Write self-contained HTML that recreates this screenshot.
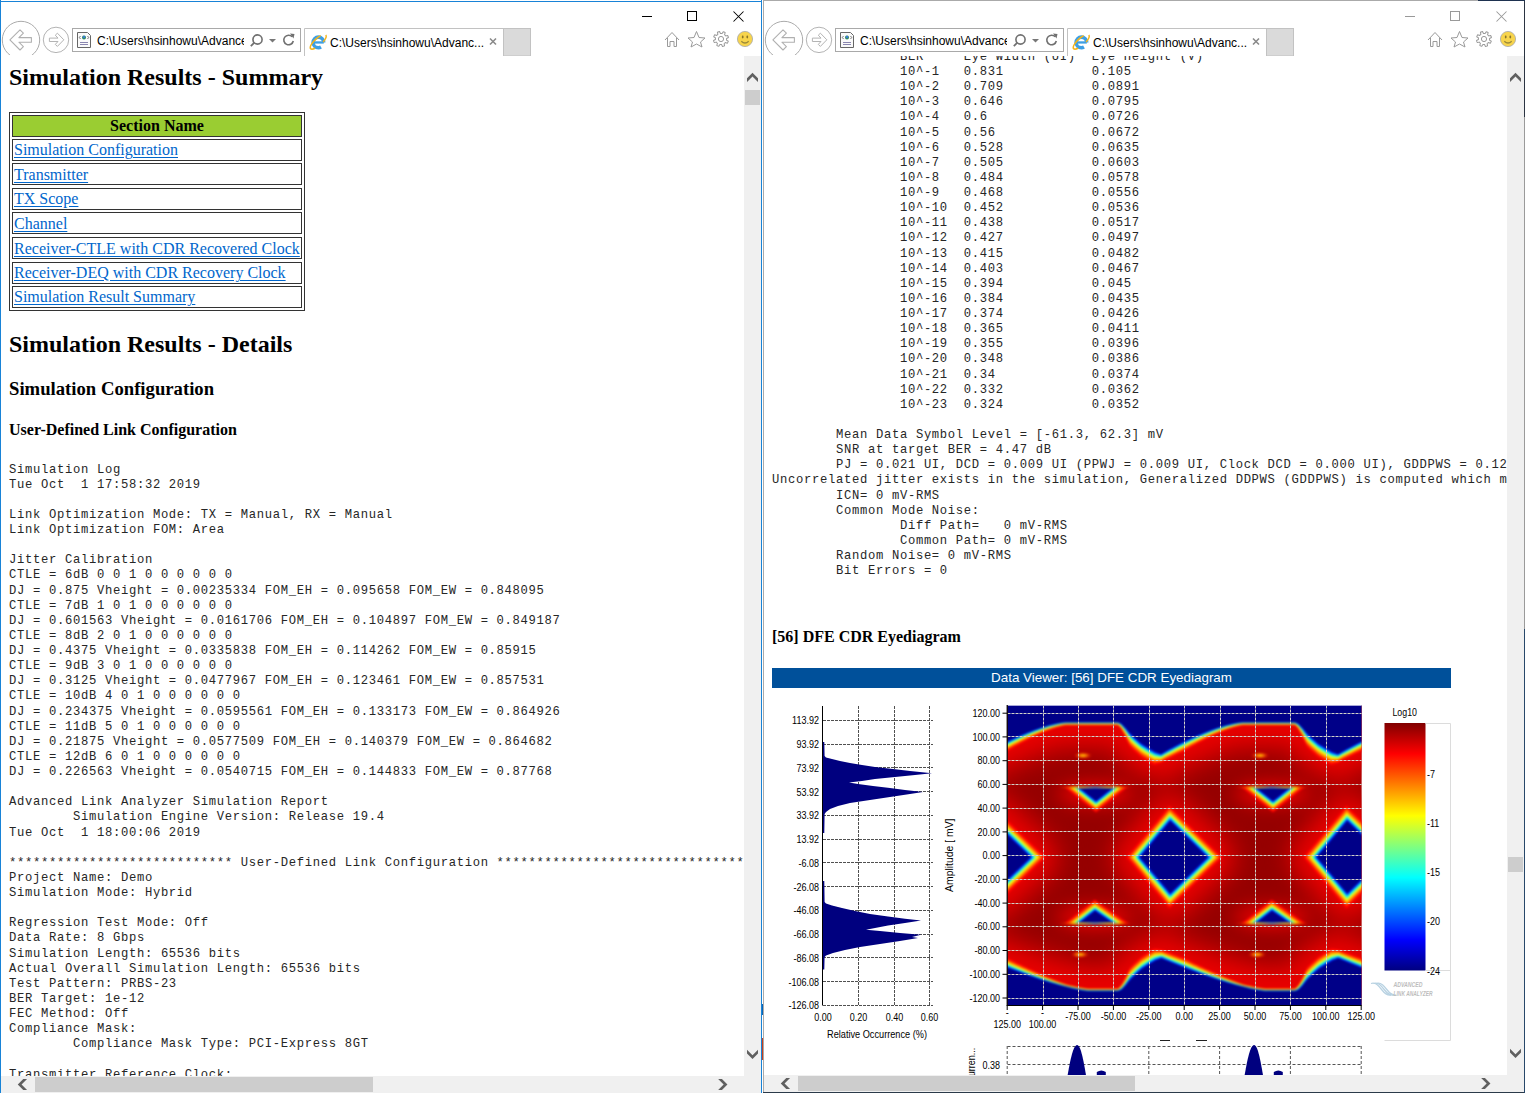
<!DOCTYPE html><html><head><meta charset="utf-8"><style>
*{margin:0;padding:0;box-sizing:border-box}
html,body{width:1525px;height:1093px;overflow:hidden;background:#fff}
.a{position:absolute}
.ui{font-family:"Liberation Sans",sans-serif;font-size:12px;color:#000;white-space:pre}
.pre{font-family:"Liberation Mono",monospace;font-size:12.2px;letter-spacing:0.68px;line-height:15.125px;white-space:pre;color:#262626}
.serif{font-family:"Liberation Serif",serif;font-weight:bold;white-space:pre;color:#000}
.clip{overflow:hidden}
.ch{font-family:"Liberation Sans",sans-serif;font-size:11px;white-space:pre;color:#000}
</style></head><body>
<div class="a" style="left:0px;top:0;width:762px;height:1093px;background:#fff"></div><svg class="a" style="left:0px;top:0" width="762" height="56" viewBox="0 0 762 56"><path d="M642 16.5H652" stroke="#000" stroke-width="1"/><rect x="687.5" y="11.5" width="9" height="9" fill="none" stroke="#000" stroke-width="1"/><path d="M733.5 11.5L743.5 21.5M743.5 11.5L733.5 21.5" stroke="#000" stroke-width="1.05"/><clipPath id="cb0"><rect x="0" y="0" width="70" height="55"/></clipPath><circle cx="21" cy="40" r="18.7" fill="none" stroke="#ababab" stroke-width="1" clip-path="url(#cb0)"/><path d="M9.9 39.9L20 29.8L23.4 33.2L18.9 37.6H31.4V42.2H18.9L23.4 46.6L20 50Z" fill="none" stroke="#b0b0b0" stroke-width="1.1" stroke-linejoin="round"/><circle cx="56" cy="39.9" r="12.7" fill="none" stroke="#b4b4b4" stroke-width="1"/><path d="M49.4 38.1H58L55.3 35.2L57.4 33.2L63.8 39.8L57.4 46.4L55.3 44.4L58 41.5H49.4Z" fill="none" stroke="#b4b4b4" stroke-width="1" stroke-linejoin="round"/><rect x="72.5" y="28.5" width="228" height="23" fill="#fff" stroke="#a9a9a9" stroke-width="1"/><path d="M77.5 32.5H87.5L90.5 35.5V47.5H77.5Z" fill="#fafafa" stroke="#666" stroke-width="1"/><circle cx="84" cy="37.5" r="2" fill="#2a8a5a"/><circle cx="84" cy="37" r="1.2" fill="#3a7bd5"/><path d="M80.5 36L79.3 37.5L80.5 39M87.5 36L88.7 37.5L87.5 39" fill="none" stroke="#555" stroke-width="0.8"/><path d="M80 42.5H88M80 44.5H88" stroke="#8a86b0" stroke-width="1"/><circle cx="257.5" cy="39.5" r="4.6" fill="none" stroke="#707070" stroke-width="1.6"/><path d="M254.3 42.7L250.8 46.2" stroke="#707070" stroke-width="1.8"/><path d="M269 39H276L272.5 42.5Z" fill="#777"/><path d="M292.2 36.8A4.8 4.8 0 1 0 293.3 41" fill="none" stroke="#707070" stroke-width="1.6"/><path d="M290 33.5L294.5 34L293.5 38.5Z" fill="#707070"/><path d="M304.5 56V28.5H503.5V56" fill="#fff" stroke="#c2c2c2" stroke-width="1"/><rect x="503.5" y="28.5" width="27" height="27.5" fill="#dadada" stroke="#c2c2c2" stroke-width="1"/><circle cx="318.4" cy="42.4" r="5.3" fill="none" stroke="#3d9fe4" stroke-width="3.6" stroke-dasharray="0 5.4 27.9"/><rect x="313.2" y="41.3" width="10.6" height="2.3" fill="#3d9fe4"/><ellipse cx="318.2" cy="41.8" rx="10.2" ry="3.6" fill="none" stroke="#f4b41a" stroke-width="1.5" transform="rotate(-42 318.2 41.8)" stroke-dasharray="22 10" stroke-dashoffset="14"/><path d="M490 38.5L496 44.5M496 38.5L490 44.5" stroke="#8a8a8a" stroke-width="1.6"/><path d="M665 40L672 32.5L679 40M667.5 38V46.5H670V41.5H674V46.5H676.5V38" fill="none" stroke="#9a9a9a" stroke-width="1" stroke-linejoin="round"/><path d="M696.5 31.5L699 37.5L705 38L700.5 42L702 47L696.5 44L691 47L692.5 42L688 38L694 37.5Z" fill="none" stroke="#9a9a9a" stroke-width="1" stroke-linejoin="round"/><path d="M728.60 39.00L728.56 39.74L728.45 40.48L726.36 40.63L726.17 41.14L725.94 41.64L725.66 42.11L726.87 43.82L726.37 44.37L725.82 44.87L725.22 45.32L723.64 43.94L723.14 44.17L722.63 44.36L722.09 44.49L721.74 46.56L721.00 46.60L720.26 46.56L719.52 46.45L719.37 44.36L718.86 44.17L718.36 43.94L717.89 43.66L716.18 44.87L715.63 44.37L715.13 43.82L714.68 43.22L716.06 41.64L715.83 41.14L715.64 40.63L715.51 40.09L713.44 39.74L713.40 39.00L713.44 38.26L713.55 37.52L715.64 37.37L715.83 36.86L716.06 36.36L716.34 35.89L715.13 34.18L715.63 33.63L716.18 33.13L716.78 32.68L718.36 34.06L718.86 33.83L719.37 33.64L719.91 33.51L720.26 31.44L721.00 31.40L721.74 31.44L722.48 31.55L722.63 33.64L723.14 33.83L723.64 34.06L724.11 34.34L725.82 33.13L726.37 33.63L726.87 34.18L727.32 34.78L725.94 36.36L726.17 36.86L726.36 37.37L726.49 37.91L728.56 38.26Z" fill="none" stroke="#9a9a9a" stroke-width="1" stroke-linejoin="round" transform="rotate(22.5 721 39)"/><circle cx="721" cy="39" r="2.6" fill="none" stroke="#9a9a9a" stroke-width="1"/><circle cx="745" cy="39" r="7.6" fill="#f7d44c" stroke="#a8a8a8" stroke-width="0.8"/><ellipse cx="742.7" cy="37" rx="0.9" ry="1.4" fill="#8a7428"/><ellipse cx="747.3" cy="37" rx="0.9" ry="1.4" fill="#8a7428"/><path d="M741.3 41.2Q745 44.8 748.7 41.2" fill="none" stroke="#9b8a3a" stroke-width="1.2"/></svg><div class="a ui clip" style="left:97px;top:32px;width:147px;height:18px;line-height:18px">C:\Users\hsinhowu\AdvancedLinkAnalyzer</div><div class="a ui clip" style="left:330px;top:34px;width:158px;height:18px;line-height:18px">C:\Users\hsinhowu\Advanc...</div><div class="a" style="left:0px;top:1px;width:762px;height:1px;background:#1883d7"></div><div class="a" style="left:0px;top:0;width:1px;height:1093px;background:#1883d7"></div><div class="a" style="left:761px;top:0;width:1px;height:1093px;background:#1883d7"></div>
<div class="a clip" style="left:1px;top:56px;width:743px;height:1020px"><div class="a serif" style="left:8px;top:6px;font-size:24px;line-height:30px">Simulation Results - Summary</div><div class="a" style="left:8px;top:56px;width:296px;height:199px;border:1px solid #333;border-right-color:#333;border-bottom-color:#333"></div><div class="a serif" style="left:11px;top:59.0px;width:290px;height:22px;border:1px solid #333;background:#9acd32;text-align:center;font-size:16px;line-height:20px">Section Name</div><div class="a" style="left:11px;top:83.2px;width:290px;height:22px;border:1px solid #333"></div><div class="a" style="left:13px;top:84.4px;font-family:'Liberation Serif',serif;font-size:16px;line-height:20px;color:#0066cc;text-decoration:underline;text-underline-offset:2.2px;white-space:pre">Simulation Configuration</div><div class="a" style="left:11px;top:107.3px;width:290px;height:22px;border:1px solid #333"></div><div class="a" style="left:13px;top:108.5px;font-family:'Liberation Serif',serif;font-size:16px;line-height:20px;color:#0066cc;text-decoration:underline;text-underline-offset:2.2px;white-space:pre">Transmitter</div><div class="a" style="left:11px;top:132.0px;width:290px;height:22px;border:1px solid #333"></div><div class="a" style="left:13px;top:133.2px;font-family:'Liberation Serif',serif;font-size:16px;line-height:20px;color:#0066cc;text-decoration:underline;text-underline-offset:2.2px;white-space:pre">TX Scope</div><div class="a" style="left:11px;top:156.3px;width:290px;height:22px;border:1px solid #333"></div><div class="a" style="left:13px;top:157.5px;font-family:'Liberation Serif',serif;font-size:16px;line-height:20px;color:#0066cc;text-decoration:underline;text-underline-offset:2.2px;white-space:pre">Channel</div><div class="a" style="left:11px;top:181.3px;width:290px;height:22px;border:1px solid #333"></div><div class="a" style="left:13px;top:182.5px;font-family:'Liberation Serif',serif;font-size:16px;line-height:20px;color:#0066cc;text-decoration:underline;text-underline-offset:2.2px;white-space:pre">Receiver-CTLE with CDR Recovered Clock</div><div class="a" style="left:11px;top:205.5px;width:290px;height:22px;border:1px solid #333"></div><div class="a" style="left:13px;top:206.7px;font-family:'Liberation Serif',serif;font-size:16px;line-height:20px;color:#0066cc;text-decoration:underline;text-underline-offset:2.2px;white-space:pre">Receiver-DEQ with CDR Recovery Clock</div><div class="a" style="left:11px;top:229.5px;width:290px;height:22px;border:1px solid #333"></div><div class="a" style="left:13px;top:230.7px;font-family:'Liberation Serif',serif;font-size:16px;line-height:20px;color:#0066cc;text-decoration:underline;text-underline-offset:2.2px;white-space:pre">Simulation Result Summary</div><div class="a serif" style="left:8px;top:273px;font-size:24px;line-height:30px">Simulation Results - Details</div><div class="a serif" style="left:8px;top:322px;font-size:18.7px;line-height:22px">Simulation Configuration</div><div class="a serif" style="left:8px;top:364px;font-size:16px;line-height:20px">User-Defined Link Configuration</div><div class="a pre" style="left:8px;top:406.6px">Simulation Log
Tue Oct  1 17:58:32 2019

Link Optimization Mode: TX = Manual, RX = Manual
Link Optimization FOM: Area

Jitter Calibration
CTLE = 6dB 0 0 1 0 0 0 0 0 0
DJ = 0.875 Vheight = 0.00235334 FOM_EH = 0.095658 FOM_EW = 0.848095
CTLE = 7dB 1 0 1 0 0 0 0 0 0
DJ = 0.601563 Vheight = 0.0161706 FOM_EH = 0.104897 FOM_EW = 0.849187
CTLE = 8dB 2 0 1 0 0 0 0 0 0
DJ = 0.4375 Vheight = 0.0335838 FOM_EH = 0.114262 FOM_EW = 0.85915
CTLE = 9dB 3 0 1 0 0 0 0 0 0
DJ = 0.3125 Vheight = 0.0477967 FOM_EH = 0.123461 FOM_EW = 0.857531
CTLE = 10dB 4 0 1 0 0 0 0 0 0
DJ = 0.234375 Vheight = 0.0595561 FOM_EH = 0.133173 FOM_EW = 0.864926
CTLE = 11dB 5 0 1 0 0 0 0 0 0
DJ = 0.21875 Vheight = 0.0577509 FOM_EH = 0.140379 FOM_EW = 0.864682
CTLE = 12dB 6 0 1 0 0 0 0 0 0
DJ = 0.226563 Vheight = 0.0540715 FOM_EH = 0.144833 FOM_EW = 0.87768

Advanced Link Analyzer Simulation Report
        Simulation Engine Version: Release 19.4
Tue Oct  1 18:00:06 2019

**************************** User-Defined Link Configuration ****************************************
Project Name: Demo
Simulation Mode: Hybrid

Regression Test Mode: Off
Data Rate: 8 Gbps
Simulation Length: 65536 bits
Actual Overall Simulation Length: 65536 bits
Test Pattern: PRBS-23
BER Target: 1e-12
FEC Method: Off
Compliance Mask:
        Compliance Mask Type: PCI-Express 8GT

Transmitter Reference Clock:
        Clock Jitter: 0</div></div>
<div class="a" style="left:744px;top:56px;width:17px;height:1037px;background:#f0f0f0"></div><div class="a" style="left:745px;top:90px;width:15px;height:15px;background:#cdcdcd"></div><div class="a" style="left:1px;top:1076px;width:743px;height:17px;background:#f0f0f0"></div><div class="a" style="left:35px;top:1077px;width:338px;height:15px;background:#cdcdcd"></div><svg class="a" style="left:0px;top:0" width="762" height="1093"><polygon points="747.00,78.20 752.50,72.70 758.00,78.20 758.00,82.00 752.50,76.50 747.00,82.00" fill="#606060"/><polygon points="747.00,1053.55 752.50,1059.05 758.00,1053.55 758.00,1049.75 752.50,1055.25 747.00,1049.75" fill="#606060"/><polygon points="23.25,1079.10 17.75,1084.60 23.25,1090.10 27.05,1090.10 21.55,1084.60 27.05,1079.10" fill="#606060"/><polygon points="721.95,1079.10 727.45,1084.60 721.95,1090.10 718.15,1090.10 723.65,1084.60 718.15,1079.10" fill="#606060"/></svg>
<div class="a" style="left:763px;top:0;width:762px;height:1093px;background:#fff"></div><svg class="a" style="left:763px;top:0" width="762" height="56" viewBox="0 0 762 56"><path d="M642 16.5H652" stroke="#999" stroke-width="1"/><rect x="687.5" y="11.5" width="9" height="9" fill="none" stroke="#999" stroke-width="1"/><path d="M733.5 11.5L743.5 21.5M743.5 11.5L733.5 21.5" stroke="#999" stroke-width="1.05"/><clipPath id="cb763"><rect x="0" y="0" width="70" height="55"/></clipPath><circle cx="21" cy="40" r="18.7" fill="none" stroke="#ababab" stroke-width="1" clip-path="url(#cb763)"/><path d="M9.9 39.9L20 29.8L23.4 33.2L18.9 37.6H31.4V42.2H18.9L23.4 46.6L20 50Z" fill="none" stroke="#b0b0b0" stroke-width="1.1" stroke-linejoin="round"/><circle cx="56" cy="39.9" r="12.7" fill="none" stroke="#b4b4b4" stroke-width="1"/><path d="M49.4 38.1H58L55.3 35.2L57.4 33.2L63.8 39.8L57.4 46.4L55.3 44.4L58 41.5H49.4Z" fill="none" stroke="#b4b4b4" stroke-width="1" stroke-linejoin="round"/><rect x="72.5" y="28.5" width="228" height="23" fill="#fff" stroke="#a9a9a9" stroke-width="1"/><path d="M77.5 32.5H87.5L90.5 35.5V47.5H77.5Z" fill="#fafafa" stroke="#666" stroke-width="1"/><circle cx="84" cy="37.5" r="2" fill="#2a8a5a"/><circle cx="84" cy="37" r="1.2" fill="#3a7bd5"/><path d="M80.5 36L79.3 37.5L80.5 39M87.5 36L88.7 37.5L87.5 39" fill="none" stroke="#555" stroke-width="0.8"/><path d="M80 42.5H88M80 44.5H88" stroke="#8a86b0" stroke-width="1"/><circle cx="257.5" cy="39.5" r="4.6" fill="none" stroke="#707070" stroke-width="1.6"/><path d="M254.3 42.7L250.8 46.2" stroke="#707070" stroke-width="1.8"/><path d="M269 39H276L272.5 42.5Z" fill="#777"/><path d="M292.2 36.8A4.8 4.8 0 1 0 293.3 41" fill="none" stroke="#707070" stroke-width="1.6"/><path d="M290 33.5L294.5 34L293.5 38.5Z" fill="#707070"/><path d="M304.5 56V28.5H503.5V56" fill="#fff" stroke="#c2c2c2" stroke-width="1"/><rect x="503.5" y="28.5" width="27" height="27.5" fill="#dadada" stroke="#c2c2c2" stroke-width="1"/><circle cx="318.4" cy="42.4" r="5.3" fill="none" stroke="#3d9fe4" stroke-width="3.6" stroke-dasharray="0 5.4 27.9"/><rect x="313.2" y="41.3" width="10.6" height="2.3" fill="#3d9fe4"/><ellipse cx="318.2" cy="41.8" rx="10.2" ry="3.6" fill="none" stroke="#f4b41a" stroke-width="1.5" transform="rotate(-42 318.2 41.8)" stroke-dasharray="22 10" stroke-dashoffset="14"/><path d="M490 38.5L496 44.5M496 38.5L490 44.5" stroke="#8a8a8a" stroke-width="1.6"/><path d="M665 40L672 32.5L679 40M667.5 38V46.5H670V41.5H674V46.5H676.5V38" fill="none" stroke="#9a9a9a" stroke-width="1" stroke-linejoin="round"/><path d="M696.5 31.5L699 37.5L705 38L700.5 42L702 47L696.5 44L691 47L692.5 42L688 38L694 37.5Z" fill="none" stroke="#9a9a9a" stroke-width="1" stroke-linejoin="round"/><path d="M728.60 39.00L728.56 39.74L728.45 40.48L726.36 40.63L726.17 41.14L725.94 41.64L725.66 42.11L726.87 43.82L726.37 44.37L725.82 44.87L725.22 45.32L723.64 43.94L723.14 44.17L722.63 44.36L722.09 44.49L721.74 46.56L721.00 46.60L720.26 46.56L719.52 46.45L719.37 44.36L718.86 44.17L718.36 43.94L717.89 43.66L716.18 44.87L715.63 44.37L715.13 43.82L714.68 43.22L716.06 41.64L715.83 41.14L715.64 40.63L715.51 40.09L713.44 39.74L713.40 39.00L713.44 38.26L713.55 37.52L715.64 37.37L715.83 36.86L716.06 36.36L716.34 35.89L715.13 34.18L715.63 33.63L716.18 33.13L716.78 32.68L718.36 34.06L718.86 33.83L719.37 33.64L719.91 33.51L720.26 31.44L721.00 31.40L721.74 31.44L722.48 31.55L722.63 33.64L723.14 33.83L723.64 34.06L724.11 34.34L725.82 33.13L726.37 33.63L726.87 34.18L727.32 34.78L725.94 36.36L726.17 36.86L726.36 37.37L726.49 37.91L728.56 38.26Z" fill="none" stroke="#9a9a9a" stroke-width="1" stroke-linejoin="round" transform="rotate(22.5 721 39)"/><circle cx="721" cy="39" r="2.6" fill="none" stroke="#9a9a9a" stroke-width="1"/><circle cx="745" cy="39" r="7.6" fill="#f7d44c" stroke="#a8a8a8" stroke-width="0.8"/><ellipse cx="742.7" cy="37" rx="0.9" ry="1.4" fill="#8a7428"/><ellipse cx="747.3" cy="37" rx="0.9" ry="1.4" fill="#8a7428"/><path d="M741.3 41.2Q745 44.8 748.7 41.2" fill="none" stroke="#9b8a3a" stroke-width="1.2"/></svg><div class="a ui clip" style="left:860px;top:32px;width:147px;height:18px;line-height:18px">C:\Users\hsinhowu\AdvancedLinkAnalyzer</div><div class="a ui clip" style="left:1093px;top:34px;width:158px;height:18px;line-height:18px">C:\Users\hsinhowu\Advanc...</div><div class="a" style="left:763px;top:0px;width:762px;height:1px;background:#aaaaaa"></div><div class="a" style="left:763px;top:0;width:1px;height:1093px;background:#aaaaaa"></div><div class="a" style="left:1524px;top:0;width:1px;height:1093px;background:#aaaaaa"></div>
<div class="a clip" style="left:764px;top:56px;width:743px;height:1019px"><div class="a pre" style="left:8px;top:-6.100000000000001px">                BER     Eye Width (UI)  Eye Height (V)
                10^-1   0.831           0.105
                10^-2   0.709           0.0891
                10^-3   0.646           0.0795
                10^-4   0.6             0.0726
                10^-5   0.56            0.0672
                10^-6   0.528           0.0635
                10^-7   0.505           0.0603
                10^-8   0.484           0.0578
                10^-9   0.468           0.0556
                10^-10  0.452           0.0536
                10^-11  0.438           0.0517
                10^-12  0.427           0.0497
                10^-13  0.415           0.0482
                10^-14  0.403           0.0467
                10^-15  0.394           0.045
                10^-16  0.384           0.0435
                10^-17  0.374           0.0426
                10^-18  0.365           0.0411
                10^-19  0.355           0.0396
                10^-20  0.348           0.0386
                10^-21  0.34            0.0374
                10^-22  0.332           0.0362
                10^-23  0.324           0.0352

        Mean Data Symbol Level = [-61.3, 62.3] mV
        SNR at target BER = 4.47 dB
        PJ = 0.021 UI, DCD = 0.009 UI (PPWJ = 0.009 UI, Clock DCD = 0.000 UI), GDDPWS = 0.128 UI
Uncorrelated jitter exists in the simulation, Generalized DDPWS (GDDPWS) is computed which may be pessimistic.
        ICN= 0 mV-RMS
        Common Mode Noise:
                Diff Path=   0 mV-RMS
                Common Path= 0 mV-RMS
        Random Noise= 0 mV-RMS
        Bit Errors = 0</div><div class="a serif" style="left:8px;top:571px;font-size:16px;line-height:20px">[56] DFE CDR Eyediagram</div><div class="a" style="left:8px;top:612px;width:679px;height:20px;background:#00509a"></div><div class="a" style="left:8px;top:612px;width:679px;height:20px;line-height:20px;text-align:center;color:#fff;font-family:'Liberation Sans',sans-serif;font-size:13.4px">Data Viewer: [56] DFE CDR Eyediagram</div><svg class="a" style="left:0px;top:634px" width="743" height="386" viewBox="764 690 743 386"><defs><filter id="bl1" x="-10%" y="-10%" width="120%" height="120%" color-interpolation-filters="sRGB"><feGaussianBlur stdDeviation="1.2"/></filter><filter id="bl2" x="-20%" y="-20%" width="140%" height="140%" color-interpolation-filters="sRGB"><feGaussianBlur stdDeviation="9"/></filter><filter id="bl3" x="-50%" y="-50%" width="200%" height="200%" color-interpolation-filters="sRGB"><feGaussianBlur stdDeviation="1.5 1"/></filter><clipPath id="pc"><rect x="1007.5" y="705.5" width="354.0" height="299.5"/></clipPath><clipPath id="cu"><rect x="863" y="787.5" width="112" height="40"/><rect x="1040" y="787.5" width="112" height="40"/><rect x="1217" y="787.5" width="112" height="40"/></clipPath><clipPath id="cd"><rect x="863" y="883.2" width="112" height="40"/><rect x="1040" y="883.2" width="112" height="40"/><rect x="1217" y="883.2" width="112" height="40"/></clipPath><radialGradient id="spk"><stop offset="0" stop-color="#ffe000"/><stop offset="0.45" stop-color="#ff8000" stop-opacity="0.8"/><stop offset="1" stop-color="#ff0000" stop-opacity="0"/></radialGradient><linearGradient id="strk" x1="0" x2="1" y1="0" y2="0"><stop offset="0" stop-color="#ff4000" stop-opacity="0"/><stop offset="0.3" stop-color="#ffd000"/><stop offset="0.5" stop-color="#6090a0"/><stop offset="0.7" stop-color="#ffd000"/><stop offset="1" stop-color="#ff4000" stop-opacity="0"/></linearGradient></defs><g clip-path="url(#pc)"><rect x="950" y="600" width="460" height="520" fill="#960000"/><g filter="url(#bl2)"><polygon points="962.8,857.15 993.1,820.85 1030.8,857.15 993.1,893.45" fill="none" stroke="#c00000" stroke-opacity="0.8" stroke-width="68" stroke-linejoin="round"/><polygon points="1139.8,857.15 1170.2,820.85 1207.8,857.15 1170.2,893.45" fill="none" stroke="#c00000" stroke-opacity="0.8" stroke-width="68" stroke-linejoin="round"/><polygon points="1316.8,857.15 1347.2,820.85 1384.8,857.15 1347.2,893.45" fill="none" stroke="#c00000" stroke-opacity="0.8" stroke-width="68" stroke-linejoin="round"/><polygon points="950.0,600.00 950.0,729.85 951.0,731.09 952.0,732.33 953.0,733.37 954.0,734.34 955.0,735.30 956.0,736.27 957.0,737.23 958.0,738.17 959.0,739.05 960.0,739.92 961.0,740.79 962.0,741.67 963.0,742.54 964.0,743.41 965.0,744.06 966.0,744.68 967.0,745.31 968.0,745.93 969.0,746.55 970.0,747.18 971.0,747.80 972.0,748.41 973.0,748.97 974.0,749.52 975.0,750.08 976.0,750.63 977.0,751.19 978.0,751.74 979.0,752.16 980.0,752.56 981.0,752.96 982.0,753.36 983.0,753.76 984.0,754.16 985.0,753.48 986.0,752.92 987.0,752.35 988.0,751.79 989.0,751.23 990.0,750.67 991.0,750.12 992.0,749.57 993.0,749.03 994.0,748.49 995.0,747.95 996.0,747.41 997.0,746.88 998.0,746.36 999.0,745.83 1000.0,745.31 1001.0,744.80 1002.0,744.29 1003.0,743.78 1004.0,743.27 1005.0,742.77 1006.0,742.28 1007.0,741.79 1008.0,741.30 1009.0,740.81 1010.0,740.33 1011.0,739.86 1012.0,739.38 1013.0,738.92 1014.0,738.45 1015.0,737.99 1016.0,737.54 1017.0,737.09 1018.0,736.64 1019.0,736.20 1020.0,735.76 1021.0,735.33 1022.0,734.90 1023.0,734.47 1024.0,734.06 1025.0,733.64 1026.0,733.23 1027.0,732.83 1028.0,732.43 1029.0,732.03 1030.0,731.64 1031.0,731.26 1032.0,730.88 1033.0,730.50 1034.0,730.14 1035.0,729.77 1036.0,729.42 1037.0,729.06 1038.0,728.72 1039.0,728.38 1040.0,728.04 1041.0,727.71 1042.0,727.39 1043.0,727.08 1044.0,726.77 1045.0,726.47 1046.0,726.17 1047.0,725.88 1048.0,725.60 1049.0,725.32 1050.0,725.06 1051.0,724.80 1052.0,724.55 1053.0,724.31 1054.0,724.07 1055.0,723.85 1056.0,723.63 1057.0,723.43 1058.0,723.23 1059.0,723.05 1060.0,722.88 1061.0,722.72 1062.0,722.58 1063.0,722.45 1064.0,722.34 1065.0,722.25 1066.0,722.20 1067.0,722.20 1068.0,722.20 1069.0,722.20 1070.0,722.20 1071.0,722.20 1072.0,722.20 1073.0,722.20 1074.0,722.20 1075.0,722.20 1076.0,722.20 1077.0,722.20 1078.0,722.20 1079.0,722.20 1080.0,722.20 1081.0,722.20 1082.0,722.20 1083.0,722.20 1084.0,722.20 1085.0,722.20 1086.0,722.20 1087.0,722.20 1088.0,722.20 1089.0,722.20 1090.0,722.20 1091.0,722.20 1092.0,722.20 1093.0,722.20 1094.0,722.20 1095.0,722.20 1096.0,722.20 1097.0,722.20 1098.0,722.20 1099.0,722.20 1100.0,722.20 1101.0,722.20 1102.0,722.20 1103.0,722.20 1104.0,722.20 1105.0,722.20 1106.0,722.20 1107.0,722.20 1108.0,722.20 1109.0,722.20 1110.0,722.20 1111.0,722.20 1112.0,722.20 1113.0,722.20 1114.0,722.20 1115.0,722.20 1116.0,722.20 1117.0,722.20 1118.0,722.28 1119.0,722.67 1120.0,723.07 1121.0,723.46 1122.0,724.40 1123.0,725.40 1124.0,726.40 1125.0,727.40 1126.0,728.61 1127.0,729.85 1128.0,731.09 1129.0,732.33 1130.0,733.37 1131.0,734.34 1132.0,735.30 1133.0,736.27 1134.0,737.23 1135.0,738.17 1136.0,739.05 1137.0,739.92 1138.0,740.79 1139.0,741.67 1140.0,742.54 1141.0,743.41 1142.0,744.06 1143.0,744.68 1144.0,745.31 1145.0,745.93 1146.0,746.55 1147.0,747.18 1148.0,747.80 1149.0,748.41 1150.0,748.97 1151.0,749.52 1152.0,750.08 1153.0,750.63 1154.0,751.19 1155.0,751.74 1156.0,752.16 1157.0,752.56 1158.0,752.96 1159.0,753.36 1160.0,753.76 1161.0,754.16 1162.0,753.48 1163.0,752.92 1164.0,752.35 1165.0,751.79 1166.0,751.23 1167.0,750.67 1168.0,750.12 1169.0,749.57 1170.0,749.03 1171.0,748.49 1172.0,747.95 1173.0,747.41 1174.0,746.88 1175.0,746.36 1176.0,745.83 1177.0,745.31 1178.0,744.80 1179.0,744.29 1180.0,743.78 1181.0,743.27 1182.0,742.77 1183.0,742.28 1184.0,741.79 1185.0,741.30 1186.0,740.81 1187.0,740.33 1188.0,739.86 1189.0,739.38 1190.0,738.92 1191.0,738.45 1192.0,737.99 1193.0,737.54 1194.0,737.09 1195.0,736.64 1196.0,736.20 1197.0,735.76 1198.0,735.33 1199.0,734.90 1200.0,734.47 1201.0,734.06 1202.0,733.64 1203.0,733.23 1204.0,732.83 1205.0,732.43 1206.0,732.03 1207.0,731.64 1208.0,731.26 1209.0,730.88 1210.0,730.50 1211.0,730.14 1212.0,729.77 1213.0,729.42 1214.0,729.06 1215.0,728.72 1216.0,728.38 1217.0,728.04 1218.0,727.71 1219.0,727.39 1220.0,727.08 1221.0,726.77 1222.0,726.47 1223.0,726.17 1224.0,725.88 1225.0,725.60 1226.0,725.32 1227.0,725.06 1228.0,724.80 1229.0,724.55 1230.0,724.31 1231.0,724.07 1232.0,723.85 1233.0,723.63 1234.0,723.43 1235.0,723.23 1236.0,723.05 1237.0,722.88 1238.0,722.72 1239.0,722.58 1240.0,722.45 1241.0,722.34 1242.0,722.25 1243.0,722.20 1244.0,722.20 1245.0,722.20 1246.0,722.20 1247.0,722.20 1248.0,722.20 1249.0,722.20 1250.0,722.20 1251.0,722.20 1252.0,722.20 1253.0,722.20 1254.0,722.20 1255.0,722.20 1256.0,722.20 1257.0,722.20 1258.0,722.20 1259.0,722.20 1260.0,722.20 1261.0,722.20 1262.0,722.20 1263.0,722.20 1264.0,722.20 1265.0,722.20 1266.0,722.20 1267.0,722.20 1268.0,722.20 1269.0,722.20 1270.0,722.20 1271.0,722.20 1272.0,722.20 1273.0,722.20 1274.0,722.20 1275.0,722.20 1276.0,722.20 1277.0,722.20 1278.0,722.20 1279.0,722.20 1280.0,722.20 1281.0,722.20 1282.0,722.20 1283.0,722.20 1284.0,722.20 1285.0,722.20 1286.0,722.20 1287.0,722.20 1288.0,722.20 1289.0,722.20 1290.0,722.20 1291.0,722.20 1292.0,722.20 1293.0,722.20 1294.0,722.20 1295.0,722.28 1296.0,722.67 1297.0,723.07 1298.0,723.46 1299.0,724.40 1300.0,725.40 1301.0,726.40 1302.0,727.40 1303.0,728.61 1304.0,729.85 1305.0,731.09 1306.0,732.33 1307.0,733.37 1308.0,734.34 1309.0,735.30 1310.0,736.27 1311.0,737.23 1312.0,738.17 1313.0,739.05 1314.0,739.92 1315.0,740.79 1316.0,741.67 1317.0,742.54 1318.0,743.41 1319.0,744.06 1320.0,744.68 1321.0,745.31 1322.0,745.93 1323.0,746.55 1324.0,747.18 1325.0,747.80 1326.0,748.41 1327.0,748.97 1328.0,749.52 1329.0,750.08 1330.0,750.63 1331.0,751.19 1332.0,751.74 1333.0,752.16 1334.0,752.56 1335.0,752.96 1336.0,753.36 1337.0,753.76 1338.0,754.16 1339.0,753.48 1340.0,752.92 1341.0,752.35 1342.0,751.79 1343.0,751.23 1344.0,750.67 1345.0,750.12 1346.0,749.57 1347.0,749.03 1348.0,748.49 1349.0,747.95 1350.0,747.41 1351.0,746.88 1352.0,746.36 1353.0,745.83 1354.0,745.31 1355.0,744.80 1356.0,744.29 1357.0,743.78 1358.0,743.27 1359.0,742.77 1360.0,742.28 1361.0,741.79 1362.0,741.30 1363.0,740.81 1364.0,740.33 1365.0,739.86 1366.0,739.38 1367.0,738.92 1368.0,738.45 1369.0,737.99 1370.0,737.54 1371.0,737.09 1372.0,736.64 1373.0,736.20 1374.0,735.76 1375.0,735.33 1376.0,734.90 1377.0,734.47 1378.0,734.06 1379.0,733.64 1380.0,733.23 1381.0,732.83 1382.0,732.43 1383.0,732.03 1384.0,731.64 1385.0,731.26 1386.0,730.88 1387.0,730.50 1388.0,730.14 1389.0,729.77 1390.0,729.42 1391.0,729.06 1392.0,728.72 1393.0,728.38 1394.0,728.04 1395.0,727.71 1396.0,727.39 1397.0,727.08 1398.0,726.77 1399.0,726.47 1400.0,726.17 1401.0,725.88 1402.0,725.60 1403.0,725.32 1404.0,725.06 1405.0,724.80 1406.0,724.55 1407.0,724.31 1408.0,724.07 1409.0,723.85 1410.0,723.63 1410.0,600.00" fill="none" stroke="#c00000" stroke-opacity="0.8" stroke-width="68" stroke-linejoin="round"/><polygon points="950.0,1110.00 950.0,983.72 951.0,982.44 952.0,981.17 953.0,979.97 954.0,978.98 955.0,977.99 956.0,976.99 957.0,976.00 958.0,975.00 959.0,974.09 960.0,973.19 961.0,972.29 962.0,971.39 963.0,970.48 964.0,969.58 965.0,968.81 966.0,968.17 967.0,967.53 968.0,966.88 969.0,966.24 970.0,965.60 971.0,964.96 972.0,964.31 973.0,963.73 974.0,963.15 975.0,962.58 976.0,962.01 977.0,961.43 978.0,960.86 979.0,960.37 980.0,959.96 981.0,959.54 982.0,959.13 983.0,958.72 984.0,958.31 985.0,958.48 986.0,958.90 987.0,959.32 988.0,959.74 989.0,960.16 990.0,960.58 991.0,960.99 992.0,961.41 993.0,961.82 994.0,962.23 995.0,962.64 996.0,963.05 997.0,963.45 998.0,963.86 999.0,964.26 1000.0,964.66 1001.0,965.06 1002.0,965.46 1003.0,965.86 1004.0,966.25 1005.0,966.64 1006.0,967.04 1007.0,967.43 1008.0,967.81 1009.0,968.20 1010.0,968.59 1011.0,968.97 1012.0,969.35 1013.0,969.73 1014.0,970.11 1015.0,970.49 1016.0,970.86 1017.0,971.23 1018.0,971.60 1019.0,971.97 1020.0,972.34 1021.0,972.71 1022.0,973.07 1023.0,973.43 1024.0,973.79 1025.0,974.15 1026.0,974.51 1027.0,974.86 1028.0,975.21 1029.0,975.56 1030.0,975.91 1031.0,976.26 1032.0,976.60 1033.0,976.94 1034.0,977.28 1035.0,977.62 1036.0,977.95 1037.0,978.29 1038.0,978.62 1039.0,978.95 1040.0,979.27 1041.0,979.60 1042.0,979.92 1043.0,980.24 1044.0,980.55 1045.0,980.87 1046.0,981.18 1047.0,981.49 1048.0,981.80 1049.0,982.10 1050.0,982.40 1051.0,982.70 1052.0,983.00 1053.0,983.29 1054.0,983.58 1055.0,983.87 1056.0,984.15 1057.0,984.44 1058.0,984.72 1059.0,984.99 1060.0,985.26 1061.0,985.53 1062.0,985.80 1063.0,986.06 1064.0,986.32 1065.0,986.57 1066.0,986.83 1067.0,987.07 1068.0,987.32 1069.0,987.56 1070.0,987.79 1071.0,988.03 1072.0,988.25 1073.0,988.48 1074.0,988.69 1075.0,988.91 1076.0,989.11 1077.0,989.31 1078.0,989.51 1079.0,989.70 1080.0,989.88 1081.0,990.06 1082.0,990.23 1083.0,990.39 1084.0,990.54 1085.0,990.69 1086.0,990.82 1087.0,990.93 1088.0,991.03 1089.0,991.10 1090.0,991.10 1091.0,991.10 1092.0,991.10 1093.0,991.10 1094.0,991.10 1095.0,991.10 1096.0,991.10 1097.0,991.10 1098.0,991.10 1099.0,991.10 1100.0,991.10 1101.0,991.10 1102.0,991.10 1103.0,991.10 1104.0,991.10 1105.0,991.10 1106.0,991.10 1107.0,991.10 1108.0,991.10 1109.0,991.10 1110.0,991.10 1111.0,991.10 1112.0,991.10 1113.0,991.10 1114.0,991.10 1115.0,991.10 1116.0,991.10 1117.0,991.10 1118.0,991.10 1119.0,990.77 1120.0,990.37 1121.0,989.96 1122.0,989.24 1123.0,988.21 1124.0,987.18 1125.0,986.15 1126.0,985.00 1127.0,983.72 1128.0,982.44 1129.0,981.17 1130.0,979.97 1131.0,978.98 1132.0,977.99 1133.0,976.99 1134.0,976.00 1135.0,975.00 1136.0,974.09 1137.0,973.19 1138.0,972.29 1139.0,971.39 1140.0,970.48 1141.0,969.58 1142.0,968.81 1143.0,968.17 1144.0,967.53 1145.0,966.88 1146.0,966.24 1147.0,965.60 1148.0,964.96 1149.0,964.31 1150.0,963.73 1151.0,963.15 1152.0,962.58 1153.0,962.01 1154.0,961.43 1155.0,960.86 1156.0,960.37 1157.0,959.96 1158.0,959.54 1159.0,959.13 1160.0,958.72 1161.0,958.31 1162.0,958.48 1163.0,958.90 1164.0,959.32 1165.0,959.74 1166.0,960.16 1167.0,960.58 1168.0,960.99 1169.0,961.41 1170.0,961.82 1171.0,962.23 1172.0,962.64 1173.0,963.05 1174.0,963.45 1175.0,963.86 1176.0,964.26 1177.0,964.66 1178.0,965.06 1179.0,965.46 1180.0,965.86 1181.0,966.25 1182.0,966.64 1183.0,967.04 1184.0,967.43 1185.0,967.81 1186.0,968.20 1187.0,968.59 1188.0,968.97 1189.0,969.35 1190.0,969.73 1191.0,970.11 1192.0,970.49 1193.0,970.86 1194.0,971.23 1195.0,971.60 1196.0,971.97 1197.0,972.34 1198.0,972.71 1199.0,973.07 1200.0,973.43 1201.0,973.79 1202.0,974.15 1203.0,974.51 1204.0,974.86 1205.0,975.21 1206.0,975.56 1207.0,975.91 1208.0,976.26 1209.0,976.60 1210.0,976.94 1211.0,977.28 1212.0,977.62 1213.0,977.95 1214.0,978.29 1215.0,978.62 1216.0,978.95 1217.0,979.27 1218.0,979.60 1219.0,979.92 1220.0,980.24 1221.0,980.55 1222.0,980.87 1223.0,981.18 1224.0,981.49 1225.0,981.80 1226.0,982.10 1227.0,982.40 1228.0,982.70 1229.0,983.00 1230.0,983.29 1231.0,983.58 1232.0,983.87 1233.0,984.15 1234.0,984.44 1235.0,984.72 1236.0,984.99 1237.0,985.26 1238.0,985.53 1239.0,985.80 1240.0,986.06 1241.0,986.32 1242.0,986.57 1243.0,986.83 1244.0,987.07 1245.0,987.32 1246.0,987.56 1247.0,987.79 1248.0,988.03 1249.0,988.25 1250.0,988.48 1251.0,988.69 1252.0,988.91 1253.0,989.11 1254.0,989.31 1255.0,989.51 1256.0,989.70 1257.0,989.88 1258.0,990.06 1259.0,990.23 1260.0,990.39 1261.0,990.54 1262.0,990.69 1263.0,990.82 1264.0,990.93 1265.0,991.03 1266.0,991.10 1267.0,991.10 1268.0,991.10 1269.0,991.10 1270.0,991.10 1271.0,991.10 1272.0,991.10 1273.0,991.10 1274.0,991.10 1275.0,991.10 1276.0,991.10 1277.0,991.10 1278.0,991.10 1279.0,991.10 1280.0,991.10 1281.0,991.10 1282.0,991.10 1283.0,991.10 1284.0,991.10 1285.0,991.10 1286.0,991.10 1287.0,991.10 1288.0,991.10 1289.0,991.10 1290.0,991.10 1291.0,991.10 1292.0,991.10 1293.0,991.10 1294.0,991.10 1295.0,991.10 1296.0,990.77 1297.0,990.37 1298.0,989.96 1299.0,989.24 1300.0,988.21 1301.0,987.18 1302.0,986.15 1303.0,985.00 1304.0,983.72 1305.0,982.44 1306.0,981.17 1307.0,979.97 1308.0,978.98 1309.0,977.99 1310.0,976.99 1311.0,976.00 1312.0,975.00 1313.0,974.09 1314.0,973.19 1315.0,972.29 1316.0,971.39 1317.0,970.48 1318.0,969.58 1319.0,968.81 1320.0,968.17 1321.0,967.53 1322.0,966.88 1323.0,966.24 1324.0,965.60 1325.0,964.96 1326.0,964.31 1327.0,963.73 1328.0,963.15 1329.0,962.58 1330.0,962.01 1331.0,961.43 1332.0,960.86 1333.0,960.37 1334.0,959.96 1335.0,959.54 1336.0,959.13 1337.0,958.72 1338.0,958.31 1339.0,958.48 1340.0,958.90 1341.0,959.32 1342.0,959.74 1343.0,960.16 1344.0,960.58 1345.0,960.99 1346.0,961.41 1347.0,961.82 1348.0,962.23 1349.0,962.64 1350.0,963.05 1351.0,963.45 1352.0,963.86 1353.0,964.26 1354.0,964.66 1355.0,965.06 1356.0,965.46 1357.0,965.86 1358.0,966.25 1359.0,966.64 1360.0,967.04 1361.0,967.43 1362.0,967.81 1363.0,968.20 1364.0,968.59 1365.0,968.97 1366.0,969.35 1367.0,969.73 1368.0,970.11 1369.0,970.49 1370.0,970.86 1371.0,971.23 1372.0,971.60 1373.0,971.97 1374.0,972.34 1375.0,972.71 1376.0,973.07 1377.0,973.43 1378.0,973.79 1379.0,974.15 1380.0,974.51 1381.0,974.86 1382.0,975.21 1383.0,975.56 1384.0,975.91 1385.0,976.26 1386.0,976.60 1387.0,976.94 1388.0,977.28 1389.0,977.62 1390.0,977.95 1391.0,978.29 1392.0,978.62 1393.0,978.95 1394.0,979.27 1395.0,979.60 1396.0,979.92 1397.0,980.24 1398.0,980.55 1399.0,980.87 1400.0,981.18 1401.0,981.49 1402.0,981.80 1403.0,982.10 1404.0,982.40 1405.0,982.70 1406.0,983.00 1407.0,983.29 1408.0,983.58 1409.0,983.87 1410.0,984.15 1410.0,1110.00" fill="none" stroke="#c00000" stroke-opacity="0.8" stroke-width="68" stroke-linejoin="round"/><polygon points="962.8,857.15 993.1,820.85 1030.8,857.15 993.1,893.45" fill="none" stroke="#f00000" stroke-opacity="0.85" stroke-width="40" stroke-linejoin="round"/><polygon points="1139.8,857.15 1170.2,820.85 1207.8,857.15 1170.2,893.45" fill="none" stroke="#f00000" stroke-opacity="0.85" stroke-width="40" stroke-linejoin="round"/><polygon points="1316.8,857.15 1347.2,820.85 1384.8,857.15 1347.2,893.45" fill="none" stroke="#f00000" stroke-opacity="0.85" stroke-width="40" stroke-linejoin="round"/><polygon points="950.0,600.00 950.0,729.85 951.0,731.09 952.0,732.33 953.0,733.37 954.0,734.34 955.0,735.30 956.0,736.27 957.0,737.23 958.0,738.17 959.0,739.05 960.0,739.92 961.0,740.79 962.0,741.67 963.0,742.54 964.0,743.41 965.0,744.06 966.0,744.68 967.0,745.31 968.0,745.93 969.0,746.55 970.0,747.18 971.0,747.80 972.0,748.41 973.0,748.97 974.0,749.52 975.0,750.08 976.0,750.63 977.0,751.19 978.0,751.74 979.0,752.16 980.0,752.56 981.0,752.96 982.0,753.36 983.0,753.76 984.0,754.16 985.0,753.48 986.0,752.92 987.0,752.35 988.0,751.79 989.0,751.23 990.0,750.67 991.0,750.12 992.0,749.57 993.0,749.03 994.0,748.49 995.0,747.95 996.0,747.41 997.0,746.88 998.0,746.36 999.0,745.83 1000.0,745.31 1001.0,744.80 1002.0,744.29 1003.0,743.78 1004.0,743.27 1005.0,742.77 1006.0,742.28 1007.0,741.79 1008.0,741.30 1009.0,740.81 1010.0,740.33 1011.0,739.86 1012.0,739.38 1013.0,738.92 1014.0,738.45 1015.0,737.99 1016.0,737.54 1017.0,737.09 1018.0,736.64 1019.0,736.20 1020.0,735.76 1021.0,735.33 1022.0,734.90 1023.0,734.47 1024.0,734.06 1025.0,733.64 1026.0,733.23 1027.0,732.83 1028.0,732.43 1029.0,732.03 1030.0,731.64 1031.0,731.26 1032.0,730.88 1033.0,730.50 1034.0,730.14 1035.0,729.77 1036.0,729.42 1037.0,729.06 1038.0,728.72 1039.0,728.38 1040.0,728.04 1041.0,727.71 1042.0,727.39 1043.0,727.08 1044.0,726.77 1045.0,726.47 1046.0,726.17 1047.0,725.88 1048.0,725.60 1049.0,725.32 1050.0,725.06 1051.0,724.80 1052.0,724.55 1053.0,724.31 1054.0,724.07 1055.0,723.85 1056.0,723.63 1057.0,723.43 1058.0,723.23 1059.0,723.05 1060.0,722.88 1061.0,722.72 1062.0,722.58 1063.0,722.45 1064.0,722.34 1065.0,722.25 1066.0,722.20 1067.0,722.20 1068.0,722.20 1069.0,722.20 1070.0,722.20 1071.0,722.20 1072.0,722.20 1073.0,722.20 1074.0,722.20 1075.0,722.20 1076.0,722.20 1077.0,722.20 1078.0,722.20 1079.0,722.20 1080.0,722.20 1081.0,722.20 1082.0,722.20 1083.0,722.20 1084.0,722.20 1085.0,722.20 1086.0,722.20 1087.0,722.20 1088.0,722.20 1089.0,722.20 1090.0,722.20 1091.0,722.20 1092.0,722.20 1093.0,722.20 1094.0,722.20 1095.0,722.20 1096.0,722.20 1097.0,722.20 1098.0,722.20 1099.0,722.20 1100.0,722.20 1101.0,722.20 1102.0,722.20 1103.0,722.20 1104.0,722.20 1105.0,722.20 1106.0,722.20 1107.0,722.20 1108.0,722.20 1109.0,722.20 1110.0,722.20 1111.0,722.20 1112.0,722.20 1113.0,722.20 1114.0,722.20 1115.0,722.20 1116.0,722.20 1117.0,722.20 1118.0,722.28 1119.0,722.67 1120.0,723.07 1121.0,723.46 1122.0,724.40 1123.0,725.40 1124.0,726.40 1125.0,727.40 1126.0,728.61 1127.0,729.85 1128.0,731.09 1129.0,732.33 1130.0,733.37 1131.0,734.34 1132.0,735.30 1133.0,736.27 1134.0,737.23 1135.0,738.17 1136.0,739.05 1137.0,739.92 1138.0,740.79 1139.0,741.67 1140.0,742.54 1141.0,743.41 1142.0,744.06 1143.0,744.68 1144.0,745.31 1145.0,745.93 1146.0,746.55 1147.0,747.18 1148.0,747.80 1149.0,748.41 1150.0,748.97 1151.0,749.52 1152.0,750.08 1153.0,750.63 1154.0,751.19 1155.0,751.74 1156.0,752.16 1157.0,752.56 1158.0,752.96 1159.0,753.36 1160.0,753.76 1161.0,754.16 1162.0,753.48 1163.0,752.92 1164.0,752.35 1165.0,751.79 1166.0,751.23 1167.0,750.67 1168.0,750.12 1169.0,749.57 1170.0,749.03 1171.0,748.49 1172.0,747.95 1173.0,747.41 1174.0,746.88 1175.0,746.36 1176.0,745.83 1177.0,745.31 1178.0,744.80 1179.0,744.29 1180.0,743.78 1181.0,743.27 1182.0,742.77 1183.0,742.28 1184.0,741.79 1185.0,741.30 1186.0,740.81 1187.0,740.33 1188.0,739.86 1189.0,739.38 1190.0,738.92 1191.0,738.45 1192.0,737.99 1193.0,737.54 1194.0,737.09 1195.0,736.64 1196.0,736.20 1197.0,735.76 1198.0,735.33 1199.0,734.90 1200.0,734.47 1201.0,734.06 1202.0,733.64 1203.0,733.23 1204.0,732.83 1205.0,732.43 1206.0,732.03 1207.0,731.64 1208.0,731.26 1209.0,730.88 1210.0,730.50 1211.0,730.14 1212.0,729.77 1213.0,729.42 1214.0,729.06 1215.0,728.72 1216.0,728.38 1217.0,728.04 1218.0,727.71 1219.0,727.39 1220.0,727.08 1221.0,726.77 1222.0,726.47 1223.0,726.17 1224.0,725.88 1225.0,725.60 1226.0,725.32 1227.0,725.06 1228.0,724.80 1229.0,724.55 1230.0,724.31 1231.0,724.07 1232.0,723.85 1233.0,723.63 1234.0,723.43 1235.0,723.23 1236.0,723.05 1237.0,722.88 1238.0,722.72 1239.0,722.58 1240.0,722.45 1241.0,722.34 1242.0,722.25 1243.0,722.20 1244.0,722.20 1245.0,722.20 1246.0,722.20 1247.0,722.20 1248.0,722.20 1249.0,722.20 1250.0,722.20 1251.0,722.20 1252.0,722.20 1253.0,722.20 1254.0,722.20 1255.0,722.20 1256.0,722.20 1257.0,722.20 1258.0,722.20 1259.0,722.20 1260.0,722.20 1261.0,722.20 1262.0,722.20 1263.0,722.20 1264.0,722.20 1265.0,722.20 1266.0,722.20 1267.0,722.20 1268.0,722.20 1269.0,722.20 1270.0,722.20 1271.0,722.20 1272.0,722.20 1273.0,722.20 1274.0,722.20 1275.0,722.20 1276.0,722.20 1277.0,722.20 1278.0,722.20 1279.0,722.20 1280.0,722.20 1281.0,722.20 1282.0,722.20 1283.0,722.20 1284.0,722.20 1285.0,722.20 1286.0,722.20 1287.0,722.20 1288.0,722.20 1289.0,722.20 1290.0,722.20 1291.0,722.20 1292.0,722.20 1293.0,722.20 1294.0,722.20 1295.0,722.28 1296.0,722.67 1297.0,723.07 1298.0,723.46 1299.0,724.40 1300.0,725.40 1301.0,726.40 1302.0,727.40 1303.0,728.61 1304.0,729.85 1305.0,731.09 1306.0,732.33 1307.0,733.37 1308.0,734.34 1309.0,735.30 1310.0,736.27 1311.0,737.23 1312.0,738.17 1313.0,739.05 1314.0,739.92 1315.0,740.79 1316.0,741.67 1317.0,742.54 1318.0,743.41 1319.0,744.06 1320.0,744.68 1321.0,745.31 1322.0,745.93 1323.0,746.55 1324.0,747.18 1325.0,747.80 1326.0,748.41 1327.0,748.97 1328.0,749.52 1329.0,750.08 1330.0,750.63 1331.0,751.19 1332.0,751.74 1333.0,752.16 1334.0,752.56 1335.0,752.96 1336.0,753.36 1337.0,753.76 1338.0,754.16 1339.0,753.48 1340.0,752.92 1341.0,752.35 1342.0,751.79 1343.0,751.23 1344.0,750.67 1345.0,750.12 1346.0,749.57 1347.0,749.03 1348.0,748.49 1349.0,747.95 1350.0,747.41 1351.0,746.88 1352.0,746.36 1353.0,745.83 1354.0,745.31 1355.0,744.80 1356.0,744.29 1357.0,743.78 1358.0,743.27 1359.0,742.77 1360.0,742.28 1361.0,741.79 1362.0,741.30 1363.0,740.81 1364.0,740.33 1365.0,739.86 1366.0,739.38 1367.0,738.92 1368.0,738.45 1369.0,737.99 1370.0,737.54 1371.0,737.09 1372.0,736.64 1373.0,736.20 1374.0,735.76 1375.0,735.33 1376.0,734.90 1377.0,734.47 1378.0,734.06 1379.0,733.64 1380.0,733.23 1381.0,732.83 1382.0,732.43 1383.0,732.03 1384.0,731.64 1385.0,731.26 1386.0,730.88 1387.0,730.50 1388.0,730.14 1389.0,729.77 1390.0,729.42 1391.0,729.06 1392.0,728.72 1393.0,728.38 1394.0,728.04 1395.0,727.71 1396.0,727.39 1397.0,727.08 1398.0,726.77 1399.0,726.47 1400.0,726.17 1401.0,725.88 1402.0,725.60 1403.0,725.32 1404.0,725.06 1405.0,724.80 1406.0,724.55 1407.0,724.31 1408.0,724.07 1409.0,723.85 1410.0,723.63 1410.0,600.00" fill="none" stroke="#f00000" stroke-opacity="0.85" stroke-width="40" stroke-linejoin="round"/><polygon points="950.0,1110.00 950.0,983.72 951.0,982.44 952.0,981.17 953.0,979.97 954.0,978.98 955.0,977.99 956.0,976.99 957.0,976.00 958.0,975.00 959.0,974.09 960.0,973.19 961.0,972.29 962.0,971.39 963.0,970.48 964.0,969.58 965.0,968.81 966.0,968.17 967.0,967.53 968.0,966.88 969.0,966.24 970.0,965.60 971.0,964.96 972.0,964.31 973.0,963.73 974.0,963.15 975.0,962.58 976.0,962.01 977.0,961.43 978.0,960.86 979.0,960.37 980.0,959.96 981.0,959.54 982.0,959.13 983.0,958.72 984.0,958.31 985.0,958.48 986.0,958.90 987.0,959.32 988.0,959.74 989.0,960.16 990.0,960.58 991.0,960.99 992.0,961.41 993.0,961.82 994.0,962.23 995.0,962.64 996.0,963.05 997.0,963.45 998.0,963.86 999.0,964.26 1000.0,964.66 1001.0,965.06 1002.0,965.46 1003.0,965.86 1004.0,966.25 1005.0,966.64 1006.0,967.04 1007.0,967.43 1008.0,967.81 1009.0,968.20 1010.0,968.59 1011.0,968.97 1012.0,969.35 1013.0,969.73 1014.0,970.11 1015.0,970.49 1016.0,970.86 1017.0,971.23 1018.0,971.60 1019.0,971.97 1020.0,972.34 1021.0,972.71 1022.0,973.07 1023.0,973.43 1024.0,973.79 1025.0,974.15 1026.0,974.51 1027.0,974.86 1028.0,975.21 1029.0,975.56 1030.0,975.91 1031.0,976.26 1032.0,976.60 1033.0,976.94 1034.0,977.28 1035.0,977.62 1036.0,977.95 1037.0,978.29 1038.0,978.62 1039.0,978.95 1040.0,979.27 1041.0,979.60 1042.0,979.92 1043.0,980.24 1044.0,980.55 1045.0,980.87 1046.0,981.18 1047.0,981.49 1048.0,981.80 1049.0,982.10 1050.0,982.40 1051.0,982.70 1052.0,983.00 1053.0,983.29 1054.0,983.58 1055.0,983.87 1056.0,984.15 1057.0,984.44 1058.0,984.72 1059.0,984.99 1060.0,985.26 1061.0,985.53 1062.0,985.80 1063.0,986.06 1064.0,986.32 1065.0,986.57 1066.0,986.83 1067.0,987.07 1068.0,987.32 1069.0,987.56 1070.0,987.79 1071.0,988.03 1072.0,988.25 1073.0,988.48 1074.0,988.69 1075.0,988.91 1076.0,989.11 1077.0,989.31 1078.0,989.51 1079.0,989.70 1080.0,989.88 1081.0,990.06 1082.0,990.23 1083.0,990.39 1084.0,990.54 1085.0,990.69 1086.0,990.82 1087.0,990.93 1088.0,991.03 1089.0,991.10 1090.0,991.10 1091.0,991.10 1092.0,991.10 1093.0,991.10 1094.0,991.10 1095.0,991.10 1096.0,991.10 1097.0,991.10 1098.0,991.10 1099.0,991.10 1100.0,991.10 1101.0,991.10 1102.0,991.10 1103.0,991.10 1104.0,991.10 1105.0,991.10 1106.0,991.10 1107.0,991.10 1108.0,991.10 1109.0,991.10 1110.0,991.10 1111.0,991.10 1112.0,991.10 1113.0,991.10 1114.0,991.10 1115.0,991.10 1116.0,991.10 1117.0,991.10 1118.0,991.10 1119.0,990.77 1120.0,990.37 1121.0,989.96 1122.0,989.24 1123.0,988.21 1124.0,987.18 1125.0,986.15 1126.0,985.00 1127.0,983.72 1128.0,982.44 1129.0,981.17 1130.0,979.97 1131.0,978.98 1132.0,977.99 1133.0,976.99 1134.0,976.00 1135.0,975.00 1136.0,974.09 1137.0,973.19 1138.0,972.29 1139.0,971.39 1140.0,970.48 1141.0,969.58 1142.0,968.81 1143.0,968.17 1144.0,967.53 1145.0,966.88 1146.0,966.24 1147.0,965.60 1148.0,964.96 1149.0,964.31 1150.0,963.73 1151.0,963.15 1152.0,962.58 1153.0,962.01 1154.0,961.43 1155.0,960.86 1156.0,960.37 1157.0,959.96 1158.0,959.54 1159.0,959.13 1160.0,958.72 1161.0,958.31 1162.0,958.48 1163.0,958.90 1164.0,959.32 1165.0,959.74 1166.0,960.16 1167.0,960.58 1168.0,960.99 1169.0,961.41 1170.0,961.82 1171.0,962.23 1172.0,962.64 1173.0,963.05 1174.0,963.45 1175.0,963.86 1176.0,964.26 1177.0,964.66 1178.0,965.06 1179.0,965.46 1180.0,965.86 1181.0,966.25 1182.0,966.64 1183.0,967.04 1184.0,967.43 1185.0,967.81 1186.0,968.20 1187.0,968.59 1188.0,968.97 1189.0,969.35 1190.0,969.73 1191.0,970.11 1192.0,970.49 1193.0,970.86 1194.0,971.23 1195.0,971.60 1196.0,971.97 1197.0,972.34 1198.0,972.71 1199.0,973.07 1200.0,973.43 1201.0,973.79 1202.0,974.15 1203.0,974.51 1204.0,974.86 1205.0,975.21 1206.0,975.56 1207.0,975.91 1208.0,976.26 1209.0,976.60 1210.0,976.94 1211.0,977.28 1212.0,977.62 1213.0,977.95 1214.0,978.29 1215.0,978.62 1216.0,978.95 1217.0,979.27 1218.0,979.60 1219.0,979.92 1220.0,980.24 1221.0,980.55 1222.0,980.87 1223.0,981.18 1224.0,981.49 1225.0,981.80 1226.0,982.10 1227.0,982.40 1228.0,982.70 1229.0,983.00 1230.0,983.29 1231.0,983.58 1232.0,983.87 1233.0,984.15 1234.0,984.44 1235.0,984.72 1236.0,984.99 1237.0,985.26 1238.0,985.53 1239.0,985.80 1240.0,986.06 1241.0,986.32 1242.0,986.57 1243.0,986.83 1244.0,987.07 1245.0,987.32 1246.0,987.56 1247.0,987.79 1248.0,988.03 1249.0,988.25 1250.0,988.48 1251.0,988.69 1252.0,988.91 1253.0,989.11 1254.0,989.31 1255.0,989.51 1256.0,989.70 1257.0,989.88 1258.0,990.06 1259.0,990.23 1260.0,990.39 1261.0,990.54 1262.0,990.69 1263.0,990.82 1264.0,990.93 1265.0,991.03 1266.0,991.10 1267.0,991.10 1268.0,991.10 1269.0,991.10 1270.0,991.10 1271.0,991.10 1272.0,991.10 1273.0,991.10 1274.0,991.10 1275.0,991.10 1276.0,991.10 1277.0,991.10 1278.0,991.10 1279.0,991.10 1280.0,991.10 1281.0,991.10 1282.0,991.10 1283.0,991.10 1284.0,991.10 1285.0,991.10 1286.0,991.10 1287.0,991.10 1288.0,991.10 1289.0,991.10 1290.0,991.10 1291.0,991.10 1292.0,991.10 1293.0,991.10 1294.0,991.10 1295.0,991.10 1296.0,990.77 1297.0,990.37 1298.0,989.96 1299.0,989.24 1300.0,988.21 1301.0,987.18 1302.0,986.15 1303.0,985.00 1304.0,983.72 1305.0,982.44 1306.0,981.17 1307.0,979.97 1308.0,978.98 1309.0,977.99 1310.0,976.99 1311.0,976.00 1312.0,975.00 1313.0,974.09 1314.0,973.19 1315.0,972.29 1316.0,971.39 1317.0,970.48 1318.0,969.58 1319.0,968.81 1320.0,968.17 1321.0,967.53 1322.0,966.88 1323.0,966.24 1324.0,965.60 1325.0,964.96 1326.0,964.31 1327.0,963.73 1328.0,963.15 1329.0,962.58 1330.0,962.01 1331.0,961.43 1332.0,960.86 1333.0,960.37 1334.0,959.96 1335.0,959.54 1336.0,959.13 1337.0,958.72 1338.0,958.31 1339.0,958.48 1340.0,958.90 1341.0,959.32 1342.0,959.74 1343.0,960.16 1344.0,960.58 1345.0,960.99 1346.0,961.41 1347.0,961.82 1348.0,962.23 1349.0,962.64 1350.0,963.05 1351.0,963.45 1352.0,963.86 1353.0,964.26 1354.0,964.66 1355.0,965.06 1356.0,965.46 1357.0,965.86 1358.0,966.25 1359.0,966.64 1360.0,967.04 1361.0,967.43 1362.0,967.81 1363.0,968.20 1364.0,968.59 1365.0,968.97 1366.0,969.35 1367.0,969.73 1368.0,970.11 1369.0,970.49 1370.0,970.86 1371.0,971.23 1372.0,971.60 1373.0,971.97 1374.0,972.34 1375.0,972.71 1376.0,973.07 1377.0,973.43 1378.0,973.79 1379.0,974.15 1380.0,974.51 1381.0,974.86 1382.0,975.21 1383.0,975.56 1384.0,975.91 1385.0,976.26 1386.0,976.60 1387.0,976.94 1388.0,977.28 1389.0,977.62 1390.0,977.95 1391.0,978.29 1392.0,978.62 1393.0,978.95 1394.0,979.27 1395.0,979.60 1396.0,979.92 1397.0,980.24 1398.0,980.55 1399.0,980.87 1400.0,981.18 1401.0,981.49 1402.0,981.80 1403.0,982.10 1404.0,982.40 1405.0,982.70 1406.0,983.00 1407.0,983.29 1408.0,983.58 1409.0,983.87 1410.0,984.15 1410.0,1110.00" fill="none" stroke="#f00000" stroke-opacity="0.85" stroke-width="40" stroke-linejoin="round"/><ellipse cx="919" cy="794" rx="38" ry="11" fill="#ff0000" fill-opacity="0.8"/><ellipse cx="918" cy="917" rx="38" ry="11" fill="#ff0000" fill-opacity="0.8"/><ellipse cx="1096" cy="794" rx="38" ry="11" fill="#ff0000" fill-opacity="0.8"/><ellipse cx="1095" cy="917" rx="38" ry="11" fill="#ff0000" fill-opacity="0.8"/><ellipse cx="1273" cy="794" rx="38" ry="11" fill="#ff0000" fill-opacity="0.8"/><ellipse cx="1272" cy="917" rx="38" ry="11" fill="#ff0000" fill-opacity="0.8"/></g><g filter="url(#bl1)"><polygon points="950.0,600.00 950.0,741.14 951.0,743.25 952.0,745.37 953.0,747.29 954.0,748.34 955.0,749.30 956.0,750.27 957.0,751.23 958.0,752.17 959.0,753.05 960.0,753.92 961.0,754.79 962.0,755.67 963.0,756.54 964.0,757.41 965.0,758.06 966.0,758.68 967.0,759.31 968.0,759.93 969.0,760.55 970.0,761.18 971.0,761.80 972.0,762.41 973.0,762.97 974.0,763.52 975.0,764.08 976.0,764.63 977.0,765.19 978.0,765.10 979.0,764.80 980.0,764.49 981.0,764.17 982.0,763.86 983.0,763.55 984.0,763.23 985.0,762.52 986.0,762.00 987.0,761.48 988.0,760.96 989.0,760.44 990.0,759.93 991.0,759.42 992.0,758.92 993.0,758.41 994.0,757.92 995.0,757.42 996.0,756.93 997.0,756.44 998.0,755.96 999.0,755.48 1000.0,755.01 1001.0,754.53 1002.0,754.07 1003.0,753.60 1004.0,753.14 1005.0,752.68 1006.0,752.23 1007.0,751.78 1008.0,751.20 1009.0,750.60 1010.0,750.01 1011.0,749.43 1012.0,748.84 1013.0,748.27 1014.0,747.69 1015.0,747.12 1016.0,746.56 1017.0,746.00 1018.0,745.44 1019.0,744.89 1020.0,744.34 1021.0,743.80 1022.0,743.26 1023.0,742.72 1024.0,742.19 1025.0,741.67 1026.0,741.15 1027.0,740.63 1028.0,740.12 1029.0,739.62 1030.0,739.12 1031.0,738.63 1032.0,738.14 1033.0,737.65 1034.0,737.17 1035.0,736.70 1036.0,736.23 1037.0,735.77 1038.0,735.31 1039.0,734.86 1040.0,734.42 1041.0,733.98 1042.0,733.55 1043.0,733.12 1044.0,732.70 1045.0,732.29 1046.0,731.88 1047.0,731.48 1048.0,731.09 1049.0,730.71 1050.0,730.33 1051.0,729.96 1052.0,729.60 1053.0,729.25 1054.0,728.91 1055.0,728.57 1056.0,728.25 1057.0,727.93 1058.0,727.63 1059.0,727.33 1060.0,727.05 1061.0,726.78 1062.0,726.53 1063.0,726.29 1064.0,726.07 1065.0,725.88 1066.0,725.71 1067.0,725.70 1068.0,725.70 1069.0,725.70 1070.0,725.70 1071.0,725.70 1072.0,725.70 1073.0,725.70 1074.0,725.70 1075.0,725.70 1076.0,725.70 1077.0,725.70 1078.0,725.70 1079.0,725.70 1080.0,725.70 1081.0,725.70 1082.0,725.70 1083.0,725.70 1084.0,725.70 1085.0,725.70 1086.0,725.70 1087.0,725.70 1088.0,725.70 1089.0,725.70 1090.0,725.70 1091.0,725.70 1092.0,725.70 1093.0,725.70 1094.0,725.70 1095.0,725.70 1096.0,725.70 1097.0,725.70 1098.0,725.70 1099.0,725.70 1100.0,725.70 1101.0,725.70 1102.0,725.70 1103.0,725.70 1104.0,725.70 1105.0,725.70 1106.0,725.70 1107.0,725.70 1108.0,725.70 1109.0,725.70 1110.0,725.70 1111.0,725.70 1112.0,725.70 1113.0,725.70 1114.0,725.70 1115.0,725.70 1116.0,725.70 1117.0,725.70 1118.0,725.78 1119.0,726.96 1120.0,728.23 1121.0,729.50 1122.0,731.31 1123.0,733.19 1124.0,735.06 1125.0,736.94 1126.0,739.03 1127.0,741.14 1128.0,743.25 1129.0,745.37 1130.0,747.29 1131.0,748.34 1132.0,749.30 1133.0,750.27 1134.0,751.23 1135.0,752.17 1136.0,753.05 1137.0,753.92 1138.0,754.79 1139.0,755.67 1140.0,756.54 1141.0,757.41 1142.0,758.06 1143.0,758.68 1144.0,759.31 1145.0,759.93 1146.0,760.55 1147.0,761.18 1148.0,761.80 1149.0,762.41 1150.0,762.97 1151.0,763.52 1152.0,764.08 1153.0,764.63 1154.0,765.19 1155.0,765.10 1156.0,764.80 1157.0,764.49 1158.0,764.17 1159.0,763.86 1160.0,763.55 1161.0,763.23 1162.0,762.52 1163.0,762.00 1164.0,761.48 1165.0,760.96 1166.0,760.44 1167.0,759.93 1168.0,759.42 1169.0,758.92 1170.0,758.41 1171.0,757.92 1172.0,757.42 1173.0,756.93 1174.0,756.44 1175.0,755.96 1176.0,755.48 1177.0,755.01 1178.0,754.53 1179.0,754.07 1180.0,753.60 1181.0,753.14 1182.0,752.68 1183.0,752.23 1184.0,751.78 1185.0,751.20 1186.0,750.60 1187.0,750.01 1188.0,749.43 1189.0,748.84 1190.0,748.27 1191.0,747.69 1192.0,747.12 1193.0,746.56 1194.0,746.00 1195.0,745.44 1196.0,744.89 1197.0,744.34 1198.0,743.80 1199.0,743.26 1200.0,742.72 1201.0,742.19 1202.0,741.67 1203.0,741.15 1204.0,740.63 1205.0,740.12 1206.0,739.62 1207.0,739.12 1208.0,738.63 1209.0,738.14 1210.0,737.65 1211.0,737.17 1212.0,736.70 1213.0,736.23 1214.0,735.77 1215.0,735.31 1216.0,734.86 1217.0,734.42 1218.0,733.98 1219.0,733.55 1220.0,733.12 1221.0,732.70 1222.0,732.29 1223.0,731.88 1224.0,731.48 1225.0,731.09 1226.0,730.71 1227.0,730.33 1228.0,729.96 1229.0,729.60 1230.0,729.25 1231.0,728.91 1232.0,728.57 1233.0,728.25 1234.0,727.93 1235.0,727.63 1236.0,727.33 1237.0,727.05 1238.0,726.78 1239.0,726.53 1240.0,726.29 1241.0,726.07 1242.0,725.88 1243.0,725.71 1244.0,725.70 1245.0,725.70 1246.0,725.70 1247.0,725.70 1248.0,725.70 1249.0,725.70 1250.0,725.70 1251.0,725.70 1252.0,725.70 1253.0,725.70 1254.0,725.70 1255.0,725.70 1256.0,725.70 1257.0,725.70 1258.0,725.70 1259.0,725.70 1260.0,725.70 1261.0,725.70 1262.0,725.70 1263.0,725.70 1264.0,725.70 1265.0,725.70 1266.0,725.70 1267.0,725.70 1268.0,725.70 1269.0,725.70 1270.0,725.70 1271.0,725.70 1272.0,725.70 1273.0,725.70 1274.0,725.70 1275.0,725.70 1276.0,725.70 1277.0,725.70 1278.0,725.70 1279.0,725.70 1280.0,725.70 1281.0,725.70 1282.0,725.70 1283.0,725.70 1284.0,725.70 1285.0,725.70 1286.0,725.70 1287.0,725.70 1288.0,725.70 1289.0,725.70 1290.0,725.70 1291.0,725.70 1292.0,725.70 1293.0,725.70 1294.0,725.70 1295.0,725.78 1296.0,726.96 1297.0,728.23 1298.0,729.50 1299.0,731.31 1300.0,733.19 1301.0,735.06 1302.0,736.94 1303.0,739.03 1304.0,741.14 1305.0,743.25 1306.0,745.37 1307.0,747.29 1308.0,748.34 1309.0,749.30 1310.0,750.27 1311.0,751.23 1312.0,752.17 1313.0,753.05 1314.0,753.92 1315.0,754.79 1316.0,755.67 1317.0,756.54 1318.0,757.41 1319.0,758.06 1320.0,758.68 1321.0,759.31 1322.0,759.93 1323.0,760.55 1324.0,761.18 1325.0,761.80 1326.0,762.41 1327.0,762.97 1328.0,763.52 1329.0,764.08 1330.0,764.63 1331.0,765.19 1332.0,765.10 1333.0,764.80 1334.0,764.49 1335.0,764.17 1336.0,763.86 1337.0,763.55 1338.0,763.23 1339.0,762.52 1340.0,762.00 1341.0,761.48 1342.0,760.96 1343.0,760.44 1344.0,759.93 1345.0,759.42 1346.0,758.92 1347.0,758.41 1348.0,757.92 1349.0,757.42 1350.0,756.93 1351.0,756.44 1352.0,755.96 1353.0,755.48 1354.0,755.01 1355.0,754.53 1356.0,754.07 1357.0,753.60 1358.0,753.14 1359.0,752.68 1360.0,752.23 1361.0,751.78 1362.0,751.20 1363.0,750.60 1364.0,750.01 1365.0,749.43 1366.0,748.84 1367.0,748.27 1368.0,747.69 1369.0,747.12 1370.0,746.56 1371.0,746.00 1372.0,745.44 1373.0,744.89 1374.0,744.34 1375.0,743.80 1376.0,743.26 1377.0,742.72 1378.0,742.19 1379.0,741.67 1380.0,741.15 1381.0,740.63 1382.0,740.12 1383.0,739.62 1384.0,739.12 1385.0,738.63 1386.0,738.14 1387.0,737.65 1388.0,737.17 1389.0,736.70 1390.0,736.23 1391.0,735.77 1392.0,735.31 1393.0,734.86 1394.0,734.42 1395.0,733.98 1396.0,733.55 1397.0,733.12 1398.0,732.70 1399.0,732.29 1400.0,731.88 1401.0,731.48 1402.0,731.09 1403.0,730.71 1404.0,730.33 1405.0,729.96 1406.0,729.60 1407.0,729.25 1408.0,728.91 1409.0,728.57 1410.0,728.25 1410.0,600.00" fill="#ff0000"/><polygon points="950.0,1110.00 950.0,973.30 951.0,971.19 952.0,969.08 953.0,967.06 954.0,965.98 955.0,964.99 956.0,963.99 957.0,963.00 958.0,962.00 959.0,961.09 960.0,960.19 961.0,959.29 962.0,958.39 963.0,957.48 964.0,956.58 965.0,955.81 966.0,955.17 967.0,954.53 968.0,953.88 969.0,953.24 970.0,952.60 971.0,951.96 972.0,951.31 973.0,950.73 974.0,950.15 975.0,949.58 976.0,949.01 977.0,948.43 978.0,948.38 979.0,948.45 980.0,948.61 981.0,948.77 982.0,948.93 983.0,949.09 984.0,949.25 985.0,949.44 986.0,949.82 987.0,950.20 988.0,950.57 989.0,950.95 990.0,951.32 991.0,951.69 992.0,952.06 993.0,952.43 994.0,952.80 995.0,953.16 996.0,953.53 997.0,953.89 998.0,954.25 999.0,954.61 1000.0,954.97 1001.0,955.33 1002.0,955.68 1003.0,956.03 1004.0,956.39 1005.0,956.74 1006.0,957.08 1007.0,957.43 1008.0,957.92 1009.0,958.43 1010.0,958.93 1011.0,959.43 1012.0,959.93 1013.0,960.43 1014.0,960.93 1015.0,961.42 1016.0,961.92 1017.0,962.41 1018.0,962.90 1019.0,963.39 1020.0,963.87 1021.0,964.36 1022.0,964.84 1023.0,965.32 1024.0,965.80 1025.0,966.27 1026.0,966.75 1027.0,967.22 1028.0,967.69 1029.0,968.16 1030.0,968.63 1031.0,969.09 1032.0,969.55 1033.0,970.01 1034.0,970.47 1035.0,970.93 1036.0,971.38 1037.0,971.83 1038.0,972.28 1039.0,972.73 1040.0,973.18 1041.0,973.62 1042.0,974.06 1043.0,974.50 1044.0,974.93 1045.0,975.37 1046.0,975.80 1047.0,976.22 1048.0,976.65 1049.0,977.07 1050.0,977.49 1051.0,977.91 1052.0,978.33 1053.0,978.74 1054.0,979.15 1055.0,979.55 1056.0,979.96 1057.0,980.36 1058.0,980.75 1059.0,981.15 1060.0,981.54 1061.0,981.93 1062.0,982.31 1063.0,982.69 1064.0,983.07 1065.0,983.44 1066.0,983.81 1067.0,984.07 1068.0,984.32 1069.0,984.56 1070.0,984.79 1071.0,985.03 1072.0,985.25 1073.0,985.48 1074.0,985.69 1075.0,985.91 1076.0,986.11 1077.0,986.31 1078.0,986.51 1079.0,986.70 1080.0,986.88 1081.0,987.06 1082.0,987.23 1083.0,987.39 1084.0,987.54 1085.0,987.69 1086.0,987.82 1087.0,987.93 1088.0,988.03 1089.0,988.10 1090.0,988.10 1091.0,988.10 1092.0,988.10 1093.0,988.10 1094.0,988.10 1095.0,988.10 1096.0,988.10 1097.0,988.10 1098.0,988.10 1099.0,988.10 1100.0,988.10 1101.0,988.10 1102.0,988.10 1103.0,988.10 1104.0,988.10 1105.0,988.10 1106.0,988.10 1107.0,988.10 1108.0,988.10 1109.0,988.10 1110.0,988.10 1111.0,988.10 1112.0,988.10 1113.0,988.10 1114.0,988.10 1115.0,988.10 1116.0,988.10 1117.0,988.10 1118.0,988.10 1119.0,987.02 1120.0,985.79 1121.0,984.55 1122.0,982.99 1123.0,981.13 1124.0,979.26 1125.0,977.40 1126.0,975.41 1127.0,973.30 1128.0,971.19 1129.0,969.08 1130.0,967.06 1131.0,965.98 1132.0,964.99 1133.0,963.99 1134.0,963.00 1135.0,962.00 1136.0,961.09 1137.0,960.19 1138.0,959.29 1139.0,958.39 1140.0,957.48 1141.0,956.58 1142.0,955.81 1143.0,955.17 1144.0,954.53 1145.0,953.88 1146.0,953.24 1147.0,952.60 1148.0,951.96 1149.0,951.31 1150.0,950.73 1151.0,950.15 1152.0,949.58 1153.0,949.01 1154.0,948.43 1155.0,948.38 1156.0,948.45 1157.0,948.61 1158.0,948.77 1159.0,948.93 1160.0,949.09 1161.0,949.25 1162.0,949.44 1163.0,949.82 1164.0,950.20 1165.0,950.57 1166.0,950.95 1167.0,951.32 1168.0,951.69 1169.0,952.06 1170.0,952.43 1171.0,952.80 1172.0,953.16 1173.0,953.53 1174.0,953.89 1175.0,954.25 1176.0,954.61 1177.0,954.97 1178.0,955.33 1179.0,955.68 1180.0,956.03 1181.0,956.39 1182.0,956.74 1183.0,957.08 1184.0,957.43 1185.0,957.92 1186.0,958.43 1187.0,958.93 1188.0,959.43 1189.0,959.93 1190.0,960.43 1191.0,960.93 1192.0,961.42 1193.0,961.92 1194.0,962.41 1195.0,962.90 1196.0,963.39 1197.0,963.87 1198.0,964.36 1199.0,964.84 1200.0,965.32 1201.0,965.80 1202.0,966.27 1203.0,966.75 1204.0,967.22 1205.0,967.69 1206.0,968.16 1207.0,968.63 1208.0,969.09 1209.0,969.55 1210.0,970.01 1211.0,970.47 1212.0,970.93 1213.0,971.38 1214.0,971.83 1215.0,972.28 1216.0,972.73 1217.0,973.18 1218.0,973.62 1219.0,974.06 1220.0,974.50 1221.0,974.93 1222.0,975.37 1223.0,975.80 1224.0,976.22 1225.0,976.65 1226.0,977.07 1227.0,977.49 1228.0,977.91 1229.0,978.33 1230.0,978.74 1231.0,979.15 1232.0,979.55 1233.0,979.96 1234.0,980.36 1235.0,980.75 1236.0,981.15 1237.0,981.54 1238.0,981.93 1239.0,982.31 1240.0,982.69 1241.0,983.07 1242.0,983.44 1243.0,983.81 1244.0,984.07 1245.0,984.32 1246.0,984.56 1247.0,984.79 1248.0,985.03 1249.0,985.25 1250.0,985.48 1251.0,985.69 1252.0,985.91 1253.0,986.11 1254.0,986.31 1255.0,986.51 1256.0,986.70 1257.0,986.88 1258.0,987.06 1259.0,987.23 1260.0,987.39 1261.0,987.54 1262.0,987.69 1263.0,987.82 1264.0,987.93 1265.0,988.03 1266.0,988.10 1267.0,988.10 1268.0,988.10 1269.0,988.10 1270.0,988.10 1271.0,988.10 1272.0,988.10 1273.0,988.10 1274.0,988.10 1275.0,988.10 1276.0,988.10 1277.0,988.10 1278.0,988.10 1279.0,988.10 1280.0,988.10 1281.0,988.10 1282.0,988.10 1283.0,988.10 1284.0,988.10 1285.0,988.10 1286.0,988.10 1287.0,988.10 1288.0,988.10 1289.0,988.10 1290.0,988.10 1291.0,988.10 1292.0,988.10 1293.0,988.10 1294.0,988.10 1295.0,988.10 1296.0,987.02 1297.0,985.79 1298.0,984.55 1299.0,982.99 1300.0,981.13 1301.0,979.26 1302.0,977.40 1303.0,975.41 1304.0,973.30 1305.0,971.19 1306.0,969.08 1307.0,967.06 1308.0,965.98 1309.0,964.99 1310.0,963.99 1311.0,963.00 1312.0,962.00 1313.0,961.09 1314.0,960.19 1315.0,959.29 1316.0,958.39 1317.0,957.48 1318.0,956.58 1319.0,955.81 1320.0,955.17 1321.0,954.53 1322.0,953.88 1323.0,953.24 1324.0,952.60 1325.0,951.96 1326.0,951.31 1327.0,950.73 1328.0,950.15 1329.0,949.58 1330.0,949.01 1331.0,948.43 1332.0,948.38 1333.0,948.45 1334.0,948.61 1335.0,948.77 1336.0,948.93 1337.0,949.09 1338.0,949.25 1339.0,949.44 1340.0,949.82 1341.0,950.20 1342.0,950.57 1343.0,950.95 1344.0,951.32 1345.0,951.69 1346.0,952.06 1347.0,952.43 1348.0,952.80 1349.0,953.16 1350.0,953.53 1351.0,953.89 1352.0,954.25 1353.0,954.61 1354.0,954.97 1355.0,955.33 1356.0,955.68 1357.0,956.03 1358.0,956.39 1359.0,956.74 1360.0,957.08 1361.0,957.43 1362.0,957.92 1363.0,958.43 1364.0,958.93 1365.0,959.43 1366.0,959.93 1367.0,960.43 1368.0,960.93 1369.0,961.42 1370.0,961.92 1371.0,962.41 1372.0,962.90 1373.0,963.39 1374.0,963.87 1375.0,964.36 1376.0,964.84 1377.0,965.32 1378.0,965.80 1379.0,966.27 1380.0,966.75 1381.0,967.22 1382.0,967.69 1383.0,968.16 1384.0,968.63 1385.0,969.09 1386.0,969.55 1387.0,970.01 1388.0,970.47 1389.0,970.93 1390.0,971.38 1391.0,971.83 1392.0,972.28 1393.0,972.73 1394.0,973.18 1395.0,973.62 1396.0,974.06 1397.0,974.50 1398.0,974.93 1399.0,975.37 1400.0,975.80 1401.0,976.22 1402.0,976.65 1403.0,977.07 1404.0,977.49 1405.0,977.91 1406.0,978.33 1407.0,978.74 1408.0,979.15 1409.0,979.55 1410.0,979.96 1410.0,1110.00" fill="#ff0000"/><polygon points="962.8,857.15 993.1,820.85 1030.8,857.15 993.1,893.45" fill="none" stroke="#ff0000" stroke-width="21.00" stroke-linejoin="miter" stroke-miterlimit="10"/><polygon points="1139.8,857.15 1170.2,820.85 1207.8,857.15 1170.2,893.45" fill="none" stroke="#ff0000" stroke-width="21.00" stroke-linejoin="miter" stroke-miterlimit="10"/><polygon points="1316.8,857.15 1347.2,820.85 1384.8,857.15 1347.2,893.45" fill="none" stroke="#ff0000" stroke-width="21.00" stroke-linejoin="miter" stroke-miterlimit="10"/><polygon points="902.0,787.50 936.0,787.50 919.0,801.00" fill="none" stroke="#ff0000" stroke-width="17.85" stroke-linejoin="miter" stroke-miterlimit="10" clip-path="url(#cu)"/><polygon points="902.0,923.20 936.0,923.20 918.0,910.70" fill="none" stroke="#ff0000" stroke-width="17.85" stroke-linejoin="miter" stroke-miterlimit="10" clip-path="url(#cd)"/><polygon points="1079.0,787.50 1113.0,787.50 1096.0,801.00" fill="none" stroke="#ff0000" stroke-width="17.85" stroke-linejoin="miter" stroke-miterlimit="10" clip-path="url(#cu)"/><polygon points="1079.0,923.20 1113.0,923.20 1095.0,910.70" fill="none" stroke="#ff0000" stroke-width="17.85" stroke-linejoin="miter" stroke-miterlimit="10" clip-path="url(#cd)"/><polygon points="1256.0,787.50 1290.0,787.50 1273.0,801.00" fill="none" stroke="#ff0000" stroke-width="17.85" stroke-linejoin="miter" stroke-miterlimit="10" clip-path="url(#cu)"/><polygon points="1256.0,923.20 1290.0,923.20 1272.0,910.70" fill="none" stroke="#ff0000" stroke-width="17.85" stroke-linejoin="miter" stroke-miterlimit="10" clip-path="url(#cd)"/><polygon points="950.0,600.00 950.0,738.88 951.0,740.82 952.0,742.76 953.0,744.50 954.0,745.54 955.0,746.50 956.0,747.47 957.0,748.43 958.0,749.37 959.0,750.25 960.0,751.12 961.0,751.99 962.0,752.87 963.0,753.74 964.0,754.61 965.0,755.26 966.0,755.88 967.0,756.51 968.0,757.13 969.0,757.75 970.0,758.38 971.0,759.00 972.0,759.61 973.0,760.17 974.0,760.72 975.0,761.28 976.0,761.83 977.0,762.39 978.0,762.43 979.0,762.27 980.0,762.10 981.0,761.93 982.0,761.76 983.0,761.59 984.0,761.42 985.0,760.72 986.0,760.18 987.0,759.65 988.0,759.12 989.0,758.60 990.0,758.08 991.0,757.56 992.0,757.05 993.0,756.54 994.0,756.03 995.0,755.53 996.0,755.03 997.0,754.53 998.0,754.04 999.0,753.55 1000.0,753.07 1001.0,752.59 1002.0,752.11 1003.0,751.64 1004.0,751.17 1005.0,750.70 1006.0,750.24 1007.0,749.78 1008.0,749.22 1009.0,748.65 1010.0,748.08 1011.0,747.51 1012.0,746.95 1013.0,746.40 1014.0,745.84 1015.0,745.30 1016.0,744.75 1017.0,744.21 1018.0,743.68 1019.0,743.15 1020.0,742.62 1021.0,742.10 1022.0,741.59 1023.0,741.07 1024.0,740.57 1025.0,740.06 1026.0,739.57 1027.0,739.07 1028.0,738.59 1029.0,738.10 1030.0,737.62 1031.0,737.15 1032.0,736.68 1033.0,736.22 1034.0,735.77 1035.0,735.31 1036.0,734.87 1037.0,734.43 1038.0,733.99 1039.0,733.57 1040.0,733.14 1041.0,732.73 1042.0,732.32 1043.0,731.91 1044.0,731.52 1045.0,731.12 1046.0,730.74 1047.0,730.36 1048.0,729.99 1049.0,729.63 1050.0,729.28 1051.0,728.93 1052.0,728.59 1053.0,728.26 1054.0,727.94 1055.0,727.63 1056.0,727.32 1057.0,727.03 1058.0,726.75 1059.0,726.48 1060.0,726.22 1061.0,725.97 1062.0,725.74 1063.0,725.52 1064.0,725.33 1065.0,725.15 1066.0,725.01 1067.0,725.00 1068.0,725.00 1069.0,725.00 1070.0,725.00 1071.0,725.00 1072.0,725.00 1073.0,725.00 1074.0,725.00 1075.0,725.00 1076.0,725.00 1077.0,725.00 1078.0,725.00 1079.0,725.00 1080.0,725.00 1081.0,725.00 1082.0,725.00 1083.0,725.00 1084.0,725.00 1085.0,725.00 1086.0,725.00 1087.0,725.00 1088.0,725.00 1089.0,725.00 1090.0,725.00 1091.0,725.00 1092.0,725.00 1093.0,725.00 1094.0,725.00 1095.0,725.00 1096.0,725.00 1097.0,725.00 1098.0,725.00 1099.0,725.00 1100.0,725.00 1101.0,725.00 1102.0,725.00 1103.0,725.00 1104.0,725.00 1105.0,725.00 1106.0,725.00 1107.0,725.00 1108.0,725.00 1109.0,725.00 1110.0,725.00 1111.0,725.00 1112.0,725.00 1113.0,725.00 1114.0,725.00 1115.0,725.00 1116.0,725.00 1117.0,725.00 1118.0,725.08 1119.0,726.10 1120.0,727.20 1121.0,728.29 1122.0,729.93 1123.0,731.63 1124.0,733.33 1125.0,735.03 1126.0,736.94 1127.0,738.88 1128.0,740.82 1129.0,742.76 1130.0,744.50 1131.0,745.54 1132.0,746.50 1133.0,747.47 1134.0,748.43 1135.0,749.37 1136.0,750.25 1137.0,751.12 1138.0,751.99 1139.0,752.87 1140.0,753.74 1141.0,754.61 1142.0,755.26 1143.0,755.88 1144.0,756.51 1145.0,757.13 1146.0,757.75 1147.0,758.38 1148.0,759.00 1149.0,759.61 1150.0,760.17 1151.0,760.72 1152.0,761.28 1153.0,761.83 1154.0,762.39 1155.0,762.43 1156.0,762.27 1157.0,762.10 1158.0,761.93 1159.0,761.76 1160.0,761.59 1161.0,761.42 1162.0,760.72 1163.0,760.18 1164.0,759.65 1165.0,759.12 1166.0,758.60 1167.0,758.08 1168.0,757.56 1169.0,757.05 1170.0,756.54 1171.0,756.03 1172.0,755.53 1173.0,755.03 1174.0,754.53 1175.0,754.04 1176.0,753.55 1177.0,753.07 1178.0,752.59 1179.0,752.11 1180.0,751.64 1181.0,751.17 1182.0,750.70 1183.0,750.24 1184.0,749.78 1185.0,749.22 1186.0,748.65 1187.0,748.08 1188.0,747.51 1189.0,746.95 1190.0,746.40 1191.0,745.84 1192.0,745.30 1193.0,744.75 1194.0,744.21 1195.0,743.68 1196.0,743.15 1197.0,742.62 1198.0,742.10 1199.0,741.59 1200.0,741.07 1201.0,740.57 1202.0,740.06 1203.0,739.57 1204.0,739.07 1205.0,738.59 1206.0,738.10 1207.0,737.62 1208.0,737.15 1209.0,736.68 1210.0,736.22 1211.0,735.77 1212.0,735.31 1213.0,734.87 1214.0,734.43 1215.0,733.99 1216.0,733.57 1217.0,733.14 1218.0,732.73 1219.0,732.32 1220.0,731.91 1221.0,731.52 1222.0,731.12 1223.0,730.74 1224.0,730.36 1225.0,729.99 1226.0,729.63 1227.0,729.28 1228.0,728.93 1229.0,728.59 1230.0,728.26 1231.0,727.94 1232.0,727.63 1233.0,727.32 1234.0,727.03 1235.0,726.75 1236.0,726.48 1237.0,726.22 1238.0,725.97 1239.0,725.74 1240.0,725.52 1241.0,725.33 1242.0,725.15 1243.0,725.01 1244.0,725.00 1245.0,725.00 1246.0,725.00 1247.0,725.00 1248.0,725.00 1249.0,725.00 1250.0,725.00 1251.0,725.00 1252.0,725.00 1253.0,725.00 1254.0,725.00 1255.0,725.00 1256.0,725.00 1257.0,725.00 1258.0,725.00 1259.0,725.00 1260.0,725.00 1261.0,725.00 1262.0,725.00 1263.0,725.00 1264.0,725.00 1265.0,725.00 1266.0,725.00 1267.0,725.00 1268.0,725.00 1269.0,725.00 1270.0,725.00 1271.0,725.00 1272.0,725.00 1273.0,725.00 1274.0,725.00 1275.0,725.00 1276.0,725.00 1277.0,725.00 1278.0,725.00 1279.0,725.00 1280.0,725.00 1281.0,725.00 1282.0,725.00 1283.0,725.00 1284.0,725.00 1285.0,725.00 1286.0,725.00 1287.0,725.00 1288.0,725.00 1289.0,725.00 1290.0,725.00 1291.0,725.00 1292.0,725.00 1293.0,725.00 1294.0,725.00 1295.0,725.08 1296.0,726.10 1297.0,727.20 1298.0,728.29 1299.0,729.93 1300.0,731.63 1301.0,733.33 1302.0,735.03 1303.0,736.94 1304.0,738.88 1305.0,740.82 1306.0,742.76 1307.0,744.50 1308.0,745.54 1309.0,746.50 1310.0,747.47 1311.0,748.43 1312.0,749.37 1313.0,750.25 1314.0,751.12 1315.0,751.99 1316.0,752.87 1317.0,753.74 1318.0,754.61 1319.0,755.26 1320.0,755.88 1321.0,756.51 1322.0,757.13 1323.0,757.75 1324.0,758.38 1325.0,759.00 1326.0,759.61 1327.0,760.17 1328.0,760.72 1329.0,761.28 1330.0,761.83 1331.0,762.39 1332.0,762.43 1333.0,762.27 1334.0,762.10 1335.0,761.93 1336.0,761.76 1337.0,761.59 1338.0,761.42 1339.0,760.72 1340.0,760.18 1341.0,759.65 1342.0,759.12 1343.0,758.60 1344.0,758.08 1345.0,757.56 1346.0,757.05 1347.0,756.54 1348.0,756.03 1349.0,755.53 1350.0,755.03 1351.0,754.53 1352.0,754.04 1353.0,753.55 1354.0,753.07 1355.0,752.59 1356.0,752.11 1357.0,751.64 1358.0,751.17 1359.0,750.70 1360.0,750.24 1361.0,749.78 1362.0,749.22 1363.0,748.65 1364.0,748.08 1365.0,747.51 1366.0,746.95 1367.0,746.40 1368.0,745.84 1369.0,745.30 1370.0,744.75 1371.0,744.21 1372.0,743.68 1373.0,743.15 1374.0,742.62 1375.0,742.10 1376.0,741.59 1377.0,741.07 1378.0,740.57 1379.0,740.06 1380.0,739.57 1381.0,739.07 1382.0,738.59 1383.0,738.10 1384.0,737.62 1385.0,737.15 1386.0,736.68 1387.0,736.22 1388.0,735.77 1389.0,735.31 1390.0,734.87 1391.0,734.43 1392.0,733.99 1393.0,733.57 1394.0,733.14 1395.0,732.73 1396.0,732.32 1397.0,731.91 1398.0,731.52 1399.0,731.12 1400.0,730.74 1401.0,730.36 1402.0,729.99 1403.0,729.63 1404.0,729.28 1405.0,728.93 1406.0,728.59 1407.0,728.26 1408.0,727.94 1409.0,727.63 1410.0,727.32 1410.0,600.00" fill="#ff5a00"/><polygon points="950.0,1110.00 950.0,975.39 951.0,973.44 952.0,971.50 953.0,969.64 954.0,968.58 955.0,967.59 956.0,966.59 957.0,965.60 958.0,964.60 959.0,963.69 960.0,962.79 961.0,961.89 962.0,960.99 963.0,960.08 964.0,959.18 965.0,958.41 966.0,957.77 967.0,957.13 968.0,956.48 969.0,955.84 970.0,955.20 971.0,954.56 972.0,953.91 973.0,953.33 974.0,952.75 975.0,952.18 976.0,951.61 977.0,951.03 978.0,950.87 979.0,950.84 980.0,950.88 981.0,950.93 982.0,950.97 983.0,951.02 984.0,951.06 985.0,951.25 986.0,951.64 987.0,952.02 988.0,952.41 989.0,952.79 990.0,953.17 991.0,953.55 992.0,953.93 993.0,954.31 994.0,954.69 995.0,955.06 996.0,955.43 997.0,955.80 998.0,956.17 999.0,956.54 1000.0,956.91 1001.0,957.27 1002.0,957.64 1003.0,958.00 1004.0,958.36 1005.0,958.72 1006.0,959.07 1007.0,959.43 1008.0,959.90 1009.0,960.38 1010.0,960.86 1011.0,961.34 1012.0,961.82 1013.0,962.29 1014.0,962.76 1015.0,963.24 1016.0,963.71 1017.0,964.17 1018.0,964.64 1019.0,965.10 1020.0,965.57 1021.0,966.03 1022.0,966.48 1023.0,966.94 1024.0,967.40 1025.0,967.85 1026.0,968.30 1027.0,968.75 1028.0,969.20 1029.0,969.64 1030.0,970.08 1031.0,970.52 1032.0,970.96 1033.0,971.40 1034.0,971.83 1035.0,972.27 1036.0,972.70 1037.0,973.13 1038.0,973.55 1039.0,973.97 1040.0,974.40 1041.0,974.81 1042.0,975.23 1043.0,975.65 1044.0,976.06 1045.0,976.47 1046.0,976.87 1047.0,977.28 1048.0,977.68 1049.0,978.08 1050.0,978.48 1051.0,978.87 1052.0,979.26 1053.0,979.65 1054.0,980.03 1055.0,980.42 1056.0,980.80 1057.0,981.17 1058.0,981.55 1059.0,981.92 1060.0,982.28 1061.0,982.65 1062.0,983.01 1063.0,983.37 1064.0,983.72 1065.0,984.07 1066.0,984.42 1067.0,984.67 1068.0,984.92 1069.0,985.16 1070.0,985.39 1071.0,985.63 1072.0,985.85 1073.0,986.08 1074.0,986.29 1075.0,986.51 1076.0,986.71 1077.0,986.91 1078.0,987.11 1079.0,987.30 1080.0,987.48 1081.0,987.66 1082.0,987.83 1083.0,987.99 1084.0,988.14 1085.0,988.29 1086.0,988.42 1087.0,988.53 1088.0,988.63 1089.0,988.70 1090.0,988.70 1091.0,988.70 1092.0,988.70 1093.0,988.70 1094.0,988.70 1095.0,988.70 1096.0,988.70 1097.0,988.70 1098.0,988.70 1099.0,988.70 1100.0,988.70 1101.0,988.70 1102.0,988.70 1103.0,988.70 1104.0,988.70 1105.0,988.70 1106.0,988.70 1107.0,988.70 1108.0,988.70 1109.0,988.70 1110.0,988.70 1111.0,988.70 1112.0,988.70 1113.0,988.70 1114.0,988.70 1115.0,988.70 1116.0,988.70 1117.0,988.70 1118.0,988.70 1119.0,987.77 1120.0,986.70 1121.0,985.63 1122.0,984.24 1123.0,982.55 1124.0,980.85 1125.0,979.15 1126.0,977.33 1127.0,975.39 1128.0,973.44 1129.0,971.50 1130.0,969.64 1131.0,968.58 1132.0,967.59 1133.0,966.59 1134.0,965.60 1135.0,964.60 1136.0,963.69 1137.0,962.79 1138.0,961.89 1139.0,960.99 1140.0,960.08 1141.0,959.18 1142.0,958.41 1143.0,957.77 1144.0,957.13 1145.0,956.48 1146.0,955.84 1147.0,955.20 1148.0,954.56 1149.0,953.91 1150.0,953.33 1151.0,952.75 1152.0,952.18 1153.0,951.61 1154.0,951.03 1155.0,950.87 1156.0,950.84 1157.0,950.88 1158.0,950.93 1159.0,950.97 1160.0,951.02 1161.0,951.06 1162.0,951.25 1163.0,951.64 1164.0,952.02 1165.0,952.41 1166.0,952.79 1167.0,953.17 1168.0,953.55 1169.0,953.93 1170.0,954.31 1171.0,954.69 1172.0,955.06 1173.0,955.43 1174.0,955.80 1175.0,956.17 1176.0,956.54 1177.0,956.91 1178.0,957.27 1179.0,957.64 1180.0,958.00 1181.0,958.36 1182.0,958.72 1183.0,959.07 1184.0,959.43 1185.0,959.90 1186.0,960.38 1187.0,960.86 1188.0,961.34 1189.0,961.82 1190.0,962.29 1191.0,962.76 1192.0,963.24 1193.0,963.71 1194.0,964.17 1195.0,964.64 1196.0,965.10 1197.0,965.57 1198.0,966.03 1199.0,966.48 1200.0,966.94 1201.0,967.40 1202.0,967.85 1203.0,968.30 1204.0,968.75 1205.0,969.20 1206.0,969.64 1207.0,970.08 1208.0,970.52 1209.0,970.96 1210.0,971.40 1211.0,971.83 1212.0,972.27 1213.0,972.70 1214.0,973.13 1215.0,973.55 1216.0,973.97 1217.0,974.40 1218.0,974.81 1219.0,975.23 1220.0,975.65 1221.0,976.06 1222.0,976.47 1223.0,976.87 1224.0,977.28 1225.0,977.68 1226.0,978.08 1227.0,978.48 1228.0,978.87 1229.0,979.26 1230.0,979.65 1231.0,980.03 1232.0,980.42 1233.0,980.80 1234.0,981.17 1235.0,981.55 1236.0,981.92 1237.0,982.28 1238.0,982.65 1239.0,983.01 1240.0,983.37 1241.0,983.72 1242.0,984.07 1243.0,984.42 1244.0,984.67 1245.0,984.92 1246.0,985.16 1247.0,985.39 1248.0,985.63 1249.0,985.85 1250.0,986.08 1251.0,986.29 1252.0,986.51 1253.0,986.71 1254.0,986.91 1255.0,987.11 1256.0,987.30 1257.0,987.48 1258.0,987.66 1259.0,987.83 1260.0,987.99 1261.0,988.14 1262.0,988.29 1263.0,988.42 1264.0,988.53 1265.0,988.63 1266.0,988.70 1267.0,988.70 1268.0,988.70 1269.0,988.70 1270.0,988.70 1271.0,988.70 1272.0,988.70 1273.0,988.70 1274.0,988.70 1275.0,988.70 1276.0,988.70 1277.0,988.70 1278.0,988.70 1279.0,988.70 1280.0,988.70 1281.0,988.70 1282.0,988.70 1283.0,988.70 1284.0,988.70 1285.0,988.70 1286.0,988.70 1287.0,988.70 1288.0,988.70 1289.0,988.70 1290.0,988.70 1291.0,988.70 1292.0,988.70 1293.0,988.70 1294.0,988.70 1295.0,988.70 1296.0,987.77 1297.0,986.70 1298.0,985.63 1299.0,984.24 1300.0,982.55 1301.0,980.85 1302.0,979.15 1303.0,977.33 1304.0,975.39 1305.0,973.44 1306.0,971.50 1307.0,969.64 1308.0,968.58 1309.0,967.59 1310.0,966.59 1311.0,965.60 1312.0,964.60 1313.0,963.69 1314.0,962.79 1315.0,961.89 1316.0,960.99 1317.0,960.08 1318.0,959.18 1319.0,958.41 1320.0,957.77 1321.0,957.13 1322.0,956.48 1323.0,955.84 1324.0,955.20 1325.0,954.56 1326.0,953.91 1327.0,953.33 1328.0,952.75 1329.0,952.18 1330.0,951.61 1331.0,951.03 1332.0,950.87 1333.0,950.84 1334.0,950.88 1335.0,950.93 1336.0,950.97 1337.0,951.02 1338.0,951.06 1339.0,951.25 1340.0,951.64 1341.0,952.02 1342.0,952.41 1343.0,952.79 1344.0,953.17 1345.0,953.55 1346.0,953.93 1347.0,954.31 1348.0,954.69 1349.0,955.06 1350.0,955.43 1351.0,955.80 1352.0,956.17 1353.0,956.54 1354.0,956.91 1355.0,957.27 1356.0,957.64 1357.0,958.00 1358.0,958.36 1359.0,958.72 1360.0,959.07 1361.0,959.43 1362.0,959.90 1363.0,960.38 1364.0,960.86 1365.0,961.34 1366.0,961.82 1367.0,962.29 1368.0,962.76 1369.0,963.24 1370.0,963.71 1371.0,964.17 1372.0,964.64 1373.0,965.10 1374.0,965.57 1375.0,966.03 1376.0,966.48 1377.0,966.94 1378.0,967.40 1379.0,967.85 1380.0,968.30 1381.0,968.75 1382.0,969.20 1383.0,969.64 1384.0,970.08 1385.0,970.52 1386.0,970.96 1387.0,971.40 1388.0,971.83 1389.0,972.27 1390.0,972.70 1391.0,973.13 1392.0,973.55 1393.0,973.97 1394.0,974.40 1395.0,974.81 1396.0,975.23 1397.0,975.65 1398.0,976.06 1399.0,976.47 1400.0,976.87 1401.0,977.28 1402.0,977.68 1403.0,978.08 1404.0,978.48 1405.0,978.87 1406.0,979.26 1407.0,979.65 1408.0,980.03 1409.0,980.42 1410.0,980.80 1410.0,1110.00" fill="#ff5a00"/><polygon points="962.8,857.15 993.1,820.85 1030.8,857.15 993.1,893.45" fill="none" stroke="#ff5a00" stroke-width="16.80" stroke-linejoin="miter" stroke-miterlimit="10"/><polygon points="1139.8,857.15 1170.2,820.85 1207.8,857.15 1170.2,893.45" fill="none" stroke="#ff5a00" stroke-width="16.80" stroke-linejoin="miter" stroke-miterlimit="10"/><polygon points="1316.8,857.15 1347.2,820.85 1384.8,857.15 1347.2,893.45" fill="none" stroke="#ff5a00" stroke-width="16.80" stroke-linejoin="miter" stroke-miterlimit="10"/><polygon points="902.0,787.50 936.0,787.50 919.0,801.00" fill="none" stroke="#ff5a00" stroke-width="14.28" stroke-linejoin="miter" stroke-miterlimit="10" clip-path="url(#cu)"/><polygon points="902.0,923.20 936.0,923.20 918.0,910.70" fill="none" stroke="#ff5a00" stroke-width="14.28" stroke-linejoin="miter" stroke-miterlimit="10" clip-path="url(#cd)"/><polygon points="1079.0,787.50 1113.0,787.50 1096.0,801.00" fill="none" stroke="#ff5a00" stroke-width="14.28" stroke-linejoin="miter" stroke-miterlimit="10" clip-path="url(#cu)"/><polygon points="1079.0,923.20 1113.0,923.20 1095.0,910.70" fill="none" stroke="#ff5a00" stroke-width="14.28" stroke-linejoin="miter" stroke-miterlimit="10" clip-path="url(#cd)"/><polygon points="1256.0,787.50 1290.0,787.50 1273.0,801.00" fill="none" stroke="#ff5a00" stroke-width="14.28" stroke-linejoin="miter" stroke-miterlimit="10" clip-path="url(#cu)"/><polygon points="1256.0,923.20 1290.0,923.20 1272.0,910.70" fill="none" stroke="#ff5a00" stroke-width="14.28" stroke-linejoin="miter" stroke-miterlimit="10" clip-path="url(#cd)"/><polygon points="950.0,600.00 950.0,736.96 951.0,738.75 952.0,740.54 953.0,742.14 954.0,743.16 955.0,744.12 956.0,745.09 957.0,746.05 958.0,746.99 959.0,747.87 960.0,748.74 961.0,749.61 962.0,750.49 963.0,751.36 964.0,752.23 965.0,752.88 966.0,753.50 967.0,754.13 968.0,754.75 969.0,755.37 970.0,756.00 971.0,756.62 972.0,757.23 973.0,757.79 974.0,758.34 975.0,758.90 976.0,759.45 977.0,760.01 978.0,760.16 979.0,760.12 980.0,760.08 981.0,760.02 982.0,759.98 983.0,759.93 984.0,759.88 985.0,759.18 986.0,758.64 987.0,758.10 988.0,757.56 989.0,757.03 990.0,756.50 991.0,755.98 992.0,755.46 993.0,754.94 994.0,754.43 995.0,753.92 996.0,753.41 997.0,752.91 998.0,752.41 999.0,751.91 1000.0,751.42 1001.0,750.93 1002.0,750.45 1003.0,749.97 1004.0,749.49 1005.0,749.02 1006.0,748.55 1007.0,748.08 1008.0,747.53 1009.0,746.98 1010.0,746.43 1011.0,745.89 1012.0,745.34 1013.0,744.81 1014.0,744.27 1015.0,743.74 1016.0,743.22 1017.0,742.70 1018.0,742.18 1019.0,741.67 1020.0,741.16 1021.0,740.66 1022.0,740.16 1023.0,739.67 1024.0,739.18 1025.0,738.70 1026.0,738.22 1027.0,737.75 1028.0,737.28 1029.0,736.81 1030.0,736.35 1031.0,735.90 1032.0,735.45 1033.0,735.01 1034.0,734.57 1035.0,734.14 1036.0,733.71 1037.0,733.29 1038.0,732.87 1039.0,732.46 1040.0,732.06 1041.0,731.66 1042.0,731.27 1043.0,730.89 1044.0,730.51 1045.0,730.13 1046.0,729.77 1047.0,729.41 1048.0,729.06 1049.0,728.72 1050.0,728.38 1051.0,728.05 1052.0,727.73 1053.0,727.42 1054.0,727.12 1055.0,726.82 1056.0,726.54 1057.0,726.27 1058.0,726.00 1059.0,725.75 1060.0,725.51 1061.0,725.28 1062.0,725.07 1063.0,724.87 1064.0,724.69 1065.0,724.54 1066.0,724.41 1067.0,724.41 1068.0,724.41 1069.0,724.41 1070.0,724.41 1071.0,724.41 1072.0,724.41 1073.0,724.41 1074.0,724.41 1075.0,724.41 1076.0,724.41 1077.0,724.41 1078.0,724.41 1079.0,724.41 1080.0,724.41 1081.0,724.41 1082.0,724.41 1083.0,724.41 1084.0,724.41 1085.0,724.41 1086.0,724.41 1087.0,724.41 1088.0,724.41 1089.0,724.41 1090.0,724.41 1091.0,724.41 1092.0,724.41 1093.0,724.41 1094.0,724.41 1095.0,724.41 1096.0,724.41 1097.0,724.41 1098.0,724.41 1099.0,724.41 1100.0,724.41 1101.0,724.41 1102.0,724.41 1103.0,724.41 1104.0,724.41 1105.0,724.41 1106.0,724.41 1107.0,724.41 1108.0,724.41 1109.0,724.41 1110.0,724.41 1111.0,724.41 1112.0,724.41 1113.0,724.41 1114.0,724.41 1115.0,724.41 1116.0,724.41 1117.0,724.41 1118.0,724.48 1119.0,725.37 1120.0,726.32 1121.0,727.26 1122.0,728.75 1123.0,730.31 1124.0,731.86 1125.0,733.41 1126.0,735.17 1127.0,736.96 1128.0,738.75 1129.0,740.54 1130.0,742.14 1131.0,743.16 1132.0,744.12 1133.0,745.09 1134.0,746.05 1135.0,746.99 1136.0,747.87 1137.0,748.74 1138.0,749.61 1139.0,750.49 1140.0,751.36 1141.0,752.23 1142.0,752.88 1143.0,753.50 1144.0,754.13 1145.0,754.75 1146.0,755.37 1147.0,756.00 1148.0,756.62 1149.0,757.23 1150.0,757.79 1151.0,758.34 1152.0,758.90 1153.0,759.45 1154.0,760.01 1155.0,760.16 1156.0,760.12 1157.0,760.08 1158.0,760.02 1159.0,759.98 1160.0,759.93 1161.0,759.88 1162.0,759.18 1163.0,758.64 1164.0,758.10 1165.0,757.56 1166.0,757.03 1167.0,756.50 1168.0,755.98 1169.0,755.46 1170.0,754.94 1171.0,754.43 1172.0,753.92 1173.0,753.41 1174.0,752.91 1175.0,752.41 1176.0,751.91 1177.0,751.42 1178.0,750.93 1179.0,750.45 1180.0,749.97 1181.0,749.49 1182.0,749.02 1183.0,748.55 1184.0,748.08 1185.0,747.53 1186.0,746.98 1187.0,746.43 1188.0,745.89 1189.0,745.34 1190.0,744.81 1191.0,744.27 1192.0,743.74 1193.0,743.22 1194.0,742.70 1195.0,742.18 1196.0,741.67 1197.0,741.16 1198.0,740.66 1199.0,740.16 1200.0,739.67 1201.0,739.18 1202.0,738.70 1203.0,738.22 1204.0,737.75 1205.0,737.28 1206.0,736.81 1207.0,736.35 1208.0,735.90 1209.0,735.45 1210.0,735.01 1211.0,734.57 1212.0,734.14 1213.0,733.71 1214.0,733.29 1215.0,732.87 1216.0,732.46 1217.0,732.06 1218.0,731.66 1219.0,731.27 1220.0,730.89 1221.0,730.51 1222.0,730.13 1223.0,729.77 1224.0,729.41 1225.0,729.06 1226.0,728.72 1227.0,728.38 1228.0,728.05 1229.0,727.73 1230.0,727.42 1231.0,727.12 1232.0,726.82 1233.0,726.54 1234.0,726.27 1235.0,726.00 1236.0,725.75 1237.0,725.51 1238.0,725.28 1239.0,725.07 1240.0,724.87 1241.0,724.69 1242.0,724.54 1243.0,724.41 1244.0,724.41 1245.0,724.41 1246.0,724.41 1247.0,724.41 1248.0,724.41 1249.0,724.41 1250.0,724.41 1251.0,724.41 1252.0,724.41 1253.0,724.41 1254.0,724.41 1255.0,724.41 1256.0,724.41 1257.0,724.41 1258.0,724.41 1259.0,724.41 1260.0,724.41 1261.0,724.41 1262.0,724.41 1263.0,724.41 1264.0,724.41 1265.0,724.41 1266.0,724.41 1267.0,724.41 1268.0,724.41 1269.0,724.41 1270.0,724.41 1271.0,724.41 1272.0,724.41 1273.0,724.41 1274.0,724.41 1275.0,724.41 1276.0,724.41 1277.0,724.41 1278.0,724.41 1279.0,724.41 1280.0,724.41 1281.0,724.41 1282.0,724.41 1283.0,724.41 1284.0,724.41 1285.0,724.41 1286.0,724.41 1287.0,724.41 1288.0,724.41 1289.0,724.41 1290.0,724.41 1291.0,724.41 1292.0,724.41 1293.0,724.41 1294.0,724.41 1295.0,724.48 1296.0,725.37 1297.0,726.32 1298.0,727.26 1299.0,728.75 1300.0,730.31 1301.0,731.86 1302.0,733.41 1303.0,735.17 1304.0,736.96 1305.0,738.75 1306.0,740.54 1307.0,742.14 1308.0,743.16 1309.0,744.12 1310.0,745.09 1311.0,746.05 1312.0,746.99 1313.0,747.87 1314.0,748.74 1315.0,749.61 1316.0,750.49 1317.0,751.36 1318.0,752.23 1319.0,752.88 1320.0,753.50 1321.0,754.13 1322.0,754.75 1323.0,755.37 1324.0,756.00 1325.0,756.62 1326.0,757.23 1327.0,757.79 1328.0,758.34 1329.0,758.90 1330.0,759.45 1331.0,760.01 1332.0,760.16 1333.0,760.12 1334.0,760.08 1335.0,760.02 1336.0,759.98 1337.0,759.93 1338.0,759.88 1339.0,759.18 1340.0,758.64 1341.0,758.10 1342.0,757.56 1343.0,757.03 1344.0,756.50 1345.0,755.98 1346.0,755.46 1347.0,754.94 1348.0,754.43 1349.0,753.92 1350.0,753.41 1351.0,752.91 1352.0,752.41 1353.0,751.91 1354.0,751.42 1355.0,750.93 1356.0,750.45 1357.0,749.97 1358.0,749.49 1359.0,749.02 1360.0,748.55 1361.0,748.08 1362.0,747.53 1363.0,746.98 1364.0,746.43 1365.0,745.89 1366.0,745.34 1367.0,744.81 1368.0,744.27 1369.0,743.74 1370.0,743.22 1371.0,742.70 1372.0,742.18 1373.0,741.67 1374.0,741.16 1375.0,740.66 1376.0,740.16 1377.0,739.67 1378.0,739.18 1379.0,738.70 1380.0,738.22 1381.0,737.75 1382.0,737.28 1383.0,736.81 1384.0,736.35 1385.0,735.90 1386.0,735.45 1387.0,735.01 1388.0,734.57 1389.0,734.14 1390.0,733.71 1391.0,733.29 1392.0,732.87 1393.0,732.46 1394.0,732.06 1395.0,731.66 1396.0,731.27 1397.0,730.89 1398.0,730.51 1399.0,730.13 1400.0,729.77 1401.0,729.41 1402.0,729.06 1403.0,728.72 1404.0,728.38 1405.0,728.05 1406.0,727.73 1407.0,727.42 1408.0,727.12 1409.0,726.82 1410.0,726.54 1410.0,600.00" fill="#ffb400"/><polygon points="950.0,1110.00 950.0,977.16 951.0,975.35 952.0,973.55 953.0,971.84 954.0,970.79 955.0,969.80 956.0,968.80 957.0,967.81 958.0,966.81 959.0,965.90 960.0,965.00 961.0,964.10 962.0,963.20 963.0,962.29 964.0,961.39 965.0,960.62 966.0,959.98 967.0,959.34 968.0,958.69 969.0,958.05 970.0,957.41 971.0,956.77 972.0,956.12 973.0,955.54 974.0,954.96 975.0,954.39 976.0,953.82 977.0,953.24 978.0,953.00 979.0,952.86 980.0,952.81 981.0,952.76 982.0,952.71 983.0,952.65 984.0,952.60 985.0,952.79 986.0,953.18 987.0,953.58 988.0,953.97 989.0,954.36 990.0,954.75 991.0,955.13 992.0,955.52 993.0,955.91 994.0,956.29 995.0,956.67 996.0,957.05 997.0,957.43 998.0,957.81 999.0,958.18 1000.0,958.56 1001.0,958.93 1002.0,959.30 1003.0,959.67 1004.0,960.04 1005.0,960.40 1006.0,960.77 1007.0,961.13 1008.0,961.58 1009.0,962.04 1010.0,962.50 1011.0,962.96 1012.0,963.42 1013.0,963.87 1014.0,964.33 1015.0,964.78 1016.0,965.23 1017.0,965.67 1018.0,966.12 1019.0,966.56 1020.0,967.01 1021.0,967.45 1022.0,967.88 1023.0,968.32 1024.0,968.76 1025.0,969.19 1026.0,969.62 1027.0,970.05 1028.0,970.47 1029.0,970.90 1030.0,971.32 1031.0,971.74 1032.0,972.16 1033.0,972.58 1034.0,972.99 1035.0,973.40 1036.0,973.81 1037.0,974.22 1038.0,974.63 1039.0,975.03 1040.0,975.43 1041.0,975.83 1042.0,976.23 1043.0,976.62 1044.0,977.01 1045.0,977.40 1046.0,977.79 1047.0,978.17 1048.0,978.55 1049.0,978.93 1050.0,979.31 1051.0,979.68 1052.0,980.05 1053.0,980.42 1054.0,980.79 1055.0,981.15 1056.0,981.51 1057.0,981.87 1058.0,982.22 1059.0,982.57 1060.0,982.92 1061.0,983.26 1062.0,983.60 1063.0,983.94 1064.0,984.27 1065.0,984.60 1066.0,984.93 1067.0,985.18 1068.0,985.43 1069.0,985.67 1070.0,985.90 1071.0,986.14 1072.0,986.36 1073.0,986.59 1074.0,986.80 1075.0,987.02 1076.0,987.22 1077.0,987.42 1078.0,987.62 1079.0,987.81 1080.0,987.99 1081.0,988.17 1082.0,988.34 1083.0,988.50 1084.0,988.65 1085.0,988.80 1086.0,988.93 1087.0,989.04 1088.0,989.14 1089.0,989.21 1090.0,989.21 1091.0,989.21 1092.0,989.21 1093.0,989.21 1094.0,989.21 1095.0,989.21 1096.0,989.21 1097.0,989.21 1098.0,989.21 1099.0,989.21 1100.0,989.21 1101.0,989.21 1102.0,989.21 1103.0,989.21 1104.0,989.21 1105.0,989.21 1106.0,989.21 1107.0,989.21 1108.0,989.21 1109.0,989.21 1110.0,989.21 1111.0,989.21 1112.0,989.21 1113.0,989.21 1114.0,989.21 1115.0,989.21 1116.0,989.21 1117.0,989.21 1118.0,989.21 1119.0,988.41 1120.0,987.48 1121.0,986.55 1122.0,985.31 1123.0,983.75 1124.0,982.19 1125.0,980.64 1126.0,978.96 1127.0,977.16 1128.0,975.35 1129.0,973.55 1130.0,971.84 1131.0,970.79 1132.0,969.80 1133.0,968.80 1134.0,967.81 1135.0,966.81 1136.0,965.90 1137.0,965.00 1138.0,964.10 1139.0,963.20 1140.0,962.29 1141.0,961.39 1142.0,960.62 1143.0,959.98 1144.0,959.34 1145.0,958.69 1146.0,958.05 1147.0,957.41 1148.0,956.77 1149.0,956.12 1150.0,955.54 1151.0,954.96 1152.0,954.39 1153.0,953.82 1154.0,953.24 1155.0,953.00 1156.0,952.86 1157.0,952.81 1158.0,952.76 1159.0,952.71 1160.0,952.65 1161.0,952.60 1162.0,952.79 1163.0,953.18 1164.0,953.58 1165.0,953.97 1166.0,954.36 1167.0,954.75 1168.0,955.13 1169.0,955.52 1170.0,955.91 1171.0,956.29 1172.0,956.67 1173.0,957.05 1174.0,957.43 1175.0,957.81 1176.0,958.18 1177.0,958.56 1178.0,958.93 1179.0,959.30 1180.0,959.67 1181.0,960.04 1182.0,960.40 1183.0,960.77 1184.0,961.13 1185.0,961.58 1186.0,962.04 1187.0,962.50 1188.0,962.96 1189.0,963.42 1190.0,963.87 1191.0,964.33 1192.0,964.78 1193.0,965.23 1194.0,965.67 1195.0,966.12 1196.0,966.56 1197.0,967.01 1198.0,967.45 1199.0,967.88 1200.0,968.32 1201.0,968.76 1202.0,969.19 1203.0,969.62 1204.0,970.05 1205.0,970.47 1206.0,970.90 1207.0,971.32 1208.0,971.74 1209.0,972.16 1210.0,972.58 1211.0,972.99 1212.0,973.40 1213.0,973.81 1214.0,974.22 1215.0,974.63 1216.0,975.03 1217.0,975.43 1218.0,975.83 1219.0,976.23 1220.0,976.62 1221.0,977.01 1222.0,977.40 1223.0,977.79 1224.0,978.17 1225.0,978.55 1226.0,978.93 1227.0,979.31 1228.0,979.68 1229.0,980.05 1230.0,980.42 1231.0,980.79 1232.0,981.15 1233.0,981.51 1234.0,981.87 1235.0,982.22 1236.0,982.57 1237.0,982.92 1238.0,983.26 1239.0,983.60 1240.0,983.94 1241.0,984.27 1242.0,984.60 1243.0,984.93 1244.0,985.18 1245.0,985.43 1246.0,985.67 1247.0,985.90 1248.0,986.14 1249.0,986.36 1250.0,986.59 1251.0,986.80 1252.0,987.02 1253.0,987.22 1254.0,987.42 1255.0,987.62 1256.0,987.81 1257.0,987.99 1258.0,988.17 1259.0,988.34 1260.0,988.50 1261.0,988.65 1262.0,988.80 1263.0,988.93 1264.0,989.04 1265.0,989.14 1266.0,989.21 1267.0,989.21 1268.0,989.21 1269.0,989.21 1270.0,989.21 1271.0,989.21 1272.0,989.21 1273.0,989.21 1274.0,989.21 1275.0,989.21 1276.0,989.21 1277.0,989.21 1278.0,989.21 1279.0,989.21 1280.0,989.21 1281.0,989.21 1282.0,989.21 1283.0,989.21 1284.0,989.21 1285.0,989.21 1286.0,989.21 1287.0,989.21 1288.0,989.21 1289.0,989.21 1290.0,989.21 1291.0,989.21 1292.0,989.21 1293.0,989.21 1294.0,989.21 1295.0,989.21 1296.0,988.41 1297.0,987.48 1298.0,986.55 1299.0,985.31 1300.0,983.75 1301.0,982.19 1302.0,980.64 1303.0,978.96 1304.0,977.16 1305.0,975.35 1306.0,973.55 1307.0,971.84 1308.0,970.79 1309.0,969.80 1310.0,968.80 1311.0,967.81 1312.0,966.81 1313.0,965.90 1314.0,965.00 1315.0,964.10 1316.0,963.20 1317.0,962.29 1318.0,961.39 1319.0,960.62 1320.0,959.98 1321.0,959.34 1322.0,958.69 1323.0,958.05 1324.0,957.41 1325.0,956.77 1326.0,956.12 1327.0,955.54 1328.0,954.96 1329.0,954.39 1330.0,953.82 1331.0,953.24 1332.0,953.00 1333.0,952.86 1334.0,952.81 1335.0,952.76 1336.0,952.71 1337.0,952.65 1338.0,952.60 1339.0,952.79 1340.0,953.18 1341.0,953.58 1342.0,953.97 1343.0,954.36 1344.0,954.75 1345.0,955.13 1346.0,955.52 1347.0,955.91 1348.0,956.29 1349.0,956.67 1350.0,957.05 1351.0,957.43 1352.0,957.81 1353.0,958.18 1354.0,958.56 1355.0,958.93 1356.0,959.30 1357.0,959.67 1358.0,960.04 1359.0,960.40 1360.0,960.77 1361.0,961.13 1362.0,961.58 1363.0,962.04 1364.0,962.50 1365.0,962.96 1366.0,963.42 1367.0,963.87 1368.0,964.33 1369.0,964.78 1370.0,965.23 1371.0,965.67 1372.0,966.12 1373.0,966.56 1374.0,967.01 1375.0,967.45 1376.0,967.88 1377.0,968.32 1378.0,968.76 1379.0,969.19 1380.0,969.62 1381.0,970.05 1382.0,970.47 1383.0,970.90 1384.0,971.32 1385.0,971.74 1386.0,972.16 1387.0,972.58 1388.0,972.99 1389.0,973.40 1390.0,973.81 1391.0,974.22 1392.0,974.63 1393.0,975.03 1394.0,975.43 1395.0,975.83 1396.0,976.23 1397.0,976.62 1398.0,977.01 1399.0,977.40 1400.0,977.79 1401.0,978.17 1402.0,978.55 1403.0,978.93 1404.0,979.31 1405.0,979.68 1406.0,980.05 1407.0,980.42 1408.0,980.79 1409.0,981.15 1410.0,981.51 1410.0,1110.00" fill="#ffb400"/><polygon points="962.8,857.15 993.1,820.85 1030.8,857.15 993.1,893.45" fill="none" stroke="#ffb400" stroke-width="13.23" stroke-linejoin="miter" stroke-miterlimit="10"/><polygon points="1139.8,857.15 1170.2,820.85 1207.8,857.15 1170.2,893.45" fill="none" stroke="#ffb400" stroke-width="13.23" stroke-linejoin="miter" stroke-miterlimit="10"/><polygon points="1316.8,857.15 1347.2,820.85 1384.8,857.15 1347.2,893.45" fill="none" stroke="#ffb400" stroke-width="13.23" stroke-linejoin="miter" stroke-miterlimit="10"/><polygon points="902.0,787.50 936.0,787.50 919.0,801.00" fill="none" stroke="#ffb400" stroke-width="11.25" stroke-linejoin="miter" stroke-miterlimit="10" clip-path="url(#cu)"/><polygon points="902.0,923.20 936.0,923.20 918.0,910.70" fill="none" stroke="#ffb400" stroke-width="11.25" stroke-linejoin="miter" stroke-miterlimit="10" clip-path="url(#cd)"/><polygon points="1079.0,787.50 1113.0,787.50 1096.0,801.00" fill="none" stroke="#ffb400" stroke-width="11.25" stroke-linejoin="miter" stroke-miterlimit="10" clip-path="url(#cu)"/><polygon points="1079.0,923.20 1113.0,923.20 1095.0,910.70" fill="none" stroke="#ffb400" stroke-width="11.25" stroke-linejoin="miter" stroke-miterlimit="10" clip-path="url(#cd)"/><polygon points="1256.0,787.50 1290.0,787.50 1273.0,801.00" fill="none" stroke="#ffb400" stroke-width="11.25" stroke-linejoin="miter" stroke-miterlimit="10" clip-path="url(#cu)"/><polygon points="1256.0,923.20 1290.0,923.20 1272.0,910.70" fill="none" stroke="#ffb400" stroke-width="11.25" stroke-linejoin="miter" stroke-miterlimit="10" clip-path="url(#cd)"/><polygon points="950.0,600.00 950.0,735.50 951.0,737.17 952.0,738.85 953.0,740.33 954.0,741.34 955.0,742.30 956.0,743.27 957.0,744.23 958.0,745.17 959.0,746.05 960.0,746.92 961.0,747.79 962.0,748.67 963.0,749.54 964.0,750.41 965.0,751.06 966.0,751.68 967.0,752.31 968.0,752.93 969.0,753.55 970.0,754.18 971.0,754.80 972.0,755.41 973.0,755.97 974.0,756.52 975.0,757.08 976.0,757.63 977.0,758.19 978.0,758.42 979.0,758.48 980.0,758.52 981.0,758.57 982.0,758.61 983.0,758.65 984.0,758.70 985.0,758.00 986.0,757.46 987.0,756.91 988.0,756.37 989.0,755.83 990.0,755.30 991.0,754.77 992.0,754.24 993.0,753.72 994.0,753.20 995.0,752.69 996.0,752.17 997.0,751.66 998.0,751.16 999.0,750.66 1000.0,750.16 1001.0,749.67 1002.0,749.18 1003.0,748.69 1004.0,748.21 1005.0,747.73 1006.0,747.25 1007.0,746.78 1008.0,746.25 1009.0,745.71 1010.0,745.17 1011.0,744.64 1012.0,744.11 1013.0,743.59 1014.0,743.07 1015.0,742.56 1016.0,742.05 1017.0,741.54 1018.0,741.04 1019.0,740.54 1020.0,740.05 1021.0,739.56 1022.0,739.08 1023.0,738.60 1024.0,738.12 1025.0,737.66 1026.0,737.19 1027.0,736.73 1028.0,736.28 1029.0,735.83 1030.0,735.38 1031.0,734.94 1032.0,734.51 1033.0,734.08 1034.0,733.65 1035.0,733.24 1036.0,732.82 1037.0,732.42 1038.0,732.02 1039.0,731.62 1040.0,731.23 1041.0,730.85 1042.0,730.47 1043.0,730.10 1044.0,729.73 1045.0,729.38 1046.0,729.03 1047.0,728.68 1048.0,728.35 1049.0,728.02 1050.0,727.70 1051.0,727.38 1052.0,727.08 1053.0,726.78 1054.0,726.49 1055.0,726.21 1056.0,725.94 1057.0,725.68 1058.0,725.43 1059.0,725.19 1060.0,724.97 1061.0,724.75 1062.0,724.55 1063.0,724.37 1064.0,724.21 1065.0,724.06 1066.0,723.96 1067.0,723.95 1068.0,723.95 1069.0,723.95 1070.0,723.95 1071.0,723.95 1072.0,723.95 1073.0,723.95 1074.0,723.95 1075.0,723.95 1076.0,723.95 1077.0,723.95 1078.0,723.95 1079.0,723.95 1080.0,723.95 1081.0,723.95 1082.0,723.95 1083.0,723.95 1084.0,723.95 1085.0,723.95 1086.0,723.95 1087.0,723.95 1088.0,723.95 1089.0,723.95 1090.0,723.95 1091.0,723.95 1092.0,723.95 1093.0,723.95 1094.0,723.95 1095.0,723.95 1096.0,723.95 1097.0,723.95 1098.0,723.95 1099.0,723.95 1100.0,723.95 1101.0,723.95 1102.0,723.95 1103.0,723.95 1104.0,723.95 1105.0,723.95 1106.0,723.95 1107.0,723.95 1108.0,723.95 1109.0,723.95 1110.0,723.95 1111.0,723.95 1112.0,723.95 1113.0,723.95 1114.0,723.95 1115.0,723.95 1116.0,723.95 1117.0,723.95 1118.0,724.03 1119.0,724.82 1120.0,725.65 1121.0,726.48 1122.0,727.86 1123.0,729.29 1124.0,730.73 1125.0,732.17 1126.0,733.82 1127.0,735.50 1128.0,737.17 1129.0,738.85 1130.0,740.33 1131.0,741.34 1132.0,742.30 1133.0,743.27 1134.0,744.23 1135.0,745.17 1136.0,746.05 1137.0,746.92 1138.0,747.79 1139.0,748.67 1140.0,749.54 1141.0,750.41 1142.0,751.06 1143.0,751.68 1144.0,752.31 1145.0,752.93 1146.0,753.55 1147.0,754.18 1148.0,754.80 1149.0,755.41 1150.0,755.97 1151.0,756.52 1152.0,757.08 1153.0,757.63 1154.0,758.19 1155.0,758.42 1156.0,758.48 1157.0,758.52 1158.0,758.57 1159.0,758.61 1160.0,758.65 1161.0,758.70 1162.0,758.00 1163.0,757.46 1164.0,756.91 1165.0,756.37 1166.0,755.83 1167.0,755.30 1168.0,754.77 1169.0,754.24 1170.0,753.72 1171.0,753.20 1172.0,752.69 1173.0,752.17 1174.0,751.66 1175.0,751.16 1176.0,750.66 1177.0,750.16 1178.0,749.67 1179.0,749.18 1180.0,748.69 1181.0,748.21 1182.0,747.73 1183.0,747.25 1184.0,746.78 1185.0,746.25 1186.0,745.71 1187.0,745.17 1188.0,744.64 1189.0,744.11 1190.0,743.59 1191.0,743.07 1192.0,742.56 1193.0,742.05 1194.0,741.54 1195.0,741.04 1196.0,740.54 1197.0,740.05 1198.0,739.56 1199.0,739.08 1200.0,738.60 1201.0,738.12 1202.0,737.66 1203.0,737.19 1204.0,736.73 1205.0,736.28 1206.0,735.83 1207.0,735.38 1208.0,734.94 1209.0,734.51 1210.0,734.08 1211.0,733.65 1212.0,733.24 1213.0,732.82 1214.0,732.42 1215.0,732.02 1216.0,731.62 1217.0,731.23 1218.0,730.85 1219.0,730.47 1220.0,730.10 1221.0,729.73 1222.0,729.38 1223.0,729.03 1224.0,728.68 1225.0,728.35 1226.0,728.02 1227.0,727.70 1228.0,727.38 1229.0,727.08 1230.0,726.78 1231.0,726.49 1232.0,726.21 1233.0,725.94 1234.0,725.68 1235.0,725.43 1236.0,725.19 1237.0,724.97 1238.0,724.75 1239.0,724.55 1240.0,724.37 1241.0,724.21 1242.0,724.06 1243.0,723.96 1244.0,723.95 1245.0,723.95 1246.0,723.95 1247.0,723.95 1248.0,723.95 1249.0,723.95 1250.0,723.95 1251.0,723.95 1252.0,723.95 1253.0,723.95 1254.0,723.95 1255.0,723.95 1256.0,723.95 1257.0,723.95 1258.0,723.95 1259.0,723.95 1260.0,723.95 1261.0,723.95 1262.0,723.95 1263.0,723.95 1264.0,723.95 1265.0,723.95 1266.0,723.95 1267.0,723.95 1268.0,723.95 1269.0,723.95 1270.0,723.95 1271.0,723.95 1272.0,723.95 1273.0,723.95 1274.0,723.95 1275.0,723.95 1276.0,723.95 1277.0,723.95 1278.0,723.95 1279.0,723.95 1280.0,723.95 1281.0,723.95 1282.0,723.95 1283.0,723.95 1284.0,723.95 1285.0,723.95 1286.0,723.95 1287.0,723.95 1288.0,723.95 1289.0,723.95 1290.0,723.95 1291.0,723.95 1292.0,723.95 1293.0,723.95 1294.0,723.95 1295.0,724.03 1296.0,724.82 1297.0,725.65 1298.0,726.48 1299.0,727.86 1300.0,729.29 1301.0,730.73 1302.0,732.17 1303.0,733.82 1304.0,735.50 1305.0,737.17 1306.0,738.85 1307.0,740.33 1308.0,741.34 1309.0,742.30 1310.0,743.27 1311.0,744.23 1312.0,745.17 1313.0,746.05 1314.0,746.92 1315.0,747.79 1316.0,748.67 1317.0,749.54 1318.0,750.41 1319.0,751.06 1320.0,751.68 1321.0,752.31 1322.0,752.93 1323.0,753.55 1324.0,754.18 1325.0,754.80 1326.0,755.41 1327.0,755.97 1328.0,756.52 1329.0,757.08 1330.0,757.63 1331.0,758.19 1332.0,758.42 1333.0,758.48 1334.0,758.52 1335.0,758.57 1336.0,758.61 1337.0,758.65 1338.0,758.70 1339.0,758.00 1340.0,757.46 1341.0,756.91 1342.0,756.37 1343.0,755.83 1344.0,755.30 1345.0,754.77 1346.0,754.24 1347.0,753.72 1348.0,753.20 1349.0,752.69 1350.0,752.17 1351.0,751.66 1352.0,751.16 1353.0,750.66 1354.0,750.16 1355.0,749.67 1356.0,749.18 1357.0,748.69 1358.0,748.21 1359.0,747.73 1360.0,747.25 1361.0,746.78 1362.0,746.25 1363.0,745.71 1364.0,745.17 1365.0,744.64 1366.0,744.11 1367.0,743.59 1368.0,743.07 1369.0,742.56 1370.0,742.05 1371.0,741.54 1372.0,741.04 1373.0,740.54 1374.0,740.05 1375.0,739.56 1376.0,739.08 1377.0,738.60 1378.0,738.12 1379.0,737.66 1380.0,737.19 1381.0,736.73 1382.0,736.28 1383.0,735.83 1384.0,735.38 1385.0,734.94 1386.0,734.51 1387.0,734.08 1388.0,733.65 1389.0,733.24 1390.0,732.82 1391.0,732.42 1392.0,732.02 1393.0,731.62 1394.0,731.23 1395.0,730.85 1396.0,730.47 1397.0,730.10 1398.0,729.73 1399.0,729.38 1400.0,729.03 1401.0,728.68 1402.0,728.35 1403.0,728.02 1404.0,727.70 1405.0,727.38 1406.0,727.08 1407.0,726.78 1408.0,726.49 1409.0,726.21 1410.0,725.94 1410.0,600.00" fill="#ffff00"/><polygon points="950.0,1110.00 950.0,978.51 951.0,976.82 952.0,975.12 953.0,973.52 954.0,972.48 955.0,971.49 956.0,970.49 957.0,969.50 958.0,968.50 959.0,967.59 960.0,966.69 961.0,965.79 962.0,964.89 963.0,963.98 964.0,963.08 965.0,962.31 966.0,961.67 967.0,961.03 968.0,960.38 969.0,959.74 970.0,959.10 971.0,958.46 972.0,957.81 973.0,957.23 974.0,956.65 975.0,956.08 976.0,955.51 977.0,954.93 978.0,954.62 979.0,954.41 980.0,954.28 981.0,954.16 982.0,954.03 983.0,953.90 984.0,953.78 985.0,953.96 986.0,954.36 987.0,954.76 988.0,955.16 989.0,955.56 990.0,955.95 991.0,956.34 992.0,956.74 993.0,957.13 994.0,957.51 995.0,957.90 996.0,958.29 997.0,958.67 998.0,959.05 999.0,959.44 1000.0,959.82 1001.0,960.19 1002.0,960.57 1003.0,960.94 1004.0,961.32 1005.0,961.69 1006.0,962.06 1007.0,962.43 1008.0,962.87 1009.0,963.31 1010.0,963.76 1011.0,964.20 1012.0,964.64 1013.0,965.08 1014.0,965.52 1015.0,965.95 1016.0,966.39 1017.0,966.82 1018.0,967.25 1019.0,967.68 1020.0,968.11 1021.0,968.53 1022.0,968.95 1023.0,969.38 1024.0,969.79 1025.0,970.21 1026.0,970.63 1027.0,971.04 1028.0,971.45 1029.0,971.86 1030.0,972.27 1031.0,972.67 1032.0,973.08 1033.0,973.48 1034.0,973.88 1035.0,974.27 1036.0,974.67 1037.0,975.06 1038.0,975.45 1039.0,975.84 1040.0,976.22 1041.0,976.61 1042.0,976.99 1043.0,977.37 1044.0,977.74 1045.0,978.12 1046.0,978.49 1047.0,978.86 1048.0,979.22 1049.0,979.59 1050.0,979.95 1051.0,980.31 1052.0,980.66 1053.0,981.01 1054.0,981.36 1055.0,981.71 1056.0,982.06 1057.0,982.40 1058.0,982.73 1059.0,983.07 1060.0,983.40 1061.0,983.73 1062.0,984.06 1063.0,984.38 1064.0,984.69 1065.0,985.01 1066.0,985.32 1067.0,985.57 1068.0,985.82 1069.0,986.06 1070.0,986.29 1071.0,986.53 1072.0,986.75 1073.0,986.98 1074.0,987.19 1075.0,987.41 1076.0,987.61 1077.0,987.81 1078.0,988.01 1079.0,988.20 1080.0,988.38 1081.0,988.56 1082.0,988.73 1083.0,988.89 1084.0,989.04 1085.0,989.19 1086.0,989.32 1087.0,989.43 1088.0,989.53 1089.0,989.60 1090.0,989.60 1091.0,989.60 1092.0,989.60 1093.0,989.60 1094.0,989.60 1095.0,989.60 1096.0,989.60 1097.0,989.60 1098.0,989.60 1099.0,989.60 1100.0,989.60 1101.0,989.60 1102.0,989.60 1103.0,989.60 1104.0,989.60 1105.0,989.60 1106.0,989.60 1107.0,989.60 1108.0,989.60 1109.0,989.60 1110.0,989.60 1111.0,989.60 1112.0,989.60 1113.0,989.60 1114.0,989.60 1115.0,989.60 1116.0,989.60 1117.0,989.60 1118.0,989.60 1119.0,988.90 1120.0,988.08 1121.0,987.25 1122.0,986.12 1123.0,984.67 1124.0,983.22 1125.0,981.77 1126.0,980.20 1127.0,978.51 1128.0,976.82 1129.0,975.12 1130.0,973.52 1131.0,972.48 1132.0,971.49 1133.0,970.49 1134.0,969.50 1135.0,968.50 1136.0,967.59 1137.0,966.69 1138.0,965.79 1139.0,964.89 1140.0,963.98 1141.0,963.08 1142.0,962.31 1143.0,961.67 1144.0,961.03 1145.0,960.38 1146.0,959.74 1147.0,959.10 1148.0,958.46 1149.0,957.81 1150.0,957.23 1151.0,956.65 1152.0,956.08 1153.0,955.51 1154.0,954.93 1155.0,954.62 1156.0,954.41 1157.0,954.28 1158.0,954.16 1159.0,954.03 1160.0,953.90 1161.0,953.78 1162.0,953.96 1163.0,954.36 1164.0,954.76 1165.0,955.16 1166.0,955.56 1167.0,955.95 1168.0,956.34 1169.0,956.74 1170.0,957.13 1171.0,957.51 1172.0,957.90 1173.0,958.29 1174.0,958.67 1175.0,959.05 1176.0,959.44 1177.0,959.82 1178.0,960.19 1179.0,960.57 1180.0,960.94 1181.0,961.32 1182.0,961.69 1183.0,962.06 1184.0,962.43 1185.0,962.87 1186.0,963.31 1187.0,963.76 1188.0,964.20 1189.0,964.64 1190.0,965.08 1191.0,965.52 1192.0,965.95 1193.0,966.39 1194.0,966.82 1195.0,967.25 1196.0,967.68 1197.0,968.11 1198.0,968.53 1199.0,968.95 1200.0,969.38 1201.0,969.79 1202.0,970.21 1203.0,970.63 1204.0,971.04 1205.0,971.45 1206.0,971.86 1207.0,972.27 1208.0,972.67 1209.0,973.08 1210.0,973.48 1211.0,973.88 1212.0,974.27 1213.0,974.67 1214.0,975.06 1215.0,975.45 1216.0,975.84 1217.0,976.22 1218.0,976.61 1219.0,976.99 1220.0,977.37 1221.0,977.74 1222.0,978.12 1223.0,978.49 1224.0,978.86 1225.0,979.22 1226.0,979.59 1227.0,979.95 1228.0,980.31 1229.0,980.66 1230.0,981.01 1231.0,981.36 1232.0,981.71 1233.0,982.06 1234.0,982.40 1235.0,982.73 1236.0,983.07 1237.0,983.40 1238.0,983.73 1239.0,984.06 1240.0,984.38 1241.0,984.69 1242.0,985.01 1243.0,985.32 1244.0,985.57 1245.0,985.82 1246.0,986.06 1247.0,986.29 1248.0,986.53 1249.0,986.75 1250.0,986.98 1251.0,987.19 1252.0,987.41 1253.0,987.61 1254.0,987.81 1255.0,988.01 1256.0,988.20 1257.0,988.38 1258.0,988.56 1259.0,988.73 1260.0,988.89 1261.0,989.04 1262.0,989.19 1263.0,989.32 1264.0,989.43 1265.0,989.53 1266.0,989.60 1267.0,989.60 1268.0,989.60 1269.0,989.60 1270.0,989.60 1271.0,989.60 1272.0,989.60 1273.0,989.60 1274.0,989.60 1275.0,989.60 1276.0,989.60 1277.0,989.60 1278.0,989.60 1279.0,989.60 1280.0,989.60 1281.0,989.60 1282.0,989.60 1283.0,989.60 1284.0,989.60 1285.0,989.60 1286.0,989.60 1287.0,989.60 1288.0,989.60 1289.0,989.60 1290.0,989.60 1291.0,989.60 1292.0,989.60 1293.0,989.60 1294.0,989.60 1295.0,989.60 1296.0,988.90 1297.0,988.08 1298.0,987.25 1299.0,986.12 1300.0,984.67 1301.0,983.22 1302.0,981.77 1303.0,980.20 1304.0,978.51 1305.0,976.82 1306.0,975.12 1307.0,973.52 1308.0,972.48 1309.0,971.49 1310.0,970.49 1311.0,969.50 1312.0,968.50 1313.0,967.59 1314.0,966.69 1315.0,965.79 1316.0,964.89 1317.0,963.98 1318.0,963.08 1319.0,962.31 1320.0,961.67 1321.0,961.03 1322.0,960.38 1323.0,959.74 1324.0,959.10 1325.0,958.46 1326.0,957.81 1327.0,957.23 1328.0,956.65 1329.0,956.08 1330.0,955.51 1331.0,954.93 1332.0,954.62 1333.0,954.41 1334.0,954.28 1335.0,954.16 1336.0,954.03 1337.0,953.90 1338.0,953.78 1339.0,953.96 1340.0,954.36 1341.0,954.76 1342.0,955.16 1343.0,955.56 1344.0,955.95 1345.0,956.34 1346.0,956.74 1347.0,957.13 1348.0,957.51 1349.0,957.90 1350.0,958.29 1351.0,958.67 1352.0,959.05 1353.0,959.44 1354.0,959.82 1355.0,960.19 1356.0,960.57 1357.0,960.94 1358.0,961.32 1359.0,961.69 1360.0,962.06 1361.0,962.43 1362.0,962.87 1363.0,963.31 1364.0,963.76 1365.0,964.20 1366.0,964.64 1367.0,965.08 1368.0,965.52 1369.0,965.95 1370.0,966.39 1371.0,966.82 1372.0,967.25 1373.0,967.68 1374.0,968.11 1375.0,968.53 1376.0,968.95 1377.0,969.38 1378.0,969.79 1379.0,970.21 1380.0,970.63 1381.0,971.04 1382.0,971.45 1383.0,971.86 1384.0,972.27 1385.0,972.67 1386.0,973.08 1387.0,973.48 1388.0,973.88 1389.0,974.27 1390.0,974.67 1391.0,975.06 1392.0,975.45 1393.0,975.84 1394.0,976.22 1395.0,976.61 1396.0,976.99 1397.0,977.37 1398.0,977.74 1399.0,978.12 1400.0,978.49 1401.0,978.86 1402.0,979.22 1403.0,979.59 1404.0,979.95 1405.0,980.31 1406.0,980.66 1407.0,981.01 1408.0,981.36 1409.0,981.71 1410.0,982.06 1410.0,1110.00" fill="#ffff00"/><polygon points="962.8,857.15 993.1,820.85 1030.8,857.15 993.1,893.45" fill="none" stroke="#ffff00" stroke-width="10.50" stroke-linejoin="miter" stroke-miterlimit="10"/><polygon points="1139.8,857.15 1170.2,820.85 1207.8,857.15 1170.2,893.45" fill="none" stroke="#ffff00" stroke-width="10.50" stroke-linejoin="miter" stroke-miterlimit="10"/><polygon points="1316.8,857.15 1347.2,820.85 1384.8,857.15 1347.2,893.45" fill="none" stroke="#ffff00" stroke-width="10.50" stroke-linejoin="miter" stroke-miterlimit="10"/><polygon points="902.0,787.50 936.0,787.50 919.0,801.00" fill="none" stroke="#ffff00" stroke-width="8.92" stroke-linejoin="miter" stroke-miterlimit="10" clip-path="url(#cu)"/><polygon points="902.0,923.20 936.0,923.20 918.0,910.70" fill="none" stroke="#ffff00" stroke-width="8.92" stroke-linejoin="miter" stroke-miterlimit="10" clip-path="url(#cd)"/><polygon points="1079.0,787.50 1113.0,787.50 1096.0,801.00" fill="none" stroke="#ffff00" stroke-width="8.92" stroke-linejoin="miter" stroke-miterlimit="10" clip-path="url(#cu)"/><polygon points="1079.0,923.20 1113.0,923.20 1095.0,910.70" fill="none" stroke="#ffff00" stroke-width="8.92" stroke-linejoin="miter" stroke-miterlimit="10" clip-path="url(#cd)"/><polygon points="1256.0,787.50 1290.0,787.50 1273.0,801.00" fill="none" stroke="#ffff00" stroke-width="8.92" stroke-linejoin="miter" stroke-miterlimit="10" clip-path="url(#cu)"/><polygon points="1256.0,923.20 1290.0,923.20 1272.0,910.70" fill="none" stroke="#ffff00" stroke-width="8.92" stroke-linejoin="miter" stroke-miterlimit="10" clip-path="url(#cd)"/><polygon points="950.0,600.00 950.0,734.25 951.0,735.83 952.0,737.41 953.0,738.80 954.0,739.80 955.0,740.76 956.0,741.73 957.0,742.69 958.0,743.63 959.0,744.51 960.0,745.38 961.0,746.25 962.0,747.13 963.0,748.00 964.0,748.87 965.0,749.52 966.0,750.14 967.0,750.77 968.0,751.39 969.0,752.01 970.0,752.64 971.0,753.26 972.0,753.87 973.0,754.43 974.0,754.98 975.0,755.54 976.0,756.09 977.0,756.65 978.0,756.95 979.0,757.09 980.0,757.21 981.0,757.33 982.0,757.46 983.0,757.58 984.0,757.70 985.0,757.01 986.0,756.46 987.0,755.91 988.0,755.36 989.0,754.82 990.0,754.28 991.0,753.75 992.0,753.22 993.0,752.69 994.0,752.16 995.0,751.64 996.0,751.13 997.0,750.61 998.0,750.10 999.0,749.60 1000.0,749.09 1001.0,748.60 1002.0,748.10 1003.0,747.61 1004.0,747.12 1005.0,746.64 1006.0,746.16 1007.0,745.68 1008.0,745.16 1009.0,744.63 1010.0,744.11 1011.0,743.59 1012.0,743.07 1013.0,742.56 1014.0,742.06 1015.0,741.55 1016.0,741.05 1017.0,740.56 1018.0,740.07 1019.0,739.59 1020.0,739.11 1021.0,738.63 1022.0,738.16 1023.0,737.69 1024.0,737.23 1025.0,736.77 1026.0,736.32 1027.0,735.87 1028.0,735.43 1029.0,734.99 1030.0,734.56 1031.0,734.13 1032.0,733.71 1033.0,733.29 1034.0,732.88 1035.0,732.47 1036.0,732.07 1037.0,731.68 1038.0,731.29 1039.0,730.91 1040.0,730.53 1041.0,730.16 1042.0,729.79 1043.0,729.43 1044.0,729.08 1045.0,728.74 1046.0,728.40 1047.0,728.07 1048.0,727.74 1049.0,727.42 1050.0,727.11 1051.0,726.81 1052.0,726.52 1053.0,726.23 1054.0,725.96 1055.0,725.69 1056.0,725.43 1057.0,725.18 1058.0,724.95 1059.0,724.72 1060.0,724.51 1061.0,724.31 1062.0,724.12 1063.0,723.95 1064.0,723.80 1065.0,723.67 1066.0,723.57 1067.0,723.57 1068.0,723.57 1069.0,723.57 1070.0,723.57 1071.0,723.57 1072.0,723.57 1073.0,723.57 1074.0,723.57 1075.0,723.57 1076.0,723.57 1077.0,723.57 1078.0,723.57 1079.0,723.57 1080.0,723.57 1081.0,723.57 1082.0,723.57 1083.0,723.57 1084.0,723.57 1085.0,723.57 1086.0,723.57 1087.0,723.57 1088.0,723.57 1089.0,723.57 1090.0,723.57 1091.0,723.57 1092.0,723.57 1093.0,723.57 1094.0,723.57 1095.0,723.57 1096.0,723.57 1097.0,723.57 1098.0,723.57 1099.0,723.57 1100.0,723.57 1101.0,723.57 1102.0,723.57 1103.0,723.57 1104.0,723.57 1105.0,723.57 1106.0,723.57 1107.0,723.57 1108.0,723.57 1109.0,723.57 1110.0,723.57 1111.0,723.57 1112.0,723.57 1113.0,723.57 1114.0,723.57 1115.0,723.57 1116.0,723.57 1117.0,723.57 1118.0,723.64 1119.0,724.34 1120.0,725.08 1121.0,725.82 1122.0,727.10 1123.0,728.44 1124.0,729.78 1125.0,731.12 1126.0,732.68 1127.0,734.25 1128.0,735.83 1129.0,737.41 1130.0,738.80 1131.0,739.80 1132.0,740.76 1133.0,741.73 1134.0,742.69 1135.0,743.63 1136.0,744.51 1137.0,745.38 1138.0,746.25 1139.0,747.13 1140.0,748.00 1141.0,748.87 1142.0,749.52 1143.0,750.14 1144.0,750.77 1145.0,751.39 1146.0,752.01 1147.0,752.64 1148.0,753.26 1149.0,753.87 1150.0,754.43 1151.0,754.98 1152.0,755.54 1153.0,756.09 1154.0,756.65 1155.0,756.95 1156.0,757.09 1157.0,757.21 1158.0,757.33 1159.0,757.46 1160.0,757.58 1161.0,757.70 1162.0,757.01 1163.0,756.46 1164.0,755.91 1165.0,755.36 1166.0,754.82 1167.0,754.28 1168.0,753.75 1169.0,753.22 1170.0,752.69 1171.0,752.16 1172.0,751.64 1173.0,751.13 1174.0,750.61 1175.0,750.10 1176.0,749.60 1177.0,749.09 1178.0,748.60 1179.0,748.10 1180.0,747.61 1181.0,747.12 1182.0,746.64 1183.0,746.16 1184.0,745.68 1185.0,745.16 1186.0,744.63 1187.0,744.11 1188.0,743.59 1189.0,743.07 1190.0,742.56 1191.0,742.06 1192.0,741.55 1193.0,741.05 1194.0,740.56 1195.0,740.07 1196.0,739.59 1197.0,739.11 1198.0,738.63 1199.0,738.16 1200.0,737.69 1201.0,737.23 1202.0,736.77 1203.0,736.32 1204.0,735.87 1205.0,735.43 1206.0,734.99 1207.0,734.56 1208.0,734.13 1209.0,733.71 1210.0,733.29 1211.0,732.88 1212.0,732.47 1213.0,732.07 1214.0,731.68 1215.0,731.29 1216.0,730.91 1217.0,730.53 1218.0,730.16 1219.0,729.79 1220.0,729.43 1221.0,729.08 1222.0,728.74 1223.0,728.40 1224.0,728.07 1225.0,727.74 1226.0,727.42 1227.0,727.11 1228.0,726.81 1229.0,726.52 1230.0,726.23 1231.0,725.96 1232.0,725.69 1233.0,725.43 1234.0,725.18 1235.0,724.95 1236.0,724.72 1237.0,724.51 1238.0,724.31 1239.0,724.12 1240.0,723.95 1241.0,723.80 1242.0,723.67 1243.0,723.57 1244.0,723.57 1245.0,723.57 1246.0,723.57 1247.0,723.57 1248.0,723.57 1249.0,723.57 1250.0,723.57 1251.0,723.57 1252.0,723.57 1253.0,723.57 1254.0,723.57 1255.0,723.57 1256.0,723.57 1257.0,723.57 1258.0,723.57 1259.0,723.57 1260.0,723.57 1261.0,723.57 1262.0,723.57 1263.0,723.57 1264.0,723.57 1265.0,723.57 1266.0,723.57 1267.0,723.57 1268.0,723.57 1269.0,723.57 1270.0,723.57 1271.0,723.57 1272.0,723.57 1273.0,723.57 1274.0,723.57 1275.0,723.57 1276.0,723.57 1277.0,723.57 1278.0,723.57 1279.0,723.57 1280.0,723.57 1281.0,723.57 1282.0,723.57 1283.0,723.57 1284.0,723.57 1285.0,723.57 1286.0,723.57 1287.0,723.57 1288.0,723.57 1289.0,723.57 1290.0,723.57 1291.0,723.57 1292.0,723.57 1293.0,723.57 1294.0,723.57 1295.0,723.64 1296.0,724.34 1297.0,725.08 1298.0,725.82 1299.0,727.10 1300.0,728.44 1301.0,729.78 1302.0,731.12 1303.0,732.68 1304.0,734.25 1305.0,735.83 1306.0,737.41 1307.0,738.80 1308.0,739.80 1309.0,740.76 1310.0,741.73 1311.0,742.69 1312.0,743.63 1313.0,744.51 1314.0,745.38 1315.0,746.25 1316.0,747.13 1317.0,748.00 1318.0,748.87 1319.0,749.52 1320.0,750.14 1321.0,750.77 1322.0,751.39 1323.0,752.01 1324.0,752.64 1325.0,753.26 1326.0,753.87 1327.0,754.43 1328.0,754.98 1329.0,755.54 1330.0,756.09 1331.0,756.65 1332.0,756.95 1333.0,757.09 1334.0,757.21 1335.0,757.33 1336.0,757.46 1337.0,757.58 1338.0,757.70 1339.0,757.01 1340.0,756.46 1341.0,755.91 1342.0,755.36 1343.0,754.82 1344.0,754.28 1345.0,753.75 1346.0,753.22 1347.0,752.69 1348.0,752.16 1349.0,751.64 1350.0,751.13 1351.0,750.61 1352.0,750.10 1353.0,749.60 1354.0,749.09 1355.0,748.60 1356.0,748.10 1357.0,747.61 1358.0,747.12 1359.0,746.64 1360.0,746.16 1361.0,745.68 1362.0,745.16 1363.0,744.63 1364.0,744.11 1365.0,743.59 1366.0,743.07 1367.0,742.56 1368.0,742.06 1369.0,741.55 1370.0,741.05 1371.0,740.56 1372.0,740.07 1373.0,739.59 1374.0,739.11 1375.0,738.63 1376.0,738.16 1377.0,737.69 1378.0,737.23 1379.0,736.77 1380.0,736.32 1381.0,735.87 1382.0,735.43 1383.0,734.99 1384.0,734.56 1385.0,734.13 1386.0,733.71 1387.0,733.29 1388.0,732.88 1389.0,732.47 1390.0,732.07 1391.0,731.68 1392.0,731.29 1393.0,730.91 1394.0,730.53 1395.0,730.16 1396.0,729.79 1397.0,729.43 1398.0,729.08 1399.0,728.74 1400.0,728.40 1401.0,728.07 1402.0,727.74 1403.0,727.42 1404.0,727.11 1405.0,726.81 1406.0,726.52 1407.0,726.23 1408.0,725.96 1409.0,725.69 1410.0,725.43 1410.0,600.00" fill="#90ff70"/><polygon points="950.0,1110.00 950.0,979.66 951.0,978.05 952.0,976.45 953.0,974.94 954.0,973.91 955.0,972.92 956.0,971.92 957.0,970.93 958.0,969.93 959.0,969.02 960.0,968.12 961.0,967.22 962.0,966.32 963.0,965.41 964.0,964.51 965.0,963.74 966.0,963.10 967.0,962.46 968.0,961.81 969.0,961.17 970.0,960.53 971.0,959.89 972.0,959.24 973.0,958.66 974.0,958.08 975.0,957.51 976.0,956.94 977.0,956.36 978.0,955.99 979.0,955.72 980.0,955.53 981.0,955.34 982.0,955.15 983.0,954.96 984.0,954.77 985.0,954.96 986.0,955.36 987.0,955.77 988.0,956.17 989.0,956.57 990.0,956.97 991.0,957.37 992.0,957.76 993.0,958.16 994.0,958.55 995.0,958.94 996.0,959.33 997.0,959.72 998.0,960.11 999.0,960.50 1000.0,960.88 1001.0,961.26 1002.0,961.65 1003.0,962.03 1004.0,962.40 1005.0,962.78 1006.0,963.15 1007.0,963.53 1008.0,963.96 1009.0,964.39 1010.0,964.82 1011.0,965.25 1012.0,965.68 1013.0,966.10 1014.0,966.53 1015.0,966.95 1016.0,967.37 1017.0,967.79 1018.0,968.21 1019.0,968.62 1020.0,969.04 1021.0,969.45 1022.0,969.86 1023.0,970.27 1024.0,970.67 1025.0,971.08 1026.0,971.48 1027.0,971.88 1028.0,972.28 1029.0,972.68 1030.0,973.07 1031.0,973.46 1032.0,973.85 1033.0,974.24 1034.0,974.63 1035.0,975.01 1036.0,975.39 1037.0,975.77 1038.0,976.15 1039.0,976.52 1040.0,976.90 1041.0,977.27 1042.0,977.63 1043.0,978.00 1044.0,978.36 1045.0,978.72 1046.0,979.08 1047.0,979.44 1048.0,979.79 1049.0,980.14 1050.0,980.49 1051.0,980.83 1052.0,981.18 1053.0,981.52 1054.0,981.85 1055.0,982.19 1056.0,982.52 1057.0,982.85 1058.0,983.17 1059.0,983.49 1060.0,983.81 1061.0,984.13 1062.0,984.44 1063.0,984.75 1064.0,985.05 1065.0,985.35 1066.0,985.65 1067.0,985.90 1068.0,986.15 1069.0,986.39 1070.0,986.62 1071.0,986.86 1072.0,987.08 1073.0,987.31 1074.0,987.52 1075.0,987.74 1076.0,987.94 1077.0,988.14 1078.0,988.34 1079.0,988.53 1080.0,988.71 1081.0,988.89 1082.0,989.06 1083.0,989.22 1084.0,989.37 1085.0,989.52 1086.0,989.65 1087.0,989.76 1088.0,989.86 1089.0,989.93 1090.0,989.93 1091.0,989.93 1092.0,989.93 1093.0,989.93 1094.0,989.93 1095.0,989.93 1096.0,989.93 1097.0,989.93 1098.0,989.93 1099.0,989.93 1100.0,989.93 1101.0,989.93 1102.0,989.93 1103.0,989.93 1104.0,989.93 1105.0,989.93 1106.0,989.93 1107.0,989.93 1108.0,989.93 1109.0,989.93 1110.0,989.93 1111.0,989.93 1112.0,989.93 1113.0,989.93 1114.0,989.93 1115.0,989.93 1116.0,989.93 1117.0,989.93 1118.0,989.93 1119.0,989.31 1120.0,988.58 1121.0,987.85 1122.0,986.81 1123.0,985.45 1124.0,984.09 1125.0,982.74 1126.0,981.26 1127.0,979.66 1128.0,978.05 1129.0,976.45 1130.0,974.94 1131.0,973.91 1132.0,972.92 1133.0,971.92 1134.0,970.93 1135.0,969.93 1136.0,969.02 1137.0,968.12 1138.0,967.22 1139.0,966.32 1140.0,965.41 1141.0,964.51 1142.0,963.74 1143.0,963.10 1144.0,962.46 1145.0,961.81 1146.0,961.17 1147.0,960.53 1148.0,959.89 1149.0,959.24 1150.0,958.66 1151.0,958.08 1152.0,957.51 1153.0,956.94 1154.0,956.36 1155.0,955.99 1156.0,955.72 1157.0,955.53 1158.0,955.34 1159.0,955.15 1160.0,954.96 1161.0,954.77 1162.0,954.96 1163.0,955.36 1164.0,955.77 1165.0,956.17 1166.0,956.57 1167.0,956.97 1168.0,957.37 1169.0,957.76 1170.0,958.16 1171.0,958.55 1172.0,958.94 1173.0,959.33 1174.0,959.72 1175.0,960.11 1176.0,960.50 1177.0,960.88 1178.0,961.26 1179.0,961.65 1180.0,962.03 1181.0,962.40 1182.0,962.78 1183.0,963.15 1184.0,963.53 1185.0,963.96 1186.0,964.39 1187.0,964.82 1188.0,965.25 1189.0,965.68 1190.0,966.10 1191.0,966.53 1192.0,966.95 1193.0,967.37 1194.0,967.79 1195.0,968.21 1196.0,968.62 1197.0,969.04 1198.0,969.45 1199.0,969.86 1200.0,970.27 1201.0,970.67 1202.0,971.08 1203.0,971.48 1204.0,971.88 1205.0,972.28 1206.0,972.68 1207.0,973.07 1208.0,973.46 1209.0,973.85 1210.0,974.24 1211.0,974.63 1212.0,975.01 1213.0,975.39 1214.0,975.77 1215.0,976.15 1216.0,976.52 1217.0,976.90 1218.0,977.27 1219.0,977.63 1220.0,978.00 1221.0,978.36 1222.0,978.72 1223.0,979.08 1224.0,979.44 1225.0,979.79 1226.0,980.14 1227.0,980.49 1228.0,980.83 1229.0,981.18 1230.0,981.52 1231.0,981.85 1232.0,982.19 1233.0,982.52 1234.0,982.85 1235.0,983.17 1236.0,983.49 1237.0,983.81 1238.0,984.13 1239.0,984.44 1240.0,984.75 1241.0,985.05 1242.0,985.35 1243.0,985.65 1244.0,985.90 1245.0,986.15 1246.0,986.39 1247.0,986.62 1248.0,986.86 1249.0,987.08 1250.0,987.31 1251.0,987.52 1252.0,987.74 1253.0,987.94 1254.0,988.14 1255.0,988.34 1256.0,988.53 1257.0,988.71 1258.0,988.89 1259.0,989.06 1260.0,989.22 1261.0,989.37 1262.0,989.52 1263.0,989.65 1264.0,989.76 1265.0,989.86 1266.0,989.93 1267.0,989.93 1268.0,989.93 1269.0,989.93 1270.0,989.93 1271.0,989.93 1272.0,989.93 1273.0,989.93 1274.0,989.93 1275.0,989.93 1276.0,989.93 1277.0,989.93 1278.0,989.93 1279.0,989.93 1280.0,989.93 1281.0,989.93 1282.0,989.93 1283.0,989.93 1284.0,989.93 1285.0,989.93 1286.0,989.93 1287.0,989.93 1288.0,989.93 1289.0,989.93 1290.0,989.93 1291.0,989.93 1292.0,989.93 1293.0,989.93 1294.0,989.93 1295.0,989.93 1296.0,989.31 1297.0,988.58 1298.0,987.85 1299.0,986.81 1300.0,985.45 1301.0,984.09 1302.0,982.74 1303.0,981.26 1304.0,979.66 1305.0,978.05 1306.0,976.45 1307.0,974.94 1308.0,973.91 1309.0,972.92 1310.0,971.92 1311.0,970.93 1312.0,969.93 1313.0,969.02 1314.0,968.12 1315.0,967.22 1316.0,966.32 1317.0,965.41 1318.0,964.51 1319.0,963.74 1320.0,963.10 1321.0,962.46 1322.0,961.81 1323.0,961.17 1324.0,960.53 1325.0,959.89 1326.0,959.24 1327.0,958.66 1328.0,958.08 1329.0,957.51 1330.0,956.94 1331.0,956.36 1332.0,955.99 1333.0,955.72 1334.0,955.53 1335.0,955.34 1336.0,955.15 1337.0,954.96 1338.0,954.77 1339.0,954.96 1340.0,955.36 1341.0,955.77 1342.0,956.17 1343.0,956.57 1344.0,956.97 1345.0,957.37 1346.0,957.76 1347.0,958.16 1348.0,958.55 1349.0,958.94 1350.0,959.33 1351.0,959.72 1352.0,960.11 1353.0,960.50 1354.0,960.88 1355.0,961.26 1356.0,961.65 1357.0,962.03 1358.0,962.40 1359.0,962.78 1360.0,963.15 1361.0,963.53 1362.0,963.96 1363.0,964.39 1364.0,964.82 1365.0,965.25 1366.0,965.68 1367.0,966.10 1368.0,966.53 1369.0,966.95 1370.0,967.37 1371.0,967.79 1372.0,968.21 1373.0,968.62 1374.0,969.04 1375.0,969.45 1376.0,969.86 1377.0,970.27 1378.0,970.67 1379.0,971.08 1380.0,971.48 1381.0,971.88 1382.0,972.28 1383.0,972.68 1384.0,973.07 1385.0,973.46 1386.0,973.85 1387.0,974.24 1388.0,974.63 1389.0,975.01 1390.0,975.39 1391.0,975.77 1392.0,976.15 1393.0,976.52 1394.0,976.90 1395.0,977.27 1396.0,977.63 1397.0,978.00 1398.0,978.36 1399.0,978.72 1400.0,979.08 1401.0,979.44 1402.0,979.79 1403.0,980.14 1404.0,980.49 1405.0,980.83 1406.0,981.18 1407.0,981.52 1408.0,981.85 1409.0,982.19 1410.0,982.52 1410.0,1110.00" fill="#90ff70"/><polygon points="962.8,857.15 993.1,820.85 1030.8,857.15 993.1,893.45" fill="none" stroke="#90ff70" stroke-width="8.19" stroke-linejoin="miter" stroke-miterlimit="10"/><polygon points="1139.8,857.15 1170.2,820.85 1207.8,857.15 1170.2,893.45" fill="none" stroke="#90ff70" stroke-width="8.19" stroke-linejoin="miter" stroke-miterlimit="10"/><polygon points="1316.8,857.15 1347.2,820.85 1384.8,857.15 1347.2,893.45" fill="none" stroke="#90ff70" stroke-width="8.19" stroke-linejoin="miter" stroke-miterlimit="10"/><polygon points="902.0,787.50 936.0,787.50 919.0,801.00" fill="none" stroke="#90ff70" stroke-width="6.96" stroke-linejoin="miter" stroke-miterlimit="10" clip-path="url(#cu)"/><polygon points="902.0,923.20 936.0,923.20 918.0,910.70" fill="none" stroke="#90ff70" stroke-width="6.96" stroke-linejoin="miter" stroke-miterlimit="10" clip-path="url(#cd)"/><polygon points="1079.0,787.50 1113.0,787.50 1096.0,801.00" fill="none" stroke="#90ff70" stroke-width="6.96" stroke-linejoin="miter" stroke-miterlimit="10" clip-path="url(#cu)"/><polygon points="1079.0,923.20 1113.0,923.20 1095.0,910.70" fill="none" stroke="#90ff70" stroke-width="6.96" stroke-linejoin="miter" stroke-miterlimit="10" clip-path="url(#cd)"/><polygon points="1256.0,787.50 1290.0,787.50 1273.0,801.00" fill="none" stroke="#90ff70" stroke-width="6.96" stroke-linejoin="miter" stroke-miterlimit="10" clip-path="url(#cu)"/><polygon points="1256.0,923.20 1290.0,923.20 1272.0,910.70" fill="none" stroke="#90ff70" stroke-width="6.96" stroke-linejoin="miter" stroke-miterlimit="10" clip-path="url(#cd)"/><polygon points="950.0,600.00 950.0,733.01 951.0,734.50 952.0,735.98 953.0,737.27 954.0,738.26 955.0,739.22 956.0,740.19 957.0,741.15 958.0,742.09 959.0,742.97 960.0,743.84 961.0,744.71 962.0,745.59 963.0,746.46 964.0,747.33 965.0,747.98 966.0,748.60 967.0,749.23 968.0,749.85 969.0,750.47 970.0,751.10 971.0,751.72 972.0,752.33 973.0,752.89 974.0,753.44 975.0,754.00 976.0,754.55 977.0,755.11 978.0,755.48 979.0,755.70 980.0,755.90 981.0,756.10 982.0,756.30 983.0,756.50 984.0,756.70 985.0,756.02 986.0,755.46 987.0,754.91 988.0,754.35 989.0,753.81 990.0,753.26 991.0,752.72 992.0,752.19 993.0,751.66 994.0,751.13 995.0,750.60 996.0,750.08 997.0,749.56 998.0,749.05 999.0,748.54 1000.0,748.03 1001.0,747.52 1002.0,747.02 1003.0,746.53 1004.0,746.04 1005.0,745.55 1006.0,745.06 1007.0,744.58 1008.0,744.07 1009.0,743.55 1010.0,743.04 1011.0,742.54 1012.0,742.03 1013.0,741.53 1014.0,741.04 1015.0,740.55 1016.0,740.06 1017.0,739.58 1018.0,739.10 1019.0,738.63 1020.0,738.16 1021.0,737.70 1022.0,737.24 1023.0,736.78 1024.0,736.33 1025.0,735.89 1026.0,735.45 1027.0,735.01 1028.0,734.58 1029.0,734.16 1030.0,733.74 1031.0,733.32 1032.0,732.91 1033.0,732.51 1034.0,732.11 1035.0,731.71 1036.0,731.32 1037.0,730.94 1038.0,730.56 1039.0,730.19 1040.0,729.83 1041.0,729.47 1042.0,729.12 1043.0,728.77 1044.0,728.43 1045.0,728.10 1046.0,727.77 1047.0,727.45 1048.0,727.14 1049.0,726.83 1050.0,726.53 1051.0,726.25 1052.0,725.96 1053.0,725.69 1054.0,725.43 1055.0,725.17 1056.0,724.92 1057.0,724.69 1058.0,724.46 1059.0,724.25 1060.0,724.05 1061.0,723.86 1062.0,723.68 1063.0,723.53 1064.0,723.39 1065.0,723.27 1066.0,723.18 1067.0,723.18 1068.0,723.18 1069.0,723.18 1070.0,723.18 1071.0,723.18 1072.0,723.18 1073.0,723.18 1074.0,723.18 1075.0,723.18 1076.0,723.18 1077.0,723.18 1078.0,723.18 1079.0,723.18 1080.0,723.18 1081.0,723.18 1082.0,723.18 1083.0,723.18 1084.0,723.18 1085.0,723.18 1086.0,723.18 1087.0,723.18 1088.0,723.18 1089.0,723.18 1090.0,723.18 1091.0,723.18 1092.0,723.18 1093.0,723.18 1094.0,723.18 1095.0,723.18 1096.0,723.18 1097.0,723.18 1098.0,723.18 1099.0,723.18 1100.0,723.18 1101.0,723.18 1102.0,723.18 1103.0,723.18 1104.0,723.18 1105.0,723.18 1106.0,723.18 1107.0,723.18 1108.0,723.18 1109.0,723.18 1110.0,723.18 1111.0,723.18 1112.0,723.18 1113.0,723.18 1114.0,723.18 1115.0,723.18 1116.0,723.18 1117.0,723.18 1118.0,723.26 1119.0,723.87 1120.0,724.51 1121.0,725.15 1122.0,726.34 1123.0,727.58 1124.0,728.83 1125.0,730.07 1126.0,731.53 1127.0,733.01 1128.0,734.50 1129.0,735.98 1130.0,737.27 1131.0,738.26 1132.0,739.22 1133.0,740.19 1134.0,741.15 1135.0,742.09 1136.0,742.97 1137.0,743.84 1138.0,744.71 1139.0,745.59 1140.0,746.46 1141.0,747.33 1142.0,747.98 1143.0,748.60 1144.0,749.23 1145.0,749.85 1146.0,750.47 1147.0,751.10 1148.0,751.72 1149.0,752.33 1150.0,752.89 1151.0,753.44 1152.0,754.00 1153.0,754.55 1154.0,755.11 1155.0,755.48 1156.0,755.70 1157.0,755.90 1158.0,756.10 1159.0,756.30 1160.0,756.50 1161.0,756.70 1162.0,756.02 1163.0,755.46 1164.0,754.91 1165.0,754.35 1166.0,753.81 1167.0,753.26 1168.0,752.72 1169.0,752.19 1170.0,751.66 1171.0,751.13 1172.0,750.60 1173.0,750.08 1174.0,749.56 1175.0,749.05 1176.0,748.54 1177.0,748.03 1178.0,747.52 1179.0,747.02 1180.0,746.53 1181.0,746.04 1182.0,745.55 1183.0,745.06 1184.0,744.58 1185.0,744.07 1186.0,743.55 1187.0,743.04 1188.0,742.54 1189.0,742.03 1190.0,741.53 1191.0,741.04 1192.0,740.55 1193.0,740.06 1194.0,739.58 1195.0,739.10 1196.0,738.63 1197.0,738.16 1198.0,737.70 1199.0,737.24 1200.0,736.78 1201.0,736.33 1202.0,735.89 1203.0,735.45 1204.0,735.01 1205.0,734.58 1206.0,734.16 1207.0,733.74 1208.0,733.32 1209.0,732.91 1210.0,732.51 1211.0,732.11 1212.0,731.71 1213.0,731.32 1214.0,730.94 1215.0,730.56 1216.0,730.19 1217.0,729.83 1218.0,729.47 1219.0,729.12 1220.0,728.77 1221.0,728.43 1222.0,728.10 1223.0,727.77 1224.0,727.45 1225.0,727.14 1226.0,726.83 1227.0,726.53 1228.0,726.25 1229.0,725.96 1230.0,725.69 1231.0,725.43 1232.0,725.17 1233.0,724.92 1234.0,724.69 1235.0,724.46 1236.0,724.25 1237.0,724.05 1238.0,723.86 1239.0,723.68 1240.0,723.53 1241.0,723.39 1242.0,723.27 1243.0,723.18 1244.0,723.18 1245.0,723.18 1246.0,723.18 1247.0,723.18 1248.0,723.18 1249.0,723.18 1250.0,723.18 1251.0,723.18 1252.0,723.18 1253.0,723.18 1254.0,723.18 1255.0,723.18 1256.0,723.18 1257.0,723.18 1258.0,723.18 1259.0,723.18 1260.0,723.18 1261.0,723.18 1262.0,723.18 1263.0,723.18 1264.0,723.18 1265.0,723.18 1266.0,723.18 1267.0,723.18 1268.0,723.18 1269.0,723.18 1270.0,723.18 1271.0,723.18 1272.0,723.18 1273.0,723.18 1274.0,723.18 1275.0,723.18 1276.0,723.18 1277.0,723.18 1278.0,723.18 1279.0,723.18 1280.0,723.18 1281.0,723.18 1282.0,723.18 1283.0,723.18 1284.0,723.18 1285.0,723.18 1286.0,723.18 1287.0,723.18 1288.0,723.18 1289.0,723.18 1290.0,723.18 1291.0,723.18 1292.0,723.18 1293.0,723.18 1294.0,723.18 1295.0,723.26 1296.0,723.87 1297.0,724.51 1298.0,725.15 1299.0,726.34 1300.0,727.58 1301.0,728.83 1302.0,730.07 1303.0,731.53 1304.0,733.01 1305.0,734.50 1306.0,735.98 1307.0,737.27 1308.0,738.26 1309.0,739.22 1310.0,740.19 1311.0,741.15 1312.0,742.09 1313.0,742.97 1314.0,743.84 1315.0,744.71 1316.0,745.59 1317.0,746.46 1318.0,747.33 1319.0,747.98 1320.0,748.60 1321.0,749.23 1322.0,749.85 1323.0,750.47 1324.0,751.10 1325.0,751.72 1326.0,752.33 1327.0,752.89 1328.0,753.44 1329.0,754.00 1330.0,754.55 1331.0,755.11 1332.0,755.48 1333.0,755.70 1334.0,755.90 1335.0,756.10 1336.0,756.30 1337.0,756.50 1338.0,756.70 1339.0,756.02 1340.0,755.46 1341.0,754.91 1342.0,754.35 1343.0,753.81 1344.0,753.26 1345.0,752.72 1346.0,752.19 1347.0,751.66 1348.0,751.13 1349.0,750.60 1350.0,750.08 1351.0,749.56 1352.0,749.05 1353.0,748.54 1354.0,748.03 1355.0,747.52 1356.0,747.02 1357.0,746.53 1358.0,746.04 1359.0,745.55 1360.0,745.06 1361.0,744.58 1362.0,744.07 1363.0,743.55 1364.0,743.04 1365.0,742.54 1366.0,742.03 1367.0,741.53 1368.0,741.04 1369.0,740.55 1370.0,740.06 1371.0,739.58 1372.0,739.10 1373.0,738.63 1374.0,738.16 1375.0,737.70 1376.0,737.24 1377.0,736.78 1378.0,736.33 1379.0,735.89 1380.0,735.45 1381.0,735.01 1382.0,734.58 1383.0,734.16 1384.0,733.74 1385.0,733.32 1386.0,732.91 1387.0,732.51 1388.0,732.11 1389.0,731.71 1390.0,731.32 1391.0,730.94 1392.0,730.56 1393.0,730.19 1394.0,729.83 1395.0,729.47 1396.0,729.12 1397.0,728.77 1398.0,728.43 1399.0,728.10 1400.0,727.77 1401.0,727.45 1402.0,727.14 1403.0,726.83 1404.0,726.53 1405.0,726.25 1406.0,725.96 1407.0,725.69 1408.0,725.43 1409.0,725.17 1410.0,724.92 1410.0,600.00" fill="#00ffff"/><polygon points="950.0,1110.00 950.0,980.80 951.0,979.29 952.0,977.78 953.0,976.36 954.0,975.34 955.0,974.35 956.0,973.35 957.0,972.36 958.0,971.36 959.0,970.45 960.0,969.55 961.0,968.65 962.0,967.75 963.0,966.84 964.0,965.94 965.0,965.17 966.0,964.53 967.0,963.89 968.0,963.24 969.0,962.60 970.0,961.96 971.0,961.32 972.0,960.67 973.0,960.09 974.0,959.51 975.0,958.94 976.0,958.37 977.0,957.79 978.0,957.37 979.0,957.03 980.0,956.78 981.0,956.53 982.0,956.28 983.0,956.02 984.0,955.77 985.0,955.95 986.0,956.36 987.0,956.77 988.0,957.18 989.0,957.58 990.0,957.99 991.0,958.39 992.0,958.79 993.0,959.19 994.0,959.59 995.0,959.99 996.0,960.38 997.0,960.78 998.0,961.17 999.0,961.56 1000.0,961.95 1001.0,962.34 1002.0,962.72 1003.0,963.11 1004.0,963.49 1005.0,963.87 1006.0,964.25 1007.0,964.63 1008.0,965.04 1009.0,965.46 1010.0,965.88 1011.0,966.30 1012.0,966.71 1013.0,967.13 1014.0,967.54 1015.0,967.95 1016.0,968.36 1017.0,968.76 1018.0,969.17 1019.0,969.57 1020.0,969.97 1021.0,970.37 1022.0,970.77 1023.0,971.16 1024.0,971.55 1025.0,971.94 1026.0,972.33 1027.0,972.72 1028.0,973.11 1029.0,973.49 1030.0,973.87 1031.0,974.25 1032.0,974.63 1033.0,975.00 1034.0,975.38 1035.0,975.75 1036.0,976.11 1037.0,976.48 1038.0,976.84 1039.0,977.21 1040.0,977.57 1041.0,977.92 1042.0,978.28 1043.0,978.63 1044.0,978.98 1045.0,979.33 1046.0,979.67 1047.0,980.02 1048.0,980.36 1049.0,980.69 1050.0,981.03 1051.0,981.36 1052.0,981.69 1053.0,982.02 1054.0,982.34 1055.0,982.66 1056.0,982.98 1057.0,983.29 1058.0,983.61 1059.0,983.92 1060.0,984.22 1061.0,984.52 1062.0,984.82 1063.0,985.12 1064.0,985.41 1065.0,985.70 1066.0,985.98 1067.0,986.23 1068.0,986.48 1069.0,986.72 1070.0,986.95 1071.0,987.19 1072.0,987.41 1073.0,987.64 1074.0,987.85 1075.0,988.07 1076.0,988.27 1077.0,988.47 1078.0,988.67 1079.0,988.86 1080.0,989.04 1081.0,989.22 1082.0,989.39 1083.0,989.55 1084.0,989.70 1085.0,989.85 1086.0,989.98 1087.0,990.09 1088.0,990.19 1089.0,990.26 1090.0,990.26 1091.0,990.26 1092.0,990.26 1093.0,990.26 1094.0,990.26 1095.0,990.26 1096.0,990.26 1097.0,990.26 1098.0,990.26 1099.0,990.26 1100.0,990.26 1101.0,990.26 1102.0,990.26 1103.0,990.26 1104.0,990.26 1105.0,990.26 1106.0,990.26 1107.0,990.26 1108.0,990.26 1109.0,990.26 1110.0,990.26 1111.0,990.26 1112.0,990.26 1113.0,990.26 1114.0,990.26 1115.0,990.26 1116.0,990.26 1117.0,990.26 1118.0,990.26 1119.0,989.72 1120.0,989.09 1121.0,988.45 1122.0,987.49 1123.0,986.23 1124.0,984.96 1125.0,983.70 1126.0,982.31 1127.0,980.80 1128.0,979.29 1129.0,977.78 1130.0,976.36 1131.0,975.34 1132.0,974.35 1133.0,973.35 1134.0,972.36 1135.0,971.36 1136.0,970.45 1137.0,969.55 1138.0,968.65 1139.0,967.75 1140.0,966.84 1141.0,965.94 1142.0,965.17 1143.0,964.53 1144.0,963.89 1145.0,963.24 1146.0,962.60 1147.0,961.96 1148.0,961.32 1149.0,960.67 1150.0,960.09 1151.0,959.51 1152.0,958.94 1153.0,958.37 1154.0,957.79 1155.0,957.37 1156.0,957.03 1157.0,956.78 1158.0,956.53 1159.0,956.28 1160.0,956.02 1161.0,955.77 1162.0,955.95 1163.0,956.36 1164.0,956.77 1165.0,957.18 1166.0,957.58 1167.0,957.99 1168.0,958.39 1169.0,958.79 1170.0,959.19 1171.0,959.59 1172.0,959.99 1173.0,960.38 1174.0,960.78 1175.0,961.17 1176.0,961.56 1177.0,961.95 1178.0,962.34 1179.0,962.72 1180.0,963.11 1181.0,963.49 1182.0,963.87 1183.0,964.25 1184.0,964.63 1185.0,965.04 1186.0,965.46 1187.0,965.88 1188.0,966.30 1189.0,966.71 1190.0,967.13 1191.0,967.54 1192.0,967.95 1193.0,968.36 1194.0,968.76 1195.0,969.17 1196.0,969.57 1197.0,969.97 1198.0,970.37 1199.0,970.77 1200.0,971.16 1201.0,971.55 1202.0,971.94 1203.0,972.33 1204.0,972.72 1205.0,973.11 1206.0,973.49 1207.0,973.87 1208.0,974.25 1209.0,974.63 1210.0,975.00 1211.0,975.38 1212.0,975.75 1213.0,976.11 1214.0,976.48 1215.0,976.84 1216.0,977.21 1217.0,977.57 1218.0,977.92 1219.0,978.28 1220.0,978.63 1221.0,978.98 1222.0,979.33 1223.0,979.67 1224.0,980.02 1225.0,980.36 1226.0,980.69 1227.0,981.03 1228.0,981.36 1229.0,981.69 1230.0,982.02 1231.0,982.34 1232.0,982.66 1233.0,982.98 1234.0,983.29 1235.0,983.61 1236.0,983.92 1237.0,984.22 1238.0,984.52 1239.0,984.82 1240.0,985.12 1241.0,985.41 1242.0,985.70 1243.0,985.98 1244.0,986.23 1245.0,986.48 1246.0,986.72 1247.0,986.95 1248.0,987.19 1249.0,987.41 1250.0,987.64 1251.0,987.85 1252.0,988.07 1253.0,988.27 1254.0,988.47 1255.0,988.67 1256.0,988.86 1257.0,989.04 1258.0,989.22 1259.0,989.39 1260.0,989.55 1261.0,989.70 1262.0,989.85 1263.0,989.98 1264.0,990.09 1265.0,990.19 1266.0,990.26 1267.0,990.26 1268.0,990.26 1269.0,990.26 1270.0,990.26 1271.0,990.26 1272.0,990.26 1273.0,990.26 1274.0,990.26 1275.0,990.26 1276.0,990.26 1277.0,990.26 1278.0,990.26 1279.0,990.26 1280.0,990.26 1281.0,990.26 1282.0,990.26 1283.0,990.26 1284.0,990.26 1285.0,990.26 1286.0,990.26 1287.0,990.26 1288.0,990.26 1289.0,990.26 1290.0,990.26 1291.0,990.26 1292.0,990.26 1293.0,990.26 1294.0,990.26 1295.0,990.26 1296.0,989.72 1297.0,989.09 1298.0,988.45 1299.0,987.49 1300.0,986.23 1301.0,984.96 1302.0,983.70 1303.0,982.31 1304.0,980.80 1305.0,979.29 1306.0,977.78 1307.0,976.36 1308.0,975.34 1309.0,974.35 1310.0,973.35 1311.0,972.36 1312.0,971.36 1313.0,970.45 1314.0,969.55 1315.0,968.65 1316.0,967.75 1317.0,966.84 1318.0,965.94 1319.0,965.17 1320.0,964.53 1321.0,963.89 1322.0,963.24 1323.0,962.60 1324.0,961.96 1325.0,961.32 1326.0,960.67 1327.0,960.09 1328.0,959.51 1329.0,958.94 1330.0,958.37 1331.0,957.79 1332.0,957.37 1333.0,957.03 1334.0,956.78 1335.0,956.53 1336.0,956.28 1337.0,956.02 1338.0,955.77 1339.0,955.95 1340.0,956.36 1341.0,956.77 1342.0,957.18 1343.0,957.58 1344.0,957.99 1345.0,958.39 1346.0,958.79 1347.0,959.19 1348.0,959.59 1349.0,959.99 1350.0,960.38 1351.0,960.78 1352.0,961.17 1353.0,961.56 1354.0,961.95 1355.0,962.34 1356.0,962.72 1357.0,963.11 1358.0,963.49 1359.0,963.87 1360.0,964.25 1361.0,964.63 1362.0,965.04 1363.0,965.46 1364.0,965.88 1365.0,966.30 1366.0,966.71 1367.0,967.13 1368.0,967.54 1369.0,967.95 1370.0,968.36 1371.0,968.76 1372.0,969.17 1373.0,969.57 1374.0,969.97 1375.0,970.37 1376.0,970.77 1377.0,971.16 1378.0,971.55 1379.0,971.94 1380.0,972.33 1381.0,972.72 1382.0,973.11 1383.0,973.49 1384.0,973.87 1385.0,974.25 1386.0,974.63 1387.0,975.00 1388.0,975.38 1389.0,975.75 1390.0,976.11 1391.0,976.48 1392.0,976.84 1393.0,977.21 1394.0,977.57 1395.0,977.92 1396.0,978.28 1397.0,978.63 1398.0,978.98 1399.0,979.33 1400.0,979.67 1401.0,980.02 1402.0,980.36 1403.0,980.69 1404.0,981.03 1405.0,981.36 1406.0,981.69 1407.0,982.02 1408.0,982.34 1409.0,982.66 1410.0,982.98 1410.0,1110.00" fill="#00ffff"/><polygon points="962.8,857.15 993.1,820.85 1030.8,857.15 993.1,893.45" fill="none" stroke="#00ffff" stroke-width="5.88" stroke-linejoin="miter" stroke-miterlimit="10"/><polygon points="1139.8,857.15 1170.2,820.85 1207.8,857.15 1170.2,893.45" fill="none" stroke="#00ffff" stroke-width="5.88" stroke-linejoin="miter" stroke-miterlimit="10"/><polygon points="1316.8,857.15 1347.2,820.85 1384.8,857.15 1347.2,893.45" fill="none" stroke="#00ffff" stroke-width="5.88" stroke-linejoin="miter" stroke-miterlimit="10"/><polygon points="902.0,787.50 936.0,787.50 919.0,801.00" fill="none" stroke="#00ffff" stroke-width="5.00" stroke-linejoin="miter" stroke-miterlimit="10" clip-path="url(#cu)"/><polygon points="902.0,923.20 936.0,923.20 918.0,910.70" fill="none" stroke="#00ffff" stroke-width="5.00" stroke-linejoin="miter" stroke-miterlimit="10" clip-path="url(#cd)"/><polygon points="1079.0,787.50 1113.0,787.50 1096.0,801.00" fill="none" stroke="#00ffff" stroke-width="5.00" stroke-linejoin="miter" stroke-miterlimit="10" clip-path="url(#cu)"/><polygon points="1079.0,923.20 1113.0,923.20 1095.0,910.70" fill="none" stroke="#00ffff" stroke-width="5.00" stroke-linejoin="miter" stroke-miterlimit="10" clip-path="url(#cd)"/><polygon points="1256.0,787.50 1290.0,787.50 1273.0,801.00" fill="none" stroke="#00ffff" stroke-width="5.00" stroke-linejoin="miter" stroke-miterlimit="10" clip-path="url(#cu)"/><polygon points="1256.0,923.20 1290.0,923.20 1272.0,910.70" fill="none" stroke="#00ffff" stroke-width="5.00" stroke-linejoin="miter" stroke-miterlimit="10" clip-path="url(#cd)"/><polygon points="950.0,600.00 950.0,731.88 951.0,733.28 952.0,734.68 953.0,735.88 954.0,736.86 955.0,737.82 956.0,738.79 957.0,739.75 958.0,740.69 959.0,741.57 960.0,742.44 961.0,743.31 962.0,744.19 963.0,745.06 964.0,745.93 965.0,746.58 966.0,747.20 967.0,747.83 968.0,748.45 969.0,749.07 970.0,749.70 971.0,750.32 972.0,750.93 973.0,751.49 974.0,752.04 975.0,752.60 976.0,753.15 977.0,753.71 978.0,754.15 979.0,754.44 980.0,754.71 981.0,754.98 982.0,755.25 983.0,755.52 984.0,755.79 985.0,755.11 986.0,754.55 987.0,753.99 988.0,753.44 989.0,752.89 990.0,752.34 991.0,751.79 992.0,751.25 993.0,750.72 994.0,750.18 995.0,749.65 996.0,749.13 997.0,748.60 998.0,748.09 999.0,747.57 1000.0,747.06 1001.0,746.55 1002.0,746.05 1003.0,745.55 1004.0,745.05 1005.0,744.56 1006.0,744.07 1007.0,743.58 1008.0,743.08 1009.0,742.57 1010.0,742.07 1011.0,741.58 1012.0,741.09 1013.0,740.60 1014.0,740.12 1015.0,739.64 1016.0,739.16 1017.0,738.69 1018.0,738.22 1019.0,737.76 1020.0,737.30 1021.0,736.85 1022.0,736.40 1023.0,735.96 1024.0,735.52 1025.0,735.09 1026.0,734.66 1027.0,734.23 1028.0,733.81 1029.0,733.40 1030.0,732.99 1031.0,732.58 1032.0,732.19 1033.0,731.79 1034.0,731.40 1035.0,731.02 1036.0,730.64 1037.0,730.27 1038.0,729.90 1039.0,729.54 1040.0,729.19 1041.0,728.84 1042.0,728.50 1043.0,728.16 1044.0,727.84 1045.0,727.51 1046.0,727.20 1047.0,726.89 1048.0,726.59 1049.0,726.29 1050.0,726.01 1051.0,725.73 1052.0,725.46 1053.0,725.20 1054.0,724.94 1055.0,724.70 1056.0,724.46 1057.0,724.24 1058.0,724.02 1059.0,723.82 1060.0,723.63 1061.0,723.45 1062.0,723.29 1063.0,723.14 1064.0,723.01 1065.0,722.91 1066.0,722.83 1067.0,722.83 1068.0,722.83 1069.0,722.83 1070.0,722.83 1071.0,722.83 1072.0,722.83 1073.0,722.83 1074.0,722.83 1075.0,722.83 1076.0,722.83 1077.0,722.83 1078.0,722.83 1079.0,722.83 1080.0,722.83 1081.0,722.83 1082.0,722.83 1083.0,722.83 1084.0,722.83 1085.0,722.83 1086.0,722.83 1087.0,722.83 1088.0,722.83 1089.0,722.83 1090.0,722.83 1091.0,722.83 1092.0,722.83 1093.0,722.83 1094.0,722.83 1095.0,722.83 1096.0,722.83 1097.0,722.83 1098.0,722.83 1099.0,722.83 1100.0,722.83 1101.0,722.83 1102.0,722.83 1103.0,722.83 1104.0,722.83 1105.0,722.83 1106.0,722.83 1107.0,722.83 1108.0,722.83 1109.0,722.83 1110.0,722.83 1111.0,722.83 1112.0,722.83 1113.0,722.83 1114.0,722.83 1115.0,722.83 1116.0,722.83 1117.0,722.83 1118.0,722.91 1119.0,723.44 1120.0,724.00 1121.0,724.55 1122.0,725.64 1123.0,726.80 1124.0,727.96 1125.0,729.12 1126.0,730.49 1127.0,731.88 1128.0,733.28 1129.0,734.68 1130.0,735.88 1131.0,736.86 1132.0,737.82 1133.0,738.79 1134.0,739.75 1135.0,740.69 1136.0,741.57 1137.0,742.44 1138.0,743.31 1139.0,744.19 1140.0,745.06 1141.0,745.93 1142.0,746.58 1143.0,747.20 1144.0,747.83 1145.0,748.45 1146.0,749.07 1147.0,749.70 1148.0,750.32 1149.0,750.93 1150.0,751.49 1151.0,752.04 1152.0,752.60 1153.0,753.15 1154.0,753.71 1155.0,754.15 1156.0,754.44 1157.0,754.71 1158.0,754.98 1159.0,755.25 1160.0,755.52 1161.0,755.79 1162.0,755.11 1163.0,754.55 1164.0,753.99 1165.0,753.44 1166.0,752.89 1167.0,752.34 1168.0,751.79 1169.0,751.25 1170.0,750.72 1171.0,750.18 1172.0,749.65 1173.0,749.13 1174.0,748.60 1175.0,748.09 1176.0,747.57 1177.0,747.06 1178.0,746.55 1179.0,746.05 1180.0,745.55 1181.0,745.05 1182.0,744.56 1183.0,744.07 1184.0,743.58 1185.0,743.08 1186.0,742.57 1187.0,742.07 1188.0,741.58 1189.0,741.09 1190.0,740.60 1191.0,740.12 1192.0,739.64 1193.0,739.16 1194.0,738.69 1195.0,738.22 1196.0,737.76 1197.0,737.30 1198.0,736.85 1199.0,736.40 1200.0,735.96 1201.0,735.52 1202.0,735.09 1203.0,734.66 1204.0,734.23 1205.0,733.81 1206.0,733.40 1207.0,732.99 1208.0,732.58 1209.0,732.19 1210.0,731.79 1211.0,731.40 1212.0,731.02 1213.0,730.64 1214.0,730.27 1215.0,729.90 1216.0,729.54 1217.0,729.19 1218.0,728.84 1219.0,728.50 1220.0,728.16 1221.0,727.84 1222.0,727.51 1223.0,727.20 1224.0,726.89 1225.0,726.59 1226.0,726.29 1227.0,726.01 1228.0,725.73 1229.0,725.46 1230.0,725.20 1231.0,724.94 1232.0,724.70 1233.0,724.46 1234.0,724.24 1235.0,724.02 1236.0,723.82 1237.0,723.63 1238.0,723.45 1239.0,723.29 1240.0,723.14 1241.0,723.01 1242.0,722.91 1243.0,722.83 1244.0,722.83 1245.0,722.83 1246.0,722.83 1247.0,722.83 1248.0,722.83 1249.0,722.83 1250.0,722.83 1251.0,722.83 1252.0,722.83 1253.0,722.83 1254.0,722.83 1255.0,722.83 1256.0,722.83 1257.0,722.83 1258.0,722.83 1259.0,722.83 1260.0,722.83 1261.0,722.83 1262.0,722.83 1263.0,722.83 1264.0,722.83 1265.0,722.83 1266.0,722.83 1267.0,722.83 1268.0,722.83 1269.0,722.83 1270.0,722.83 1271.0,722.83 1272.0,722.83 1273.0,722.83 1274.0,722.83 1275.0,722.83 1276.0,722.83 1277.0,722.83 1278.0,722.83 1279.0,722.83 1280.0,722.83 1281.0,722.83 1282.0,722.83 1283.0,722.83 1284.0,722.83 1285.0,722.83 1286.0,722.83 1287.0,722.83 1288.0,722.83 1289.0,722.83 1290.0,722.83 1291.0,722.83 1292.0,722.83 1293.0,722.83 1294.0,722.83 1295.0,722.91 1296.0,723.44 1297.0,724.00 1298.0,724.55 1299.0,725.64 1300.0,726.80 1301.0,727.96 1302.0,729.12 1303.0,730.49 1304.0,731.88 1305.0,733.28 1306.0,734.68 1307.0,735.88 1308.0,736.86 1309.0,737.82 1310.0,738.79 1311.0,739.75 1312.0,740.69 1313.0,741.57 1314.0,742.44 1315.0,743.31 1316.0,744.19 1317.0,745.06 1318.0,745.93 1319.0,746.58 1320.0,747.20 1321.0,747.83 1322.0,748.45 1323.0,749.07 1324.0,749.70 1325.0,750.32 1326.0,750.93 1327.0,751.49 1328.0,752.04 1329.0,752.60 1330.0,753.15 1331.0,753.71 1332.0,754.15 1333.0,754.44 1334.0,754.71 1335.0,754.98 1336.0,755.25 1337.0,755.52 1338.0,755.79 1339.0,755.11 1340.0,754.55 1341.0,753.99 1342.0,753.44 1343.0,752.89 1344.0,752.34 1345.0,751.79 1346.0,751.25 1347.0,750.72 1348.0,750.18 1349.0,749.65 1350.0,749.13 1351.0,748.60 1352.0,748.09 1353.0,747.57 1354.0,747.06 1355.0,746.55 1356.0,746.05 1357.0,745.55 1358.0,745.05 1359.0,744.56 1360.0,744.07 1361.0,743.58 1362.0,743.08 1363.0,742.57 1364.0,742.07 1365.0,741.58 1366.0,741.09 1367.0,740.60 1368.0,740.12 1369.0,739.64 1370.0,739.16 1371.0,738.69 1372.0,738.22 1373.0,737.76 1374.0,737.30 1375.0,736.85 1376.0,736.40 1377.0,735.96 1378.0,735.52 1379.0,735.09 1380.0,734.66 1381.0,734.23 1382.0,733.81 1383.0,733.40 1384.0,732.99 1385.0,732.58 1386.0,732.19 1387.0,731.79 1388.0,731.40 1389.0,731.02 1390.0,730.64 1391.0,730.27 1392.0,729.90 1393.0,729.54 1394.0,729.19 1395.0,728.84 1396.0,728.50 1397.0,728.16 1398.0,727.84 1399.0,727.51 1400.0,727.20 1401.0,726.89 1402.0,726.59 1403.0,726.29 1404.0,726.01 1405.0,725.73 1406.0,725.46 1407.0,725.20 1408.0,724.94 1409.0,724.70 1410.0,724.46 1410.0,600.00" fill="#0090ff"/><polygon points="950.0,1110.00 950.0,981.84 951.0,980.42 952.0,978.99 953.0,977.65 954.0,976.64 955.0,975.65 956.0,974.65 957.0,973.66 958.0,972.66 959.0,971.75 960.0,970.85 961.0,969.95 962.0,969.05 963.0,968.14 964.0,967.24 965.0,966.47 966.0,965.83 967.0,965.19 968.0,964.54 969.0,963.90 970.0,963.26 971.0,962.62 972.0,961.97 973.0,961.39 974.0,960.81 975.0,960.24 976.0,959.67 977.0,959.09 978.0,958.61 979.0,958.22 980.0,957.91 981.0,957.60 982.0,957.30 983.0,956.99 984.0,956.68 985.0,956.85 986.0,957.27 987.0,957.68 988.0,958.09 989.0,958.50 990.0,958.91 991.0,959.32 992.0,959.73 993.0,960.13 994.0,960.53 995.0,960.93 996.0,961.33 997.0,961.73 998.0,962.13 999.0,962.52 1000.0,962.92 1001.0,963.31 1002.0,963.70 1003.0,964.09 1004.0,964.48 1005.0,964.86 1006.0,965.24 1007.0,965.63 1008.0,966.03 1009.0,966.44 1010.0,966.85 1011.0,967.25 1012.0,967.66 1013.0,968.06 1014.0,968.46 1015.0,968.85 1016.0,969.25 1017.0,969.64 1018.0,970.04 1019.0,970.43 1020.0,970.82 1021.0,971.20 1022.0,971.59 1023.0,971.97 1024.0,972.35 1025.0,972.73 1026.0,973.11 1027.0,973.49 1028.0,973.86 1029.0,974.23 1030.0,974.60 1031.0,974.97 1032.0,975.33 1033.0,975.69 1034.0,976.06 1035.0,976.41 1036.0,976.77 1037.0,977.13 1038.0,977.48 1039.0,977.83 1040.0,978.18 1041.0,978.52 1042.0,978.86 1043.0,979.20 1044.0,979.54 1045.0,979.88 1046.0,980.21 1047.0,980.54 1048.0,980.87 1049.0,981.20 1050.0,981.52 1051.0,981.84 1052.0,982.16 1053.0,982.47 1054.0,982.78 1055.0,983.09 1056.0,983.40 1057.0,983.70 1058.0,984.00 1059.0,984.30 1060.0,984.59 1061.0,984.88 1062.0,985.17 1063.0,985.45 1064.0,985.73 1065.0,986.01 1066.0,986.28 1067.0,986.53 1068.0,986.78 1069.0,987.02 1070.0,987.25 1071.0,987.49 1072.0,987.71 1073.0,987.94 1074.0,988.15 1075.0,988.37 1076.0,988.57 1077.0,988.77 1078.0,988.97 1079.0,989.16 1080.0,989.34 1081.0,989.52 1082.0,989.69 1083.0,989.85 1084.0,990.00 1085.0,990.15 1086.0,990.28 1087.0,990.39 1088.0,990.49 1089.0,990.56 1090.0,990.56 1091.0,990.56 1092.0,990.56 1093.0,990.56 1094.0,990.56 1095.0,990.56 1096.0,990.56 1097.0,990.56 1098.0,990.56 1099.0,990.56 1100.0,990.56 1101.0,990.56 1102.0,990.56 1103.0,990.56 1104.0,990.56 1105.0,990.56 1106.0,990.56 1107.0,990.56 1108.0,990.56 1109.0,990.56 1110.0,990.56 1111.0,990.56 1112.0,990.56 1113.0,990.56 1114.0,990.56 1115.0,990.56 1116.0,990.56 1117.0,990.56 1118.0,990.56 1119.0,990.10 1120.0,989.54 1121.0,988.99 1122.0,988.12 1123.0,986.94 1124.0,985.76 1125.0,984.57 1126.0,983.27 1127.0,981.84 1128.0,980.42 1129.0,978.99 1130.0,977.65 1131.0,976.64 1132.0,975.65 1133.0,974.65 1134.0,973.66 1135.0,972.66 1136.0,971.75 1137.0,970.85 1138.0,969.95 1139.0,969.05 1140.0,968.14 1141.0,967.24 1142.0,966.47 1143.0,965.83 1144.0,965.19 1145.0,964.54 1146.0,963.90 1147.0,963.26 1148.0,962.62 1149.0,961.97 1150.0,961.39 1151.0,960.81 1152.0,960.24 1153.0,959.67 1154.0,959.09 1155.0,958.61 1156.0,958.22 1157.0,957.91 1158.0,957.60 1159.0,957.30 1160.0,956.99 1161.0,956.68 1162.0,956.85 1163.0,957.27 1164.0,957.68 1165.0,958.09 1166.0,958.50 1167.0,958.91 1168.0,959.32 1169.0,959.73 1170.0,960.13 1171.0,960.53 1172.0,960.93 1173.0,961.33 1174.0,961.73 1175.0,962.13 1176.0,962.52 1177.0,962.92 1178.0,963.31 1179.0,963.70 1180.0,964.09 1181.0,964.48 1182.0,964.86 1183.0,965.24 1184.0,965.63 1185.0,966.03 1186.0,966.44 1187.0,966.85 1188.0,967.25 1189.0,967.66 1190.0,968.06 1191.0,968.46 1192.0,968.85 1193.0,969.25 1194.0,969.64 1195.0,970.04 1196.0,970.43 1197.0,970.82 1198.0,971.20 1199.0,971.59 1200.0,971.97 1201.0,972.35 1202.0,972.73 1203.0,973.11 1204.0,973.49 1205.0,973.86 1206.0,974.23 1207.0,974.60 1208.0,974.97 1209.0,975.33 1210.0,975.69 1211.0,976.06 1212.0,976.41 1213.0,976.77 1214.0,977.13 1215.0,977.48 1216.0,977.83 1217.0,978.18 1218.0,978.52 1219.0,978.86 1220.0,979.20 1221.0,979.54 1222.0,979.88 1223.0,980.21 1224.0,980.54 1225.0,980.87 1226.0,981.20 1227.0,981.52 1228.0,981.84 1229.0,982.16 1230.0,982.47 1231.0,982.78 1232.0,983.09 1233.0,983.40 1234.0,983.70 1235.0,984.00 1236.0,984.30 1237.0,984.59 1238.0,984.88 1239.0,985.17 1240.0,985.45 1241.0,985.73 1242.0,986.01 1243.0,986.28 1244.0,986.53 1245.0,986.78 1246.0,987.02 1247.0,987.25 1248.0,987.49 1249.0,987.71 1250.0,987.94 1251.0,988.15 1252.0,988.37 1253.0,988.57 1254.0,988.77 1255.0,988.97 1256.0,989.16 1257.0,989.34 1258.0,989.52 1259.0,989.69 1260.0,989.85 1261.0,990.00 1262.0,990.15 1263.0,990.28 1264.0,990.39 1265.0,990.49 1266.0,990.56 1267.0,990.56 1268.0,990.56 1269.0,990.56 1270.0,990.56 1271.0,990.56 1272.0,990.56 1273.0,990.56 1274.0,990.56 1275.0,990.56 1276.0,990.56 1277.0,990.56 1278.0,990.56 1279.0,990.56 1280.0,990.56 1281.0,990.56 1282.0,990.56 1283.0,990.56 1284.0,990.56 1285.0,990.56 1286.0,990.56 1287.0,990.56 1288.0,990.56 1289.0,990.56 1290.0,990.56 1291.0,990.56 1292.0,990.56 1293.0,990.56 1294.0,990.56 1295.0,990.56 1296.0,990.10 1297.0,989.54 1298.0,988.99 1299.0,988.12 1300.0,986.94 1301.0,985.76 1302.0,984.57 1303.0,983.27 1304.0,981.84 1305.0,980.42 1306.0,978.99 1307.0,977.65 1308.0,976.64 1309.0,975.65 1310.0,974.65 1311.0,973.66 1312.0,972.66 1313.0,971.75 1314.0,970.85 1315.0,969.95 1316.0,969.05 1317.0,968.14 1318.0,967.24 1319.0,966.47 1320.0,965.83 1321.0,965.19 1322.0,964.54 1323.0,963.90 1324.0,963.26 1325.0,962.62 1326.0,961.97 1327.0,961.39 1328.0,960.81 1329.0,960.24 1330.0,959.67 1331.0,959.09 1332.0,958.61 1333.0,958.22 1334.0,957.91 1335.0,957.60 1336.0,957.30 1337.0,956.99 1338.0,956.68 1339.0,956.85 1340.0,957.27 1341.0,957.68 1342.0,958.09 1343.0,958.50 1344.0,958.91 1345.0,959.32 1346.0,959.73 1347.0,960.13 1348.0,960.53 1349.0,960.93 1350.0,961.33 1351.0,961.73 1352.0,962.13 1353.0,962.52 1354.0,962.92 1355.0,963.31 1356.0,963.70 1357.0,964.09 1358.0,964.48 1359.0,964.86 1360.0,965.24 1361.0,965.63 1362.0,966.03 1363.0,966.44 1364.0,966.85 1365.0,967.25 1366.0,967.66 1367.0,968.06 1368.0,968.46 1369.0,968.85 1370.0,969.25 1371.0,969.64 1372.0,970.04 1373.0,970.43 1374.0,970.82 1375.0,971.20 1376.0,971.59 1377.0,971.97 1378.0,972.35 1379.0,972.73 1380.0,973.11 1381.0,973.49 1382.0,973.86 1383.0,974.23 1384.0,974.60 1385.0,974.97 1386.0,975.33 1387.0,975.69 1388.0,976.06 1389.0,976.41 1390.0,976.77 1391.0,977.13 1392.0,977.48 1393.0,977.83 1394.0,978.18 1395.0,978.52 1396.0,978.86 1397.0,979.20 1398.0,979.54 1399.0,979.88 1400.0,980.21 1401.0,980.54 1402.0,980.87 1403.0,981.20 1404.0,981.52 1405.0,981.84 1406.0,982.16 1407.0,982.47 1408.0,982.78 1409.0,983.09 1410.0,983.40 1410.0,1110.00" fill="#0090ff"/><polygon points="962.8,857.15 993.1,820.85 1030.8,857.15 993.1,893.45" fill="none" stroke="#0090ff" stroke-width="3.78" stroke-linejoin="miter" stroke-miterlimit="10"/><polygon points="1139.8,857.15 1170.2,820.85 1207.8,857.15 1170.2,893.45" fill="none" stroke="#0090ff" stroke-width="3.78" stroke-linejoin="miter" stroke-miterlimit="10"/><polygon points="1316.8,857.15 1347.2,820.85 1384.8,857.15 1347.2,893.45" fill="none" stroke="#0090ff" stroke-width="3.78" stroke-linejoin="miter" stroke-miterlimit="10"/><polygon points="902.0,787.50 936.0,787.50 919.0,801.00" fill="none" stroke="#0090ff" stroke-width="3.21" stroke-linejoin="miter" stroke-miterlimit="10" clip-path="url(#cu)"/><polygon points="902.0,923.20 936.0,923.20 918.0,910.70" fill="none" stroke="#0090ff" stroke-width="3.21" stroke-linejoin="miter" stroke-miterlimit="10" clip-path="url(#cd)"/><polygon points="1079.0,787.50 1113.0,787.50 1096.0,801.00" fill="none" stroke="#0090ff" stroke-width="3.21" stroke-linejoin="miter" stroke-miterlimit="10" clip-path="url(#cu)"/><polygon points="1079.0,923.20 1113.0,923.20 1095.0,910.70" fill="none" stroke="#0090ff" stroke-width="3.21" stroke-linejoin="miter" stroke-miterlimit="10" clip-path="url(#cd)"/><polygon points="1256.0,787.50 1290.0,787.50 1273.0,801.00" fill="none" stroke="#0090ff" stroke-width="3.21" stroke-linejoin="miter" stroke-miterlimit="10" clip-path="url(#cu)"/><polygon points="1256.0,923.20 1290.0,923.20 1272.0,910.70" fill="none" stroke="#0090ff" stroke-width="3.21" stroke-linejoin="miter" stroke-miterlimit="10" clip-path="url(#cd)"/><polygon points="950.0,600.00 950.0,730.81 951.0,732.12 952.0,733.44 953.0,734.56 954.0,735.53 955.0,736.49 956.0,737.46 957.0,738.42 958.0,739.36 959.0,740.24 960.0,741.11 961.0,741.98 962.0,742.86 963.0,743.73 964.0,744.60 965.0,745.25 966.0,745.87 967.0,746.50 968.0,747.12 969.0,747.74 970.0,748.37 971.0,748.99 972.0,749.60 973.0,750.16 974.0,750.71 975.0,751.27 976.0,751.82 977.0,752.38 978.0,752.88 979.0,753.23 980.0,753.57 981.0,753.91 982.0,754.25 983.0,754.59 984.0,754.93 985.0,754.25 986.0,753.69 987.0,753.13 988.0,752.57 989.0,752.01 990.0,751.46 991.0,750.91 992.0,750.37 993.0,749.83 994.0,749.29 995.0,748.75 996.0,748.22 997.0,747.70 998.0,747.17 999.0,746.65 1000.0,746.14 1001.0,745.63 1002.0,745.12 1003.0,744.61 1004.0,744.11 1005.0,743.62 1006.0,743.12 1007.0,742.64 1008.0,742.14 1009.0,741.64 1010.0,741.15 1011.0,740.67 1012.0,740.19 1013.0,739.71 1014.0,739.24 1015.0,738.77 1016.0,738.30 1017.0,737.84 1018.0,737.39 1019.0,736.94 1020.0,736.49 1021.0,736.05 1022.0,735.61 1023.0,735.18 1024.0,734.75 1025.0,734.32 1026.0,733.90 1027.0,733.49 1028.0,733.08 1029.0,732.68 1030.0,732.28 1031.0,731.88 1032.0,731.50 1033.0,731.11 1034.0,730.73 1035.0,730.36 1036.0,729.99 1037.0,729.63 1038.0,729.28 1039.0,728.93 1040.0,728.58 1041.0,728.25 1042.0,727.92 1043.0,727.59 1044.0,727.27 1045.0,726.96 1046.0,726.66 1047.0,726.36 1048.0,726.07 1049.0,725.78 1050.0,725.51 1051.0,725.24 1052.0,724.98 1053.0,724.73 1054.0,724.48 1055.0,724.25 1056.0,724.03 1057.0,723.81 1058.0,723.61 1059.0,723.41 1060.0,723.23 1061.0,723.07 1062.0,722.91 1063.0,722.78 1064.0,722.66 1065.0,722.56 1066.0,722.50 1067.0,722.50 1068.0,722.50 1069.0,722.50 1070.0,722.50 1071.0,722.50 1072.0,722.50 1073.0,722.50 1074.0,722.50 1075.0,722.50 1076.0,722.50 1077.0,722.50 1078.0,722.50 1079.0,722.50 1080.0,722.50 1081.0,722.50 1082.0,722.50 1083.0,722.50 1084.0,722.50 1085.0,722.50 1086.0,722.50 1087.0,722.50 1088.0,722.50 1089.0,722.50 1090.0,722.50 1091.0,722.50 1092.0,722.50 1093.0,722.50 1094.0,722.50 1095.0,722.50 1096.0,722.50 1097.0,722.50 1098.0,722.50 1099.0,722.50 1100.0,722.50 1101.0,722.50 1102.0,722.50 1103.0,722.50 1104.0,722.50 1105.0,722.50 1106.0,722.50 1107.0,722.50 1108.0,722.50 1109.0,722.50 1110.0,722.50 1111.0,722.50 1112.0,722.50 1113.0,722.50 1114.0,722.50 1115.0,722.50 1116.0,722.50 1117.0,722.50 1118.0,722.58 1119.0,723.04 1120.0,723.51 1121.0,723.97 1122.0,724.99 1123.0,726.06 1124.0,727.14 1125.0,728.21 1126.0,729.50 1127.0,730.81 1128.0,732.12 1129.0,733.44 1130.0,734.56 1131.0,735.53 1132.0,736.49 1133.0,737.46 1134.0,738.42 1135.0,739.36 1136.0,740.24 1137.0,741.11 1138.0,741.98 1139.0,742.86 1140.0,743.73 1141.0,744.60 1142.0,745.25 1143.0,745.87 1144.0,746.50 1145.0,747.12 1146.0,747.74 1147.0,748.37 1148.0,748.99 1149.0,749.60 1150.0,750.16 1151.0,750.71 1152.0,751.27 1153.0,751.82 1154.0,752.38 1155.0,752.88 1156.0,753.23 1157.0,753.57 1158.0,753.91 1159.0,754.25 1160.0,754.59 1161.0,754.93 1162.0,754.25 1163.0,753.69 1164.0,753.13 1165.0,752.57 1166.0,752.01 1167.0,751.46 1168.0,750.91 1169.0,750.37 1170.0,749.83 1171.0,749.29 1172.0,748.75 1173.0,748.22 1174.0,747.70 1175.0,747.17 1176.0,746.65 1177.0,746.14 1178.0,745.63 1179.0,745.12 1180.0,744.61 1181.0,744.11 1182.0,743.62 1183.0,743.12 1184.0,742.64 1185.0,742.14 1186.0,741.64 1187.0,741.15 1188.0,740.67 1189.0,740.19 1190.0,739.71 1191.0,739.24 1192.0,738.77 1193.0,738.30 1194.0,737.84 1195.0,737.39 1196.0,736.94 1197.0,736.49 1198.0,736.05 1199.0,735.61 1200.0,735.18 1201.0,734.75 1202.0,734.32 1203.0,733.90 1204.0,733.49 1205.0,733.08 1206.0,732.68 1207.0,732.28 1208.0,731.88 1209.0,731.50 1210.0,731.11 1211.0,730.73 1212.0,730.36 1213.0,729.99 1214.0,729.63 1215.0,729.28 1216.0,728.93 1217.0,728.58 1218.0,728.25 1219.0,727.92 1220.0,727.59 1221.0,727.27 1222.0,726.96 1223.0,726.66 1224.0,726.36 1225.0,726.07 1226.0,725.78 1227.0,725.51 1228.0,725.24 1229.0,724.98 1230.0,724.73 1231.0,724.48 1232.0,724.25 1233.0,724.03 1234.0,723.81 1235.0,723.61 1236.0,723.41 1237.0,723.23 1238.0,723.07 1239.0,722.91 1240.0,722.78 1241.0,722.66 1242.0,722.56 1243.0,722.50 1244.0,722.50 1245.0,722.50 1246.0,722.50 1247.0,722.50 1248.0,722.50 1249.0,722.50 1250.0,722.50 1251.0,722.50 1252.0,722.50 1253.0,722.50 1254.0,722.50 1255.0,722.50 1256.0,722.50 1257.0,722.50 1258.0,722.50 1259.0,722.50 1260.0,722.50 1261.0,722.50 1262.0,722.50 1263.0,722.50 1264.0,722.50 1265.0,722.50 1266.0,722.50 1267.0,722.50 1268.0,722.50 1269.0,722.50 1270.0,722.50 1271.0,722.50 1272.0,722.50 1273.0,722.50 1274.0,722.50 1275.0,722.50 1276.0,722.50 1277.0,722.50 1278.0,722.50 1279.0,722.50 1280.0,722.50 1281.0,722.50 1282.0,722.50 1283.0,722.50 1284.0,722.50 1285.0,722.50 1286.0,722.50 1287.0,722.50 1288.0,722.50 1289.0,722.50 1290.0,722.50 1291.0,722.50 1292.0,722.50 1293.0,722.50 1294.0,722.50 1295.0,722.58 1296.0,723.04 1297.0,723.51 1298.0,723.97 1299.0,724.99 1300.0,726.06 1301.0,727.14 1302.0,728.21 1303.0,729.50 1304.0,730.81 1305.0,732.12 1306.0,733.44 1307.0,734.56 1308.0,735.53 1309.0,736.49 1310.0,737.46 1311.0,738.42 1312.0,739.36 1313.0,740.24 1314.0,741.11 1315.0,741.98 1316.0,742.86 1317.0,743.73 1318.0,744.60 1319.0,745.25 1320.0,745.87 1321.0,746.50 1322.0,747.12 1323.0,747.74 1324.0,748.37 1325.0,748.99 1326.0,749.60 1327.0,750.16 1328.0,750.71 1329.0,751.27 1330.0,751.82 1331.0,752.38 1332.0,752.88 1333.0,753.23 1334.0,753.57 1335.0,753.91 1336.0,754.25 1337.0,754.59 1338.0,754.93 1339.0,754.25 1340.0,753.69 1341.0,753.13 1342.0,752.57 1343.0,752.01 1344.0,751.46 1345.0,750.91 1346.0,750.37 1347.0,749.83 1348.0,749.29 1349.0,748.75 1350.0,748.22 1351.0,747.70 1352.0,747.17 1353.0,746.65 1354.0,746.14 1355.0,745.63 1356.0,745.12 1357.0,744.61 1358.0,744.11 1359.0,743.62 1360.0,743.12 1361.0,742.64 1362.0,742.14 1363.0,741.64 1364.0,741.15 1365.0,740.67 1366.0,740.19 1367.0,739.71 1368.0,739.24 1369.0,738.77 1370.0,738.30 1371.0,737.84 1372.0,737.39 1373.0,736.94 1374.0,736.49 1375.0,736.05 1376.0,735.61 1377.0,735.18 1378.0,734.75 1379.0,734.32 1380.0,733.90 1381.0,733.49 1382.0,733.08 1383.0,732.68 1384.0,732.28 1385.0,731.88 1386.0,731.50 1387.0,731.11 1388.0,730.73 1389.0,730.36 1390.0,729.99 1391.0,729.63 1392.0,729.28 1393.0,728.93 1394.0,728.58 1395.0,728.25 1396.0,727.92 1397.0,727.59 1398.0,727.27 1399.0,726.96 1400.0,726.66 1401.0,726.36 1402.0,726.07 1403.0,725.78 1404.0,725.51 1405.0,725.24 1406.0,724.98 1407.0,724.73 1408.0,724.48 1409.0,724.25 1410.0,724.03 1410.0,600.00" fill="#0010ff"/><polygon points="950.0,1110.00 950.0,982.83 951.0,981.49 952.0,980.14 953.0,978.88 954.0,977.87 955.0,976.88 956.0,975.89 957.0,974.89 958.0,973.90 959.0,972.98 960.0,972.08 961.0,971.18 962.0,970.28 963.0,969.38 964.0,968.48 965.0,967.71 966.0,967.07 967.0,966.42 968.0,965.78 969.0,965.14 970.0,964.49 971.0,963.85 972.0,963.21 973.0,962.62 974.0,962.05 975.0,961.48 976.0,960.90 977.0,960.33 978.0,959.80 979.0,959.36 980.0,958.99 981.0,958.63 982.0,958.26 983.0,957.90 984.0,957.54 985.0,957.71 986.0,958.13 987.0,958.55 988.0,958.96 989.0,959.38 990.0,959.79 991.0,960.20 992.0,960.61 993.0,961.02 994.0,961.43 995.0,961.83 996.0,962.24 997.0,962.64 998.0,963.04 999.0,963.44 1000.0,963.84 1001.0,964.23 1002.0,964.63 1003.0,965.02 1004.0,965.41 1005.0,965.80 1006.0,966.19 1007.0,966.58 1008.0,966.97 1009.0,967.37 1010.0,967.77 1011.0,968.16 1012.0,968.55 1013.0,968.94 1014.0,969.33 1015.0,969.72 1016.0,970.10 1017.0,970.48 1018.0,970.86 1019.0,971.24 1020.0,971.62 1021.0,972.00 1022.0,972.37 1023.0,972.74 1024.0,973.11 1025.0,973.48 1026.0,973.85 1027.0,974.21 1028.0,974.57 1029.0,974.93 1030.0,975.29 1031.0,975.65 1032.0,976.00 1033.0,976.35 1034.0,976.70 1035.0,977.05 1036.0,977.40 1037.0,977.74 1038.0,978.08 1039.0,978.42 1040.0,978.75 1041.0,979.09 1042.0,979.42 1043.0,979.75 1044.0,980.08 1045.0,980.40 1046.0,980.72 1047.0,981.04 1048.0,981.36 1049.0,981.67 1050.0,981.99 1051.0,982.30 1052.0,982.60 1053.0,982.90 1054.0,983.21 1055.0,983.50 1056.0,983.80 1057.0,984.09 1058.0,984.38 1059.0,984.66 1060.0,984.95 1061.0,985.23 1062.0,985.50 1063.0,985.77 1064.0,986.04 1065.0,986.31 1066.0,986.57 1067.0,986.82 1068.0,987.06 1069.0,987.30 1070.0,987.54 1071.0,987.77 1072.0,988.00 1073.0,988.22 1074.0,988.44 1075.0,988.65 1076.0,988.86 1077.0,989.06 1078.0,989.26 1079.0,989.45 1080.0,989.63 1081.0,989.81 1082.0,989.98 1083.0,990.14 1084.0,990.29 1085.0,990.43 1086.0,990.56 1087.0,990.68 1088.0,990.77 1089.0,990.84 1090.0,990.85 1091.0,990.85 1092.0,990.85 1093.0,990.85 1094.0,990.85 1095.0,990.85 1096.0,990.85 1097.0,990.85 1098.0,990.85 1099.0,990.85 1100.0,990.85 1101.0,990.85 1102.0,990.85 1103.0,990.85 1104.0,990.85 1105.0,990.85 1106.0,990.85 1107.0,990.85 1108.0,990.85 1109.0,990.85 1110.0,990.85 1111.0,990.85 1112.0,990.85 1113.0,990.85 1114.0,990.85 1115.0,990.85 1116.0,990.85 1117.0,990.85 1118.0,990.85 1119.0,990.46 1120.0,989.98 1121.0,989.50 1122.0,988.71 1123.0,987.61 1124.0,986.51 1125.0,985.41 1126.0,984.18 1127.0,982.83 1128.0,981.49 1129.0,980.14 1130.0,978.88 1131.0,977.87 1132.0,976.88 1133.0,975.89 1134.0,974.89 1135.0,973.90 1136.0,972.98 1137.0,972.08 1138.0,971.18 1139.0,970.28 1140.0,969.38 1141.0,968.48 1142.0,967.71 1143.0,967.07 1144.0,966.42 1145.0,965.78 1146.0,965.14 1147.0,964.49 1148.0,963.85 1149.0,963.21 1150.0,962.62 1151.0,962.05 1152.0,961.48 1153.0,960.90 1154.0,960.33 1155.0,959.80 1156.0,959.36 1157.0,958.99 1158.0,958.63 1159.0,958.26 1160.0,957.90 1161.0,957.54 1162.0,957.71 1163.0,958.13 1164.0,958.55 1165.0,958.96 1166.0,959.38 1167.0,959.79 1168.0,960.20 1169.0,960.61 1170.0,961.02 1171.0,961.43 1172.0,961.83 1173.0,962.24 1174.0,962.64 1175.0,963.04 1176.0,963.44 1177.0,963.84 1178.0,964.23 1179.0,964.63 1180.0,965.02 1181.0,965.41 1182.0,965.80 1183.0,966.19 1184.0,966.58 1185.0,966.97 1186.0,967.37 1187.0,967.77 1188.0,968.16 1189.0,968.55 1190.0,968.94 1191.0,969.33 1192.0,969.72 1193.0,970.10 1194.0,970.48 1195.0,970.86 1196.0,971.24 1197.0,971.62 1198.0,972.00 1199.0,972.37 1200.0,972.74 1201.0,973.11 1202.0,973.48 1203.0,973.85 1204.0,974.21 1205.0,974.57 1206.0,974.93 1207.0,975.29 1208.0,975.65 1209.0,976.00 1210.0,976.35 1211.0,976.70 1212.0,977.05 1213.0,977.40 1214.0,977.74 1215.0,978.08 1216.0,978.42 1217.0,978.75 1218.0,979.09 1219.0,979.42 1220.0,979.75 1221.0,980.08 1222.0,980.40 1223.0,980.72 1224.0,981.04 1225.0,981.36 1226.0,981.67 1227.0,981.99 1228.0,982.30 1229.0,982.60 1230.0,982.90 1231.0,983.21 1232.0,983.50 1233.0,983.80 1234.0,984.09 1235.0,984.38 1236.0,984.66 1237.0,984.95 1238.0,985.23 1239.0,985.50 1240.0,985.77 1241.0,986.04 1242.0,986.31 1243.0,986.57 1244.0,986.82 1245.0,987.06 1246.0,987.30 1247.0,987.54 1248.0,987.77 1249.0,988.00 1250.0,988.22 1251.0,988.44 1252.0,988.65 1253.0,988.86 1254.0,989.06 1255.0,989.26 1256.0,989.45 1257.0,989.63 1258.0,989.81 1259.0,989.98 1260.0,990.14 1261.0,990.29 1262.0,990.43 1263.0,990.56 1264.0,990.68 1265.0,990.77 1266.0,990.84 1267.0,990.85 1268.0,990.85 1269.0,990.85 1270.0,990.85 1271.0,990.85 1272.0,990.85 1273.0,990.85 1274.0,990.85 1275.0,990.85 1276.0,990.85 1277.0,990.85 1278.0,990.85 1279.0,990.85 1280.0,990.85 1281.0,990.85 1282.0,990.85 1283.0,990.85 1284.0,990.85 1285.0,990.85 1286.0,990.85 1287.0,990.85 1288.0,990.85 1289.0,990.85 1290.0,990.85 1291.0,990.85 1292.0,990.85 1293.0,990.85 1294.0,990.85 1295.0,990.85 1296.0,990.46 1297.0,989.98 1298.0,989.50 1299.0,988.71 1300.0,987.61 1301.0,986.51 1302.0,985.41 1303.0,984.18 1304.0,982.83 1305.0,981.49 1306.0,980.14 1307.0,978.88 1308.0,977.87 1309.0,976.88 1310.0,975.89 1311.0,974.89 1312.0,973.90 1313.0,972.98 1314.0,972.08 1315.0,971.18 1316.0,970.28 1317.0,969.38 1318.0,968.48 1319.0,967.71 1320.0,967.07 1321.0,966.42 1322.0,965.78 1323.0,965.14 1324.0,964.49 1325.0,963.85 1326.0,963.21 1327.0,962.62 1328.0,962.05 1329.0,961.48 1330.0,960.90 1331.0,960.33 1332.0,959.80 1333.0,959.36 1334.0,958.99 1335.0,958.63 1336.0,958.26 1337.0,957.90 1338.0,957.54 1339.0,957.71 1340.0,958.13 1341.0,958.55 1342.0,958.96 1343.0,959.38 1344.0,959.79 1345.0,960.20 1346.0,960.61 1347.0,961.02 1348.0,961.43 1349.0,961.83 1350.0,962.24 1351.0,962.64 1352.0,963.04 1353.0,963.44 1354.0,963.84 1355.0,964.23 1356.0,964.63 1357.0,965.02 1358.0,965.41 1359.0,965.80 1360.0,966.19 1361.0,966.58 1362.0,966.97 1363.0,967.37 1364.0,967.77 1365.0,968.16 1366.0,968.55 1367.0,968.94 1368.0,969.33 1369.0,969.72 1370.0,970.10 1371.0,970.48 1372.0,970.86 1373.0,971.24 1374.0,971.62 1375.0,972.00 1376.0,972.37 1377.0,972.74 1378.0,973.11 1379.0,973.48 1380.0,973.85 1381.0,974.21 1382.0,974.57 1383.0,974.93 1384.0,975.29 1385.0,975.65 1386.0,976.00 1387.0,976.35 1388.0,976.70 1389.0,977.05 1390.0,977.40 1391.0,977.74 1392.0,978.08 1393.0,978.42 1394.0,978.75 1395.0,979.09 1396.0,979.42 1397.0,979.75 1398.0,980.08 1399.0,980.40 1400.0,980.72 1401.0,981.04 1402.0,981.36 1403.0,981.67 1404.0,981.99 1405.0,982.30 1406.0,982.60 1407.0,982.90 1408.0,983.21 1409.0,983.50 1410.0,983.80 1410.0,1110.00" fill="#0010ff"/><polygon points="962.8,857.15 993.1,820.85 1030.8,857.15 993.1,893.45" fill="none" stroke="#0010ff" stroke-width="1.79" stroke-linejoin="miter" stroke-miterlimit="10"/><polygon points="1139.8,857.15 1170.2,820.85 1207.8,857.15 1170.2,893.45" fill="none" stroke="#0010ff" stroke-width="1.79" stroke-linejoin="miter" stroke-miterlimit="10"/><polygon points="1316.8,857.15 1347.2,820.85 1384.8,857.15 1347.2,893.45" fill="none" stroke="#0010ff" stroke-width="1.79" stroke-linejoin="miter" stroke-miterlimit="10"/><polygon points="902.0,787.50 936.0,787.50 919.0,801.00" fill="none" stroke="#0010ff" stroke-width="1.52" stroke-linejoin="miter" stroke-miterlimit="10" clip-path="url(#cu)"/><polygon points="902.0,923.20 936.0,923.20 918.0,910.70" fill="none" stroke="#0010ff" stroke-width="1.52" stroke-linejoin="miter" stroke-miterlimit="10" clip-path="url(#cd)"/><polygon points="1079.0,787.50 1113.0,787.50 1096.0,801.00" fill="none" stroke="#0010ff" stroke-width="1.52" stroke-linejoin="miter" stroke-miterlimit="10" clip-path="url(#cu)"/><polygon points="1079.0,923.20 1113.0,923.20 1095.0,910.70" fill="none" stroke="#0010ff" stroke-width="1.52" stroke-linejoin="miter" stroke-miterlimit="10" clip-path="url(#cd)"/><polygon points="1256.0,787.50 1290.0,787.50 1273.0,801.00" fill="none" stroke="#0010ff" stroke-width="1.52" stroke-linejoin="miter" stroke-miterlimit="10" clip-path="url(#cu)"/><polygon points="1256.0,923.20 1290.0,923.20 1272.0,910.70" fill="none" stroke="#0010ff" stroke-width="1.52" stroke-linejoin="miter" stroke-miterlimit="10" clip-path="url(#cd)"/><polygon points="962.8,857.15 993.1,820.85 1030.8,857.15 993.1,893.45" fill="#000088"/><polygon points="1139.8,857.15 1170.2,820.85 1207.8,857.15 1170.2,893.45" fill="#000088"/><polygon points="1316.8,857.15 1347.2,820.85 1384.8,857.15 1347.2,893.45" fill="#000088"/><polygon points="950.0,600.00 950.0,729.85 951.0,731.09 952.0,732.33 953.0,733.37 954.0,734.34 955.0,735.30 956.0,736.27 957.0,737.23 958.0,738.17 959.0,739.05 960.0,739.92 961.0,740.79 962.0,741.67 963.0,742.54 964.0,743.41 965.0,744.06 966.0,744.68 967.0,745.31 968.0,745.93 969.0,746.55 970.0,747.18 971.0,747.80 972.0,748.41 973.0,748.97 974.0,749.52 975.0,750.08 976.0,750.63 977.0,751.19 978.0,751.74 979.0,752.16 980.0,752.56 981.0,752.96 982.0,753.36 983.0,753.76 984.0,754.16 985.0,753.48 986.0,752.92 987.0,752.35 988.0,751.79 989.0,751.23 990.0,750.67 991.0,750.12 992.0,749.57 993.0,749.03 994.0,748.49 995.0,747.95 996.0,747.41 997.0,746.88 998.0,746.36 999.0,745.83 1000.0,745.31 1001.0,744.80 1002.0,744.29 1003.0,743.78 1004.0,743.27 1005.0,742.77 1006.0,742.28 1007.0,741.79 1008.0,741.30 1009.0,740.81 1010.0,740.33 1011.0,739.86 1012.0,739.38 1013.0,738.92 1014.0,738.45 1015.0,737.99 1016.0,737.54 1017.0,737.09 1018.0,736.64 1019.0,736.20 1020.0,735.76 1021.0,735.33 1022.0,734.90 1023.0,734.47 1024.0,734.06 1025.0,733.64 1026.0,733.23 1027.0,732.83 1028.0,732.43 1029.0,732.03 1030.0,731.64 1031.0,731.26 1032.0,730.88 1033.0,730.50 1034.0,730.14 1035.0,729.77 1036.0,729.42 1037.0,729.06 1038.0,728.72 1039.0,728.38 1040.0,728.04 1041.0,727.71 1042.0,727.39 1043.0,727.08 1044.0,726.77 1045.0,726.47 1046.0,726.17 1047.0,725.88 1048.0,725.60 1049.0,725.32 1050.0,725.06 1051.0,724.80 1052.0,724.55 1053.0,724.31 1054.0,724.07 1055.0,723.85 1056.0,723.63 1057.0,723.43 1058.0,723.23 1059.0,723.05 1060.0,722.88 1061.0,722.72 1062.0,722.58 1063.0,722.45 1064.0,722.34 1065.0,722.25 1066.0,722.20 1067.0,722.20 1068.0,722.20 1069.0,722.20 1070.0,722.20 1071.0,722.20 1072.0,722.20 1073.0,722.20 1074.0,722.20 1075.0,722.20 1076.0,722.20 1077.0,722.20 1078.0,722.20 1079.0,722.20 1080.0,722.20 1081.0,722.20 1082.0,722.20 1083.0,722.20 1084.0,722.20 1085.0,722.20 1086.0,722.20 1087.0,722.20 1088.0,722.20 1089.0,722.20 1090.0,722.20 1091.0,722.20 1092.0,722.20 1093.0,722.20 1094.0,722.20 1095.0,722.20 1096.0,722.20 1097.0,722.20 1098.0,722.20 1099.0,722.20 1100.0,722.20 1101.0,722.20 1102.0,722.20 1103.0,722.20 1104.0,722.20 1105.0,722.20 1106.0,722.20 1107.0,722.20 1108.0,722.20 1109.0,722.20 1110.0,722.20 1111.0,722.20 1112.0,722.20 1113.0,722.20 1114.0,722.20 1115.0,722.20 1116.0,722.20 1117.0,722.20 1118.0,722.28 1119.0,722.67 1120.0,723.07 1121.0,723.46 1122.0,724.40 1123.0,725.40 1124.0,726.40 1125.0,727.40 1126.0,728.61 1127.0,729.85 1128.0,731.09 1129.0,732.33 1130.0,733.37 1131.0,734.34 1132.0,735.30 1133.0,736.27 1134.0,737.23 1135.0,738.17 1136.0,739.05 1137.0,739.92 1138.0,740.79 1139.0,741.67 1140.0,742.54 1141.0,743.41 1142.0,744.06 1143.0,744.68 1144.0,745.31 1145.0,745.93 1146.0,746.55 1147.0,747.18 1148.0,747.80 1149.0,748.41 1150.0,748.97 1151.0,749.52 1152.0,750.08 1153.0,750.63 1154.0,751.19 1155.0,751.74 1156.0,752.16 1157.0,752.56 1158.0,752.96 1159.0,753.36 1160.0,753.76 1161.0,754.16 1162.0,753.48 1163.0,752.92 1164.0,752.35 1165.0,751.79 1166.0,751.23 1167.0,750.67 1168.0,750.12 1169.0,749.57 1170.0,749.03 1171.0,748.49 1172.0,747.95 1173.0,747.41 1174.0,746.88 1175.0,746.36 1176.0,745.83 1177.0,745.31 1178.0,744.80 1179.0,744.29 1180.0,743.78 1181.0,743.27 1182.0,742.77 1183.0,742.28 1184.0,741.79 1185.0,741.30 1186.0,740.81 1187.0,740.33 1188.0,739.86 1189.0,739.38 1190.0,738.92 1191.0,738.45 1192.0,737.99 1193.0,737.54 1194.0,737.09 1195.0,736.64 1196.0,736.20 1197.0,735.76 1198.0,735.33 1199.0,734.90 1200.0,734.47 1201.0,734.06 1202.0,733.64 1203.0,733.23 1204.0,732.83 1205.0,732.43 1206.0,732.03 1207.0,731.64 1208.0,731.26 1209.0,730.88 1210.0,730.50 1211.0,730.14 1212.0,729.77 1213.0,729.42 1214.0,729.06 1215.0,728.72 1216.0,728.38 1217.0,728.04 1218.0,727.71 1219.0,727.39 1220.0,727.08 1221.0,726.77 1222.0,726.47 1223.0,726.17 1224.0,725.88 1225.0,725.60 1226.0,725.32 1227.0,725.06 1228.0,724.80 1229.0,724.55 1230.0,724.31 1231.0,724.07 1232.0,723.85 1233.0,723.63 1234.0,723.43 1235.0,723.23 1236.0,723.05 1237.0,722.88 1238.0,722.72 1239.0,722.58 1240.0,722.45 1241.0,722.34 1242.0,722.25 1243.0,722.20 1244.0,722.20 1245.0,722.20 1246.0,722.20 1247.0,722.20 1248.0,722.20 1249.0,722.20 1250.0,722.20 1251.0,722.20 1252.0,722.20 1253.0,722.20 1254.0,722.20 1255.0,722.20 1256.0,722.20 1257.0,722.20 1258.0,722.20 1259.0,722.20 1260.0,722.20 1261.0,722.20 1262.0,722.20 1263.0,722.20 1264.0,722.20 1265.0,722.20 1266.0,722.20 1267.0,722.20 1268.0,722.20 1269.0,722.20 1270.0,722.20 1271.0,722.20 1272.0,722.20 1273.0,722.20 1274.0,722.20 1275.0,722.20 1276.0,722.20 1277.0,722.20 1278.0,722.20 1279.0,722.20 1280.0,722.20 1281.0,722.20 1282.0,722.20 1283.0,722.20 1284.0,722.20 1285.0,722.20 1286.0,722.20 1287.0,722.20 1288.0,722.20 1289.0,722.20 1290.0,722.20 1291.0,722.20 1292.0,722.20 1293.0,722.20 1294.0,722.20 1295.0,722.28 1296.0,722.67 1297.0,723.07 1298.0,723.46 1299.0,724.40 1300.0,725.40 1301.0,726.40 1302.0,727.40 1303.0,728.61 1304.0,729.85 1305.0,731.09 1306.0,732.33 1307.0,733.37 1308.0,734.34 1309.0,735.30 1310.0,736.27 1311.0,737.23 1312.0,738.17 1313.0,739.05 1314.0,739.92 1315.0,740.79 1316.0,741.67 1317.0,742.54 1318.0,743.41 1319.0,744.06 1320.0,744.68 1321.0,745.31 1322.0,745.93 1323.0,746.55 1324.0,747.18 1325.0,747.80 1326.0,748.41 1327.0,748.97 1328.0,749.52 1329.0,750.08 1330.0,750.63 1331.0,751.19 1332.0,751.74 1333.0,752.16 1334.0,752.56 1335.0,752.96 1336.0,753.36 1337.0,753.76 1338.0,754.16 1339.0,753.48 1340.0,752.92 1341.0,752.35 1342.0,751.79 1343.0,751.23 1344.0,750.67 1345.0,750.12 1346.0,749.57 1347.0,749.03 1348.0,748.49 1349.0,747.95 1350.0,747.41 1351.0,746.88 1352.0,746.36 1353.0,745.83 1354.0,745.31 1355.0,744.80 1356.0,744.29 1357.0,743.78 1358.0,743.27 1359.0,742.77 1360.0,742.28 1361.0,741.79 1362.0,741.30 1363.0,740.81 1364.0,740.33 1365.0,739.86 1366.0,739.38 1367.0,738.92 1368.0,738.45 1369.0,737.99 1370.0,737.54 1371.0,737.09 1372.0,736.64 1373.0,736.20 1374.0,735.76 1375.0,735.33 1376.0,734.90 1377.0,734.47 1378.0,734.06 1379.0,733.64 1380.0,733.23 1381.0,732.83 1382.0,732.43 1383.0,732.03 1384.0,731.64 1385.0,731.26 1386.0,730.88 1387.0,730.50 1388.0,730.14 1389.0,729.77 1390.0,729.42 1391.0,729.06 1392.0,728.72 1393.0,728.38 1394.0,728.04 1395.0,727.71 1396.0,727.39 1397.0,727.08 1398.0,726.77 1399.0,726.47 1400.0,726.17 1401.0,725.88 1402.0,725.60 1403.0,725.32 1404.0,725.06 1405.0,724.80 1406.0,724.55 1407.0,724.31 1408.0,724.07 1409.0,723.85 1410.0,723.63 1410.0,600.00" fill="#000088"/><polygon points="950.0,1110.00 950.0,983.72 951.0,982.44 952.0,981.17 953.0,979.97 954.0,978.98 955.0,977.99 956.0,976.99 957.0,976.00 958.0,975.00 959.0,974.09 960.0,973.19 961.0,972.29 962.0,971.39 963.0,970.48 964.0,969.58 965.0,968.81 966.0,968.17 967.0,967.53 968.0,966.88 969.0,966.24 970.0,965.60 971.0,964.96 972.0,964.31 973.0,963.73 974.0,963.15 975.0,962.58 976.0,962.01 977.0,961.43 978.0,960.86 979.0,960.37 980.0,959.96 981.0,959.54 982.0,959.13 983.0,958.72 984.0,958.31 985.0,958.48 986.0,958.90 987.0,959.32 988.0,959.74 989.0,960.16 990.0,960.58 991.0,960.99 992.0,961.41 993.0,961.82 994.0,962.23 995.0,962.64 996.0,963.05 997.0,963.45 998.0,963.86 999.0,964.26 1000.0,964.66 1001.0,965.06 1002.0,965.46 1003.0,965.86 1004.0,966.25 1005.0,966.64 1006.0,967.04 1007.0,967.43 1008.0,967.81 1009.0,968.20 1010.0,968.59 1011.0,968.97 1012.0,969.35 1013.0,969.73 1014.0,970.11 1015.0,970.49 1016.0,970.86 1017.0,971.23 1018.0,971.60 1019.0,971.97 1020.0,972.34 1021.0,972.71 1022.0,973.07 1023.0,973.43 1024.0,973.79 1025.0,974.15 1026.0,974.51 1027.0,974.86 1028.0,975.21 1029.0,975.56 1030.0,975.91 1031.0,976.26 1032.0,976.60 1033.0,976.94 1034.0,977.28 1035.0,977.62 1036.0,977.95 1037.0,978.29 1038.0,978.62 1039.0,978.95 1040.0,979.27 1041.0,979.60 1042.0,979.92 1043.0,980.24 1044.0,980.55 1045.0,980.87 1046.0,981.18 1047.0,981.49 1048.0,981.80 1049.0,982.10 1050.0,982.40 1051.0,982.70 1052.0,983.00 1053.0,983.29 1054.0,983.58 1055.0,983.87 1056.0,984.15 1057.0,984.44 1058.0,984.72 1059.0,984.99 1060.0,985.26 1061.0,985.53 1062.0,985.80 1063.0,986.06 1064.0,986.32 1065.0,986.57 1066.0,986.83 1067.0,987.07 1068.0,987.32 1069.0,987.56 1070.0,987.79 1071.0,988.03 1072.0,988.25 1073.0,988.48 1074.0,988.69 1075.0,988.91 1076.0,989.11 1077.0,989.31 1078.0,989.51 1079.0,989.70 1080.0,989.88 1081.0,990.06 1082.0,990.23 1083.0,990.39 1084.0,990.54 1085.0,990.69 1086.0,990.82 1087.0,990.93 1088.0,991.03 1089.0,991.10 1090.0,991.10 1091.0,991.10 1092.0,991.10 1093.0,991.10 1094.0,991.10 1095.0,991.10 1096.0,991.10 1097.0,991.10 1098.0,991.10 1099.0,991.10 1100.0,991.10 1101.0,991.10 1102.0,991.10 1103.0,991.10 1104.0,991.10 1105.0,991.10 1106.0,991.10 1107.0,991.10 1108.0,991.10 1109.0,991.10 1110.0,991.10 1111.0,991.10 1112.0,991.10 1113.0,991.10 1114.0,991.10 1115.0,991.10 1116.0,991.10 1117.0,991.10 1118.0,991.10 1119.0,990.77 1120.0,990.37 1121.0,989.96 1122.0,989.24 1123.0,988.21 1124.0,987.18 1125.0,986.15 1126.0,985.00 1127.0,983.72 1128.0,982.44 1129.0,981.17 1130.0,979.97 1131.0,978.98 1132.0,977.99 1133.0,976.99 1134.0,976.00 1135.0,975.00 1136.0,974.09 1137.0,973.19 1138.0,972.29 1139.0,971.39 1140.0,970.48 1141.0,969.58 1142.0,968.81 1143.0,968.17 1144.0,967.53 1145.0,966.88 1146.0,966.24 1147.0,965.60 1148.0,964.96 1149.0,964.31 1150.0,963.73 1151.0,963.15 1152.0,962.58 1153.0,962.01 1154.0,961.43 1155.0,960.86 1156.0,960.37 1157.0,959.96 1158.0,959.54 1159.0,959.13 1160.0,958.72 1161.0,958.31 1162.0,958.48 1163.0,958.90 1164.0,959.32 1165.0,959.74 1166.0,960.16 1167.0,960.58 1168.0,960.99 1169.0,961.41 1170.0,961.82 1171.0,962.23 1172.0,962.64 1173.0,963.05 1174.0,963.45 1175.0,963.86 1176.0,964.26 1177.0,964.66 1178.0,965.06 1179.0,965.46 1180.0,965.86 1181.0,966.25 1182.0,966.64 1183.0,967.04 1184.0,967.43 1185.0,967.81 1186.0,968.20 1187.0,968.59 1188.0,968.97 1189.0,969.35 1190.0,969.73 1191.0,970.11 1192.0,970.49 1193.0,970.86 1194.0,971.23 1195.0,971.60 1196.0,971.97 1197.0,972.34 1198.0,972.71 1199.0,973.07 1200.0,973.43 1201.0,973.79 1202.0,974.15 1203.0,974.51 1204.0,974.86 1205.0,975.21 1206.0,975.56 1207.0,975.91 1208.0,976.26 1209.0,976.60 1210.0,976.94 1211.0,977.28 1212.0,977.62 1213.0,977.95 1214.0,978.29 1215.0,978.62 1216.0,978.95 1217.0,979.27 1218.0,979.60 1219.0,979.92 1220.0,980.24 1221.0,980.55 1222.0,980.87 1223.0,981.18 1224.0,981.49 1225.0,981.80 1226.0,982.10 1227.0,982.40 1228.0,982.70 1229.0,983.00 1230.0,983.29 1231.0,983.58 1232.0,983.87 1233.0,984.15 1234.0,984.44 1235.0,984.72 1236.0,984.99 1237.0,985.26 1238.0,985.53 1239.0,985.80 1240.0,986.06 1241.0,986.32 1242.0,986.57 1243.0,986.83 1244.0,987.07 1245.0,987.32 1246.0,987.56 1247.0,987.79 1248.0,988.03 1249.0,988.25 1250.0,988.48 1251.0,988.69 1252.0,988.91 1253.0,989.11 1254.0,989.31 1255.0,989.51 1256.0,989.70 1257.0,989.88 1258.0,990.06 1259.0,990.23 1260.0,990.39 1261.0,990.54 1262.0,990.69 1263.0,990.82 1264.0,990.93 1265.0,991.03 1266.0,991.10 1267.0,991.10 1268.0,991.10 1269.0,991.10 1270.0,991.10 1271.0,991.10 1272.0,991.10 1273.0,991.10 1274.0,991.10 1275.0,991.10 1276.0,991.10 1277.0,991.10 1278.0,991.10 1279.0,991.10 1280.0,991.10 1281.0,991.10 1282.0,991.10 1283.0,991.10 1284.0,991.10 1285.0,991.10 1286.0,991.10 1287.0,991.10 1288.0,991.10 1289.0,991.10 1290.0,991.10 1291.0,991.10 1292.0,991.10 1293.0,991.10 1294.0,991.10 1295.0,991.10 1296.0,990.77 1297.0,990.37 1298.0,989.96 1299.0,989.24 1300.0,988.21 1301.0,987.18 1302.0,986.15 1303.0,985.00 1304.0,983.72 1305.0,982.44 1306.0,981.17 1307.0,979.97 1308.0,978.98 1309.0,977.99 1310.0,976.99 1311.0,976.00 1312.0,975.00 1313.0,974.09 1314.0,973.19 1315.0,972.29 1316.0,971.39 1317.0,970.48 1318.0,969.58 1319.0,968.81 1320.0,968.17 1321.0,967.53 1322.0,966.88 1323.0,966.24 1324.0,965.60 1325.0,964.96 1326.0,964.31 1327.0,963.73 1328.0,963.15 1329.0,962.58 1330.0,962.01 1331.0,961.43 1332.0,960.86 1333.0,960.37 1334.0,959.96 1335.0,959.54 1336.0,959.13 1337.0,958.72 1338.0,958.31 1339.0,958.48 1340.0,958.90 1341.0,959.32 1342.0,959.74 1343.0,960.16 1344.0,960.58 1345.0,960.99 1346.0,961.41 1347.0,961.82 1348.0,962.23 1349.0,962.64 1350.0,963.05 1351.0,963.45 1352.0,963.86 1353.0,964.26 1354.0,964.66 1355.0,965.06 1356.0,965.46 1357.0,965.86 1358.0,966.25 1359.0,966.64 1360.0,967.04 1361.0,967.43 1362.0,967.81 1363.0,968.20 1364.0,968.59 1365.0,968.97 1366.0,969.35 1367.0,969.73 1368.0,970.11 1369.0,970.49 1370.0,970.86 1371.0,971.23 1372.0,971.60 1373.0,971.97 1374.0,972.34 1375.0,972.71 1376.0,973.07 1377.0,973.43 1378.0,973.79 1379.0,974.15 1380.0,974.51 1381.0,974.86 1382.0,975.21 1383.0,975.56 1384.0,975.91 1385.0,976.26 1386.0,976.60 1387.0,976.94 1388.0,977.28 1389.0,977.62 1390.0,977.95 1391.0,978.29 1392.0,978.62 1393.0,978.95 1394.0,979.27 1395.0,979.60 1396.0,979.92 1397.0,980.24 1398.0,980.55 1399.0,980.87 1400.0,981.18 1401.0,981.49 1402.0,981.80 1403.0,982.10 1404.0,982.40 1405.0,982.70 1406.0,983.00 1407.0,983.29 1408.0,983.58 1409.0,983.87 1410.0,984.15 1410.0,1110.00" fill="#000088"/><polygon points="902.0,787.50 936.0,787.50 919.0,801.00" fill="#000088"/><polygon points="902.0,923.20 936.0,923.20 918.0,910.70" fill="#000088"/><polygon points="1079.0,787.50 1113.0,787.50 1096.0,801.00" fill="#000088"/><polygon points="1079.0,923.20 1113.0,923.20 1095.0,910.70" fill="#000088"/><polygon points="1256.0,787.50 1290.0,787.50 1273.0,801.00" fill="#000088"/><polygon points="1256.0,923.20 1290.0,923.20 1272.0,910.70" fill="#000088"/></g><g filter="url(#bl3)"><ellipse cx="906" cy="755.5" rx="9" ry="3.5" fill="url(#spk)"/><ellipse cx="903" cy="954.5" rx="9" ry="3.5" fill="url(#spk)"/><rect x="881" y="786.6" width="74" height="1.6" fill="url(#strk)"/><rect x="881" y="922.6" width="74" height="1.6" fill="url(#strk)"/><ellipse cx="1083" cy="755.5" rx="9" ry="3.5" fill="url(#spk)"/><ellipse cx="1080" cy="954.5" rx="9" ry="3.5" fill="url(#spk)"/><rect x="1058" y="786.6" width="74" height="1.6" fill="url(#strk)"/><rect x="1058" y="922.6" width="74" height="1.6" fill="url(#strk)"/><ellipse cx="1260" cy="755.5" rx="9" ry="3.5" fill="url(#spk)"/><ellipse cx="1257" cy="954.5" rx="9" ry="3.5" fill="url(#spk)"/><rect x="1235" y="786.6" width="74" height="1.6" fill="url(#strk)"/><rect x="1235" y="922.6" width="74" height="1.6" fill="url(#strk)"/></g></g><path d="M1007.5 998.5H1361.5M1007.5 974.5H1361.5M1007.5 950.5H1361.5M1007.5 926.5H1361.5M1007.5 903.5H1361.5M1007.5 879.5H1361.5M1007.5 855.5H1361.5M1007.5 831.5H1361.5M1007.5 808.5H1361.5M1007.5 784.5H1361.5M1007.5 760.5H1361.5M1007.5 736.5H1361.5M1007.5 713.5H1361.5M1043.5 705.5V1005M1078.5 705.5V1005M1113.5 705.5V1005M1149.5 705.5V1005M1184.5 705.5V1005M1220.5 705.5V1005M1255.5 705.5V1005M1290.5 705.5V1005M1326.5 705.5V1005" stroke="#d2d2ca" stroke-width="1" stroke-dasharray="3 1" fill="none"/><path d="M1007.5 705.5H1361.5" stroke="#a8a8d8" stroke-width="1"/><path d="M1007.2 705V1005.5H1361.5" stroke="#000" stroke-width="1.2" fill="none"/><path d="M1002.5 998.0H1007M1002.5 974.3H1007M1002.5 950.5H1007M1002.5 926.8H1007M1002.5 903.1H1007M1002.5 879.3H1007M1002.5 855.6H1007M1002.5 831.9H1007M1002.5 808.1H1007M1002.5 784.4H1007M1002.5 760.7H1007M1002.5 736.9H1007M1002.5 713.2H1007M1007.2 1005V1010M1042.6 1005V1010M1078.0 1005V1010M1113.4 1005V1010M1148.8 1005V1010M1184.2 1005V1010M1219.6 1005V1010M1255.0 1005V1010M1290.4 1005V1010M1325.8 1005V1010M1361.2 1005V1010" stroke="#000" stroke-width="1"/><text x="1000.0" y="1001.6" text-anchor="end" font-family="Liberation Sans" font-size="10" fill="#000" textLength="30.5" lengthAdjust="spacingAndGlyphs" >-120.00</text><text x="1000.0" y="977.9" text-anchor="end" font-family="Liberation Sans" font-size="10" fill="#000" textLength="30.5" lengthAdjust="spacingAndGlyphs" >-100.00</text><text x="1000.0" y="954.1" text-anchor="end" font-family="Liberation Sans" font-size="10" fill="#000" textLength="25.5" lengthAdjust="spacingAndGlyphs" >-80.00</text><text x="1000.0" y="930.4" text-anchor="end" font-family="Liberation Sans" font-size="10" fill="#000" textLength="25.5" lengthAdjust="spacingAndGlyphs" >-60.00</text><text x="1000.0" y="906.7" text-anchor="end" font-family="Liberation Sans" font-size="10" fill="#000" textLength="25.5" lengthAdjust="spacingAndGlyphs" >-40.00</text><text x="1000.0" y="882.9" text-anchor="end" font-family="Liberation Sans" font-size="10" fill="#000" textLength="25.5" lengthAdjust="spacingAndGlyphs" >-20.00</text><text x="1000.0" y="859.2" text-anchor="end" font-family="Liberation Sans" font-size="10" fill="#000" textLength="17.5" lengthAdjust="spacingAndGlyphs" >0.00</text><text x="1000.0" y="835.5" text-anchor="end" font-family="Liberation Sans" font-size="10" fill="#000" textLength="22.5" lengthAdjust="spacingAndGlyphs" >20.00</text><text x="1000.0" y="811.7" text-anchor="end" font-family="Liberation Sans" font-size="10" fill="#000" textLength="22.5" lengthAdjust="spacingAndGlyphs" >40.00</text><text x="1000.0" y="788.0" text-anchor="end" font-family="Liberation Sans" font-size="10" fill="#000" textLength="22.5" lengthAdjust="spacingAndGlyphs" >60.00</text><text x="1000.0" y="764.3" text-anchor="end" font-family="Liberation Sans" font-size="10" fill="#000" textLength="22.5" lengthAdjust="spacingAndGlyphs" >80.00</text><text x="1000.0" y="740.5" text-anchor="end" font-family="Liberation Sans" font-size="10" fill="#000" textLength="27.5" lengthAdjust="spacingAndGlyphs" >100.00</text><text x="1000.0" y="716.8" text-anchor="end" font-family="Liberation Sans" font-size="10" fill="#000" textLength="27.5" lengthAdjust="spacingAndGlyphs" >120.00</text><text x="1078.0" y="1019.5" text-anchor="middle" font-family="Liberation Sans" font-size="10" fill="#000" textLength="25.5" lengthAdjust="spacingAndGlyphs" >-75.00</text><text x="1113.4" y="1019.5" text-anchor="middle" font-family="Liberation Sans" font-size="10" fill="#000" textLength="25.5" lengthAdjust="spacingAndGlyphs" >-50.00</text><text x="1148.8" y="1019.5" text-anchor="middle" font-family="Liberation Sans" font-size="10" fill="#000" textLength="25.5" lengthAdjust="spacingAndGlyphs" >-25.00</text><text x="1184.2" y="1019.5" text-anchor="middle" font-family="Liberation Sans" font-size="10" fill="#000" textLength="17.5" lengthAdjust="spacingAndGlyphs" >0.00</text><text x="1219.6" y="1019.5" text-anchor="middle" font-family="Liberation Sans" font-size="10" fill="#000" textLength="22.5" lengthAdjust="spacingAndGlyphs" >25.00</text><text x="1255.0" y="1019.5" text-anchor="middle" font-family="Liberation Sans" font-size="10" fill="#000" textLength="22.5" lengthAdjust="spacingAndGlyphs" >50.00</text><text x="1290.4" y="1019.5" text-anchor="middle" font-family="Liberation Sans" font-size="10" fill="#000" textLength="22.5" lengthAdjust="spacingAndGlyphs" >75.00</text><text x="1325.8" y="1019.5" text-anchor="middle" font-family="Liberation Sans" font-size="10" fill="#000" textLength="27.5" lengthAdjust="spacingAndGlyphs" >100.00</text><text x="1361.2" y="1019.5" text-anchor="middle" font-family="Liberation Sans" font-size="10" fill="#000" textLength="27.5" lengthAdjust="spacingAndGlyphs" >125.00</text><text x="1007.2" y="1016.0" text-anchor="middle" font-family="Liberation Sans" font-size="10" fill="#000" textLength="3.0" lengthAdjust="spacingAndGlyphs" >-</text><text x="1007.2" y="1028.0" text-anchor="middle" font-family="Liberation Sans" font-size="10" fill="#000" textLength="27.5" lengthAdjust="spacingAndGlyphs" >125.00</text><text x="1042.6" y="1016.0" text-anchor="middle" font-family="Liberation Sans" font-size="10" fill="#000" textLength="3.0" lengthAdjust="spacingAndGlyphs" >-</text><text x="1042.6" y="1028.0" text-anchor="middle" font-family="Liberation Sans" font-size="10" fill="#000" textLength="27.5" lengthAdjust="spacingAndGlyphs" >100.00</text><text x="953.5" y="855.2" text-anchor="middle" font-family="Liberation Sans" font-size="11" fill="#000" textLength="73.4" lengthAdjust="spacingAndGlyphs" transform="rotate(-90 953.5 855.2)">Amplitude [ mV]</text><path d="M823 720.5H933M823 744.5H933M823 767.5H933M823 791.5H933M823 815.5H933M823 839.5H933M823 862.5H933M823 886.5H933M823 910.5H933M823 934.5H933M823 957.5H933M823 981.5H933M823 1005.5H933M858.5 706V1005M894.5 706V1005M929.5 706V1005" stroke="#505050" stroke-width="1" stroke-dasharray="3 1" fill="none"/><polygon points="823,742 824.3,742 824.6,756 826,757.5 832,759 840,761 850,763 862,765 875,767 893,769 910,771 932,773.3 915,775 895,777 875,779 862,781 849,782.6 858,784 873,786 890,788 905,790 923,791.9 910,794 890,797 870,800 850,803 838,806 830,809 826,812 824.6,814 824.3,833 823,833" fill="#00007f"/><polygon points="823,881 824.3,881 824.6,902 826,903.6 832,905.5 842,908 855,911 870,914 888,916.5 905,918.7 921,920.6 905,923 888,925.5 866,929.8 880,931 900,933 921,934.8 912,937 918,938 900,941 880,944 860,947 845,950 833,953 826,955.5 824.6,957 824.3,969.6 823,969.6" fill="#00007f"/><path d="M822.5 706V1005.5" stroke="#000" stroke-width="1"/><text x="819.0" y="724.4" text-anchor="end" font-family="Liberation Sans" font-size="10" fill="#000" textLength="26.9" lengthAdjust="spacingAndGlyphs" >113.92</text><text x="819.0" y="748.2" text-anchor="end" font-family="Liberation Sans" font-size="10" fill="#000" textLength="22.5" lengthAdjust="spacingAndGlyphs" >93.92</text><text x="819.0" y="771.9" text-anchor="end" font-family="Liberation Sans" font-size="10" fill="#000" textLength="22.5" lengthAdjust="spacingAndGlyphs" >73.92</text><text x="819.0" y="795.6" text-anchor="end" font-family="Liberation Sans" font-size="10" fill="#000" textLength="22.5" lengthAdjust="spacingAndGlyphs" >53.92</text><text x="819.0" y="819.4" text-anchor="end" font-family="Liberation Sans" font-size="10" fill="#000" textLength="22.5" lengthAdjust="spacingAndGlyphs" >33.92</text><text x="819.0" y="843.1" text-anchor="end" font-family="Liberation Sans" font-size="10" fill="#000" textLength="22.5" lengthAdjust="spacingAndGlyphs" >13.92</text><text x="819.0" y="866.8" text-anchor="end" font-family="Liberation Sans" font-size="10" fill="#000" textLength="20.5" lengthAdjust="spacingAndGlyphs" >-6.08</text><text x="819.0" y="890.6" text-anchor="end" font-family="Liberation Sans" font-size="10" fill="#000" textLength="25.5" lengthAdjust="spacingAndGlyphs" >-26.08</text><text x="819.0" y="914.3" text-anchor="end" font-family="Liberation Sans" font-size="10" fill="#000" textLength="25.5" lengthAdjust="spacingAndGlyphs" >-46.08</text><text x="819.0" y="938.0" text-anchor="end" font-family="Liberation Sans" font-size="10" fill="#000" textLength="25.5" lengthAdjust="spacingAndGlyphs" >-66.08</text><text x="819.0" y="961.8" text-anchor="end" font-family="Liberation Sans" font-size="10" fill="#000" textLength="25.5" lengthAdjust="spacingAndGlyphs" >-86.08</text><text x="819.0" y="985.5" text-anchor="end" font-family="Liberation Sans" font-size="10" fill="#000" textLength="30.5" lengthAdjust="spacingAndGlyphs" >-106.08</text><text x="819.0" y="1009.2" text-anchor="end" font-family="Liberation Sans" font-size="10" fill="#000" textLength="30.5" lengthAdjust="spacingAndGlyphs" >-126.08</text><text x="823.0" y="1020.5" text-anchor="middle" font-family="Liberation Sans" font-size="10" fill="#000" textLength="17.5" lengthAdjust="spacingAndGlyphs" >0.00</text><text x="858.6" y="1020.5" text-anchor="middle" font-family="Liberation Sans" font-size="10" fill="#000" textLength="17.5" lengthAdjust="spacingAndGlyphs" >0.20</text><text x="894.4" y="1020.5" text-anchor="middle" font-family="Liberation Sans" font-size="10" fill="#000" textLength="17.5" lengthAdjust="spacingAndGlyphs" >0.40</text><text x="929.5" y="1020.5" text-anchor="middle" font-family="Liberation Sans" font-size="10" fill="#000" textLength="17.5" lengthAdjust="spacingAndGlyphs" >0.60</text><text x="877.0" y="1038.3" text-anchor="middle" font-family="Liberation Sans" font-size="10" fill="#000" textLength="100.0" lengthAdjust="spacingAndGlyphs" >Relative Occurrence (%)</text><defs><linearGradient id="cbg" x1="0" y1="0" x2="0" y2="1"><stop offset="0" stop-color="#800000"/><stop offset="0.125" stop-color="#ff0000"/><stop offset="0.375" stop-color="#ffff00"/><stop offset="0.625" stop-color="#00ffff"/><stop offset="0.875" stop-color="#0000ff"/><stop offset="1" stop-color="#000080"/></linearGradient></defs><rect x="1384.5" y="723" width="41" height="247.5" fill="url(#cbg)"/><path d="M1425.5 723.5H1450.5V1040.5H1384.5M1425.5 970.5H1450.5" stroke="#dcdcdc" stroke-width="1" fill="none"/><text x="1427.0" y="777.7" text-anchor="start" font-family="Liberation Sans" font-size="10" fill="#000" textLength="8.0" lengthAdjust="spacingAndGlyphs" >-7</text><text x="1427.0" y="827.0" text-anchor="start" font-family="Liberation Sans" font-size="10" fill="#000" textLength="12.3" lengthAdjust="spacingAndGlyphs" >-11</text><text x="1427.0" y="875.7" text-anchor="start" font-family="Liberation Sans" font-size="10" fill="#000" textLength="13.0" lengthAdjust="spacingAndGlyphs" >-15</text><text x="1427.0" y="924.6" text-anchor="start" font-family="Liberation Sans" font-size="10" fill="#000" textLength="13.0" lengthAdjust="spacingAndGlyphs" >-20</text><text x="1427.0" y="974.5" text-anchor="start" font-family="Liberation Sans" font-size="10" fill="#000" textLength="13.0" lengthAdjust="spacingAndGlyphs" >-24</text><text x="1404.7" y="715.5" text-anchor="middle" font-family="Liberation Sans" font-size="10" fill="#000" textLength="24.5" lengthAdjust="spacingAndGlyphs" >Log10</text><g fill="none" stroke="#b8d2e2" stroke-width="1.3"><path d="M1371 983.5C1376 982 1379 986 1382 990S1388 995.5 1391 995"/><path d="M1373.6 983.5C1378.6 982 1381.6 986 1384.6 990S1390.6 995.5 1393.6 995"/><path d="M1376.2 983.5C1381.2 982 1384.2 986 1387.2 990S1393.2 995.5 1396.2 995"/></g><text x="1393.5" y="987" font-family="Liberation Sans" font-size="7.5" font-style="italic" font-weight="bold" fill="#bdbdbd" textLength="29" lengthAdjust="spacingAndGlyphs">ADVANCED</text><text x="1393.5" y="995.5" font-family="Liberation Sans" font-size="7.5" font-style="italic" font-weight="bold" fill="#bdbdbd" textLength="39" lengthAdjust="spacingAndGlyphs">LINK ANALYZER</text><path d="M1160 1040.5H1170M1196 1040.5H1207" stroke="#222" stroke-width="1"/><path d="M1007.5 1046.5H1361.5M1007.5 1064.5H1361.5M1007.2 1046V1080M1078.0 1046V1080M1148.8 1046V1080M1219.6 1046V1080M1290.4 1046V1080M1361.2 1046V1080" stroke="#555" stroke-width="1" stroke-dasharray="3 2" fill="none"/><path d="M1066.8 1080C1069.8 1062 1072.8 1046 1076.8 1045S1083.8 1062 1086.8 1080Z" fill="#00007f"/><path d="M1096.8 1080V1072Q1101.3 1069 1105.8 1072V1080Z" fill="#00007f"/><path d="M1243.8 1080C1246.8 1062 1249.8 1046 1253.8 1045S1260.8 1062 1263.8 1080Z" fill="#00007f"/><path d="M1273.8 1080V1072Q1278.3 1069 1282.8 1072V1080Z" fill="#00007f"/><text x="1000.0" y="1068.5" text-anchor="end" font-family="Liberation Sans" font-size="10" fill="#000" textLength="17.5" lengthAdjust="spacingAndGlyphs" >0.38</text><text x="975.0" y="1062.0" text-anchor="middle" font-family="Liberation Sans" font-size="10" fill="#000" textLength="28.5" lengthAdjust="spacingAndGlyphs" transform="rotate(-90 975 1062)">urren...</text></svg></div>
<div class="a" style="left:1507px;top:56px;width:17px;height:1037px;background:#f0f0f0"></div><div class="a" style="left:1508px;top:857px;width:15px;height:15px;background:#cdcdcd"></div><div class="a" style="left:764px;top:1075px;width:743px;height:18px;background:#f0f0f0"></div><div class="a" style="left:798px;top:1076px;width:337px;height:15px;background:#cdcdcd"></div><svg class="a" style="left:763px;top:0" width="762" height="1093"><polygon points="747.00,78.20 752.50,72.70 758.00,78.20 758.00,82.00 752.50,76.50 747.00,82.00" fill="#606060"/><polygon points="747.00,1052.55 752.50,1058.05 758.00,1052.55 758.00,1048.75 752.50,1054.25 747.00,1048.75" fill="#606060"/><polygon points="23.25,1078.10 17.75,1083.60 23.25,1089.10 27.05,1089.10 21.55,1083.60 27.05,1078.10" fill="#606060"/><polygon points="721.95,1078.10 727.45,1083.60 721.95,1089.10 718.15,1089.10 723.65,1083.60 718.15,1078.10" fill="#606060"/></svg>
<div class="a" style="left:763px;top:1092px;width:762px;height:1px;background:#2b3a4a"></div>
<div class="a" style="left:1524px;top:0;width:1px;height:117px;background:#2b3442"></div>
<div class="a" style="left:1524px;top:117px;width:1px;height:512px;background:#9a9a9a"></div>
<div class="a" style="left:1524px;top:629px;width:1px;height:464px;background:#28486a"></div>
<div class="a" style="left:762px;top:1004px;width:1px;height:11px;background:#0a64b4"></div>
<div class="a" style="left:762px;top:1038px;width:1px;height:22px;background:#c8401e"></div>
<div class="a" style="left:1478px;top:0;width:47px;height:1px;background:#1e3250"></div>
</body></html>
